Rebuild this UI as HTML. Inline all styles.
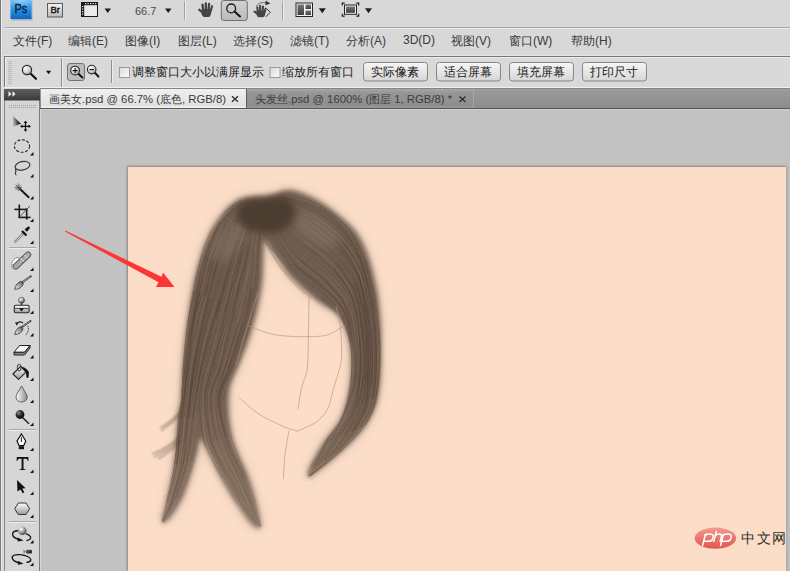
<!DOCTYPE html>
<html><head><meta charset="utf-8">
<style>
*{margin:0;padding:0;box-sizing:border-box}
html,body{width:794px;height:571px;overflow:hidden;background:#fff;font-family:"Liberation Sans",sans-serif}
.abs{position:absolute}
#app{position:absolute;left:0;top:0;width:790px;height:571px;background:#d8d8d8;overflow:hidden}
#lline{left:0;top:0;width:2px;height:571px;background:linear-gradient(90deg,#7c7c7c 50%,#e8e8e8 50%)}
#hline1{left:5px;top:27px;width:785px;height:1px;background:#a4a4a4}
#hline1b{left:5px;top:28px;width:785px;height:1px;background:#ececec}
#opt{left:4px;top:56px;width:786px;height:32px;border-top:1px solid #777;border-left:1px solid #777;background:#d9d9d9;box-shadow:inset 1px 1px 0 #eeeeee}
#optabove{left:4px;top:55px;width:786px;height:1px;background:#e4e4e4}
#optbot{left:4px;top:87px;width:786px;height:1px;background:#f0f0f0}
#tabbar{left:40px;top:88px;width:750px;height:22px;background:linear-gradient(#858585 0,#858585 1px,#a2a2a2 1px,#a2a2a2 2px,#9a9a9a 2px,#8c8c8c 20px,#555 20px,#555 21px,#d0d0d0 21px,#d0d0d0 22px)}
#work{left:41px;top:110px;width:749px;height:461px;background:#c2c2c2}
#canvas{left:128px;top:167px;width:658px;height:404px;background:#fcdec8;box-shadow:0 0 3px 1px rgba(0,0,0,.18),-1px -1px 1px rgba(0,0,0,.12)}
#phead{left:4px;top:88px;width:36px;height:12px;background:linear-gradient(#5a5a5a,#3c3c3c)}
#tools{left:4px;top:100px;width:36px;height:471px;background:#d6d6d6;border-left:1px solid #8a8a8a;border-right:1px solid #7a7a7a}
.otxt{font-size:12px;color:#1a1a1a;white-space:nowrap;line-height:14px}
.tabt{font-size:11.3px;white-space:nowrap;line-height:12px}
.menu{top:33px;font-size:12px;color:#3a3a3a;white-space:nowrap}
</style></head><body>
<div id="app">
<div class="abs" id="lline"></div>
<div class="abs" id="hline1"></div>
<div class="abs" id="hline1b"></div>

<div class="abs" id="optabove"></div>
<div class="abs" id="opt"></div>
<div class="abs" id="optbot"></div>
<div class="abs" id="tabbar"></div>
<div class="abs" id="work"></div>
<div class="abs" id="canvas"></div>

<svg class="abs" style="left:0;top:0" width="794" height="571" viewBox="0 0 794 571">
<defs>
<filter id="b3" x="-20%" y="-20%" width="140%" height="140%"><feGaussianBlur stdDeviation="2.6"/></filter>
<filter id="b1" x="-20%" y="-20%" width="140%" height="140%"><feGaussianBlur stdDeviation="0.45"/></filter>
<filter id="b6" x="-50%" y="-50%" width="200%" height="200%"><feGaussianBlur stdDeviation="6"/></filter>
<filter id="b4" x="-50%" y="-50%" width="200%" height="200%"><feGaussianBlur stdDeviation="3.5"/></filter>
<filter id="b5" x="-50%" y="-50%" width="200%" height="200%"><feGaussianBlur stdDeviation="5"/></filter>
<linearGradient id="fadeg" gradientUnits="userSpaceOnUse" x1="0" x2="0" y1="380" y2="535"><stop offset="0" stop-color="#fff"/><stop offset="1" stop-color="#fff" stop-opacity="0.8"/></linearGradient><mask id="fm" maskUnits="userSpaceOnUse" x="0" y="0" width="794" height="571"><rect x="0" y="0" width="794" height="571" fill="url(#fadeg)"/></mask>
<filter id="bw" filterUnits="userSpaceOnUse" x="140" y="400" width="50" height="70"><feGaussianBlur stdDeviation="1"/></filter>
<clipPath id="hc"><path d="M232.0,204.0 C236.2,200.9 239.7,198.9 246.0,197.5 C252.3,196.1 263.5,196.7 270.0,195.5 C276.5,194.3 280.2,191.1 285.0,190.5 C289.8,189.9 292.8,189.9 299.0,192.0 C305.2,194.1 314.7,198.5 322.0,203.0 C329.3,207.5 337.0,213.7 343.0,219.0 C349.0,224.3 353.7,228.3 358.0,235.0 C362.3,241.7 365.7,248.5 369.0,259.0 C372.3,269.5 376.0,283.3 378.0,298.0 C380.0,312.7 381.0,330.7 381.0,347.0 C381.0,363.3 380.5,383.0 378.0,396.0 C375.5,409.0 371.8,416.0 366.0,425.0 C360.2,434.0 351.7,441.8 343.0,450.0 C334.3,458.2 319.8,469.5 314.0,474.0 C308.2,478.5 308.8,477.8 308.0,477.0 C307.2,476.2 306.7,474.3 309.0,469.0 C311.3,463.7 316.7,453.5 322.0,445.0 C327.3,436.5 336.3,428.0 341.0,418.0 C345.7,408.0 348.3,396.0 350.0,385.0 C351.7,374.0 351.7,361.2 351.0,352.0 C350.3,342.8 348.3,336.3 346.0,330.0 C343.7,323.7 341.7,318.8 337.0,314.0 C332.3,309.2 325.3,306.8 318.0,301.0 C310.7,295.2 299.2,285.3 293.0,279.0 C286.8,272.7 285.5,269.2 281.0,263.0 C276.5,256.8 268.8,245.7 266.0,242.0 C263.2,238.3 264.5,238.0 264.0,241.0 C263.5,244.0 263.3,253.2 263.0,260.0 C262.7,266.8 263.0,273.7 262.0,282.0 C261.0,290.3 259.2,300.7 257.0,310.0 C254.8,319.3 251.8,329.3 249.0,338.0 C246.2,346.7 243.3,353.0 240.0,362.0 C236.7,371.0 230.3,379.7 229.0,392.0 C227.7,404.3 228.7,421.7 232.0,436.0 C235.3,450.3 244.8,466.5 249.0,478.0 C253.2,489.5 255.0,496.8 257.0,505.0 C259.0,513.2 261.8,523.7 261.0,527.0 C260.2,530.3 255.8,528.5 252.0,525.0 C248.2,521.5 243.2,513.8 238.0,506.0 C232.8,498.2 226.7,488.3 221.0,478.0 C215.3,467.7 207.5,450.5 204.0,444.0 C200.5,437.5 201.2,437.5 200.0,439.0 C198.8,440.5 199.5,444.2 197.0,453.0 C194.5,461.8 189.3,481.3 185.0,492.0 C180.7,502.7 174.8,512.0 171.0,517.0 C167.2,522.0 162.8,524.3 162.0,522.0 C161.2,519.7 164.0,512.7 166.0,503.0 C168.0,493.3 172.0,478.5 174.0,464.0 C176.0,449.5 176.8,426.7 178.0,416.0 C179.2,405.3 180.2,408.7 181.0,400.0 C181.8,391.3 182.0,376.5 183.0,364.0 C184.0,351.5 185.3,337.7 187.0,325.0 C188.7,312.3 191.3,297.2 193.0,288.0 C194.7,278.8 195.3,276.3 197.0,270.0 C198.7,263.7 200.7,256.5 203.0,250.0 C205.3,243.5 208.0,236.7 211.0,231.0 C214.0,225.3 217.5,220.5 221.0,216.0 C224.5,211.5 227.8,207.1 232.0,204.0Z"/></clipPath>
</defs>
<g mask="url(#fm)">
<path d="M232.0,204.0 C236.2,200.9 239.7,198.9 246.0,197.5 C252.3,196.1 263.5,196.7 270.0,195.5 C276.5,194.3 280.2,191.1 285.0,190.5 C289.8,189.9 292.8,189.9 299.0,192.0 C305.2,194.1 314.7,198.5 322.0,203.0 C329.3,207.5 337.0,213.7 343.0,219.0 C349.0,224.3 353.7,228.3 358.0,235.0 C362.3,241.7 365.7,248.5 369.0,259.0 C372.3,269.5 376.0,283.3 378.0,298.0 C380.0,312.7 381.0,330.7 381.0,347.0 C381.0,363.3 380.5,383.0 378.0,396.0 C375.5,409.0 371.8,416.0 366.0,425.0 C360.2,434.0 351.7,441.8 343.0,450.0 C334.3,458.2 319.8,469.5 314.0,474.0 C308.2,478.5 308.8,477.8 308.0,477.0 C307.2,476.2 306.7,474.3 309.0,469.0 C311.3,463.7 316.7,453.5 322.0,445.0 C327.3,436.5 336.3,428.0 341.0,418.0 C345.7,408.0 348.3,396.0 350.0,385.0 C351.7,374.0 351.7,361.2 351.0,352.0 C350.3,342.8 348.3,336.3 346.0,330.0 C343.7,323.7 341.7,318.8 337.0,314.0 C332.3,309.2 325.3,306.8 318.0,301.0 C310.7,295.2 299.2,285.3 293.0,279.0 C286.8,272.7 285.5,269.2 281.0,263.0 C276.5,256.8 268.8,245.7 266.0,242.0 C263.2,238.3 264.5,238.0 264.0,241.0 C263.5,244.0 263.3,253.2 263.0,260.0 C262.7,266.8 263.0,273.7 262.0,282.0 C261.0,290.3 259.2,300.7 257.0,310.0 C254.8,319.3 251.8,329.3 249.0,338.0 C246.2,346.7 243.3,353.0 240.0,362.0 C236.7,371.0 230.3,379.7 229.0,392.0 C227.7,404.3 228.7,421.7 232.0,436.0 C235.3,450.3 244.8,466.5 249.0,478.0 C253.2,489.5 255.0,496.8 257.0,505.0 C259.0,513.2 261.8,523.7 261.0,527.0 C260.2,530.3 255.8,528.5 252.0,525.0 C248.2,521.5 243.2,513.8 238.0,506.0 C232.8,498.2 226.7,488.3 221.0,478.0 C215.3,467.7 207.5,450.5 204.0,444.0 C200.5,437.5 201.2,437.5 200.0,439.0 C198.8,440.5 199.5,444.2 197.0,453.0 C194.5,461.8 189.3,481.3 185.0,492.0 C180.7,502.7 174.8,512.0 171.0,517.0 C167.2,522.0 162.8,524.3 162.0,522.0 C161.2,519.7 164.0,512.7 166.0,503.0 C168.0,493.3 172.0,478.5 174.0,464.0 C176.0,449.5 176.8,426.7 178.0,416.0 C179.2,405.3 180.2,408.7 181.0,400.0 C181.8,391.3 182.0,376.5 183.0,364.0 C184.0,351.5 185.3,337.7 187.0,325.0 C188.7,312.3 191.3,297.2 193.0,288.0 C194.7,278.8 195.3,276.3 197.0,270.0 C198.7,263.7 200.7,256.5 203.0,250.0 C205.3,243.5 208.0,236.7 211.0,231.0 C214.0,225.3 217.5,220.5 221.0,216.0 C224.5,211.5 227.8,207.1 232.0,204.0Z" fill="#8d7a6b" opacity="0.4" filter="url(#b6)"/>
<path d="M232.0,204.0 C236.2,200.9 239.7,198.9 246.0,197.5 C252.3,196.1 263.5,196.7 270.0,195.5 C276.5,194.3 280.2,191.1 285.0,190.5 C289.8,189.9 292.8,189.9 299.0,192.0 C305.2,194.1 314.7,198.5 322.0,203.0 C329.3,207.5 337.0,213.7 343.0,219.0 C349.0,224.3 353.7,228.3 358.0,235.0 C362.3,241.7 365.7,248.5 369.0,259.0 C372.3,269.5 376.0,283.3 378.0,298.0 C380.0,312.7 381.0,330.7 381.0,347.0 C381.0,363.3 380.5,383.0 378.0,396.0 C375.5,409.0 371.8,416.0 366.0,425.0 C360.2,434.0 351.7,441.8 343.0,450.0 C334.3,458.2 319.8,469.5 314.0,474.0 C308.2,478.5 308.8,477.8 308.0,477.0 C307.2,476.2 306.7,474.3 309.0,469.0 C311.3,463.7 316.7,453.5 322.0,445.0 C327.3,436.5 336.3,428.0 341.0,418.0 C345.7,408.0 348.3,396.0 350.0,385.0 C351.7,374.0 351.7,361.2 351.0,352.0 C350.3,342.8 348.3,336.3 346.0,330.0 C343.7,323.7 341.7,318.8 337.0,314.0 C332.3,309.2 325.3,306.8 318.0,301.0 C310.7,295.2 299.2,285.3 293.0,279.0 C286.8,272.7 285.5,269.2 281.0,263.0 C276.5,256.8 268.8,245.7 266.0,242.0 C263.2,238.3 264.5,238.0 264.0,241.0 C263.5,244.0 263.3,253.2 263.0,260.0 C262.7,266.8 263.0,273.7 262.0,282.0 C261.0,290.3 259.2,300.7 257.0,310.0 C254.8,319.3 251.8,329.3 249.0,338.0 C246.2,346.7 243.3,353.0 240.0,362.0 C236.7,371.0 230.3,379.7 229.0,392.0 C227.7,404.3 228.7,421.7 232.0,436.0 C235.3,450.3 244.8,466.5 249.0,478.0 C253.2,489.5 255.0,496.8 257.0,505.0 C259.0,513.2 261.8,523.7 261.0,527.0 C260.2,530.3 255.8,528.5 252.0,525.0 C248.2,521.5 243.2,513.8 238.0,506.0 C232.8,498.2 226.7,488.3 221.0,478.0 C215.3,467.7 207.5,450.5 204.0,444.0 C200.5,437.5 201.2,437.5 200.0,439.0 C198.8,440.5 199.5,444.2 197.0,453.0 C194.5,461.8 189.3,481.3 185.0,492.0 C180.7,502.7 174.8,512.0 171.0,517.0 C167.2,522.0 162.8,524.3 162.0,522.0 C161.2,519.7 164.0,512.7 166.0,503.0 C168.0,493.3 172.0,478.5 174.0,464.0 C176.0,449.5 176.8,426.7 178.0,416.0 C179.2,405.3 180.2,408.7 181.0,400.0 C181.8,391.3 182.0,376.5 183.0,364.0 C184.0,351.5 185.3,337.7 187.0,325.0 C188.7,312.3 191.3,297.2 193.0,288.0 C194.7,278.8 195.3,276.3 197.0,270.0 C198.7,263.7 200.7,256.5 203.0,250.0 C205.3,243.5 208.0,236.7 211.0,231.0 C214.0,225.3 217.5,220.5 221.0,216.0 C224.5,211.5 227.8,207.1 232.0,204.0Z" fill="#6f5d50" filter="url(#b3)"/>
<g filter="url(#b1)"><g clip-path="url(#hc)"><path d="M246.3,204.1 C243.2,207.8 233.0,217.2 227.9,226.5 C222.8,235.9 219.4,248.7 215.9,260.3 C212.4,271.8 209.8,284.1 206.9,295.9 C204.0,307.7 201.2,318.8 198.5,331.0 C195.8,343.2 192.7,354.8 190.7,369.1 C188.8,383.4 188.6,401.2 186.9,416.8 C185.1,432.5 182.7,448.8 180.1,462.9 C177.6,477.0 173.0,495.0 171.6,501.5" stroke="#9a8576" stroke-opacity="0.24" stroke-width="0.34" fill="none"/>
<path d="M215.1,260.5 C213.5,266.4 208.1,283.8 205.1,295.6 C202.2,307.4 199.7,319.2 197.3,331.4 C195.0,343.6 193.0,354.4 191.1,368.7 C189.2,383.0 186.8,409.1 185.9,417.2" stroke="#9a8576" stroke-opacity="0.49" stroke-width="0.34" fill="none"/>
<path d="M211.4,298.8 C209.8,304.6 204.6,321.6 201.9,333.6 C199.1,345.6 197.0,356.7 194.8,370.8 C192.5,384.9 190.2,402.8 188.3,418.1 C186.5,433.3 184.6,454.9 183.8,462.3" stroke="#4c3b30" stroke-opacity="0.47" stroke-width="0.40" fill="none"/>
<path d="M260.3,211.4 C259.5,215.9 257.7,228.0 255.4,238.5 C253.1,248.9 249.9,262.2 246.5,274.0 C243.1,285.8 239.0,297.8 235.0,309.3 C231.1,320.9 226.9,331.8 222.7,343.4 C218.5,355.0 213.7,366.1 210.0,378.8 C206.3,391.5 203.3,406.1 200.6,419.7 C198.0,433.3 197.0,447.3 193.9,460.5 C190.8,473.6 184.1,492.2 182.2,498.5" stroke="#9a8576" stroke-opacity="0.40" stroke-width="0.30" fill="none"/>
<path d="M249.9,236.7 C248.5,242.4 245.2,259.5 241.8,271.2 C238.4,283.0 233.1,295.3 229.3,307.1 C225.6,318.8 223.1,330.1 219.5,341.8 C215.9,353.5 210.8,364.2 207.5,377.2 C204.2,390.3 202.3,405.9 199.7,419.9 C197.1,433.8 195.4,447.6 191.9,460.7 C188.4,473.9 183.6,488.5 178.9,498.7 C174.2,508.9 166.2,518.0 163.6,521.9" stroke="#4c3b30" stroke-opacity="0.33" stroke-width="0.33" fill="none"/>
<path d="M218.9,301.9 C217.4,307.8 212.9,325.6 209.8,337.6 C206.6,349.5 203.2,360.1 200.3,373.6 C197.3,387.1 194.2,403.7 192.1,418.4 C190.0,433.1 190.7,448.0 187.8,461.6 C184.9,475.1 176.9,493.2 174.8,499.6" stroke="#4c3b30" stroke-opacity="0.26" stroke-width="0.59" fill="none"/>
<path d="M231.2,227.0 C229.1,232.7 222.0,249.4 218.4,261.1 C214.8,272.8 212.4,285.4 209.5,297.3 C206.6,309.1 204.0,320.0 201.1,332.1 C198.2,344.2 194.5,355.6 192.2,369.8 C189.8,384.1 188.8,402.1 187.1,417.6 C185.3,433.1 184.4,449.0 181.9,462.9 C179.3,476.8 173.5,494.5 171.8,500.8" stroke="#4c3b30" stroke-opacity="0.31" stroke-width="0.31" fill="none"/>
<path d="M240.1,200.0 C236.2,203.6 223.1,211.9 216.7,221.1 C210.2,230.3 205.0,243.4 201.3,255.1 C197.6,266.8 196.9,279.4 194.5,291.1 C192.0,302.8 188.8,313.1 186.8,325.2 C184.7,337.4 183.6,348.9 182.2,364.1 C180.7,379.3 178.7,407.6 178.0,416.3" stroke="#4c3b30" stroke-opacity="0.43" stroke-width="0.44" fill="none"/>
<path d="M244.6,201.9 C241.1,205.6 229.4,214.9 223.4,224.1 C217.4,233.4 212.4,246.0 208.7,257.6 C205.0,269.2 204.0,282.1 201.3,293.8 C198.5,305.6 194.6,315.9 192.2,328.1 C189.7,340.4 188.0,352.6 186.5,367.3 C185.0,382.0 184.5,400.2 183.2,416.3 C181.9,432.4 181.0,449.6 178.5,463.9 C176.1,478.1 171.1,492.3 168.4,501.9 C165.7,511.5 163.5,518.3 162.5,521.6" stroke="#4c3b30" stroke-opacity="0.48" stroke-width="0.43" fill="none"/>
<path d="M231.5,307.3 C229.5,313.3 223.1,331.2 219.1,342.9 C215.2,354.7 211.0,365.1 207.8,377.9 C204.6,390.7 202.6,406.1 200.0,420.0 C197.4,433.8 195.5,447.9 192.1,461.0 C188.8,474.1 181.9,492.4 179.8,498.7" stroke="#4c3b30" stroke-opacity="0.43" stroke-width="0.34" fill="none"/>
<path d="M207.2,257.0 C205.8,263.0 202.0,281.5 199.2,293.3 C196.4,305.0 192.8,315.4 190.5,327.5 C188.1,339.5 186.7,351.0 185.1,365.8 C183.6,380.5 182.0,407.6 181.4,416.0" stroke="#4c3b30" stroke-opacity="0.44" stroke-width="0.45" fill="none"/>
<path d="M226.7,225.5 C224.5,231.0 217.2,247.3 213.3,258.8 C209.4,270.4 206.3,283.0 203.3,294.9 C200.3,306.7 197.6,317.6 195.4,329.7 C193.2,341.9 191.8,353.4 189.8,367.9 C187.9,382.4 184.6,408.6 183.5,416.8" stroke="#9a8576" stroke-opacity="0.49" stroke-width="0.42" fill="none"/>
<path d="M251.9,206.2 C249.1,210.1 239.7,220.0 235.1,229.7 C230.6,239.3 228.0,252.4 224.4,264.0 C220.8,275.7 216.8,287.8 213.7,299.5 C210.5,311.2 208.4,322.1 205.5,334.2 C202.7,346.2 199.5,357.8 196.7,371.7 C194.0,385.7 191.1,402.7 189.0,417.7 C187.0,432.8 187.3,448.2 184.5,462.1 C181.7,476.0 175.7,491.1 172.2,501.1 C168.8,511.2 165.1,519.0 163.7,522.6" stroke="#9a8576" stroke-opacity="0.21" stroke-width="0.53" fill="none"/>
<path d="M245.1,203.2 C242.2,206.9 233.0,216.4 227.6,225.8 C222.3,235.1 216.6,247.6 212.9,259.3 C209.2,270.9 208.1,283.7 205.4,295.5 C202.8,307.3 199.8,317.7 197.0,329.9 C194.3,342.1 191.1,354.1 189.1,368.6 C187.0,383.0 185.3,408.6 184.6,416.6" stroke="#9a8576" stroke-opacity="0.50" stroke-width="0.43" fill="none"/>
<path d="M233.3,308.8 C231.5,314.6 226.1,331.7 222.0,343.3 C217.9,355.0 212.2,365.9 208.8,378.6 C205.3,391.3 203.8,405.7 201.3,419.4 C198.8,433.1 197.6,447.9 194.0,460.9 C190.3,474.0 181.9,491.7 179.5,497.8" stroke="#4c3b30" stroke-opacity="0.23" stroke-width="0.55" fill="none"/>
<path d="M222.1,263.7 C220.3,269.6 214.6,287.4 211.5,299.0 C208.4,310.7 206.1,321.9 203.4,333.8 C200.6,345.8 197.3,356.8 194.7,370.7 C192.1,384.6 189.9,402.0 187.7,417.3 C185.6,432.6 184.7,448.7 182.0,462.6 C179.4,476.4 173.5,494.1 171.8,500.4" stroke="#4c3b30" stroke-opacity="0.21" stroke-width="0.36" fill="none"/>
<path d="M213.0,259.1 C211.7,265.1 208.2,283.2 205.3,295.0 C202.4,306.9 198.4,318.0 195.7,330.2 C193.0,342.3 190.8,353.6 189.1,368.0 C187.3,382.5 186.6,401.0 185.1,416.8 C183.6,432.5 181.1,454.8 180.3,462.4" stroke="#4c3b30" stroke-opacity="0.23" stroke-width="0.59" fill="none"/>
<path d="M257.9,210.7 C257.0,215.1 254.8,226.9 252.4,237.2 C249.9,247.4 246.8,260.6 243.3,272.2 C239.8,283.8 235.2,295.2 231.2,306.8 C227.3,318.4 223.4,329.8 219.6,341.6 C215.8,353.5 211.7,365.0 208.4,377.9 C205.0,390.9 202.0,405.5 199.4,419.3 C196.7,433.1 195.5,447.3 192.4,460.6 C189.3,473.9 182.5,492.6 180.5,499.0" stroke="#9a8576" stroke-opacity="0.21" stroke-width="0.49" fill="none"/>
<path d="M235.6,309.1 C233.4,315.1 226.4,333.1 222.4,344.7 C218.4,356.3 215.1,366.3 211.7,378.9 C208.4,391.4 203.7,413.3 202.1,420.1" stroke="#4c3b30" stroke-opacity="0.22" stroke-width="0.57" fill="none"/>
<path d="M226.6,225.9 C224.5,231.6 217.5,248.5 214.0,260.2 C210.5,271.9 208.6,284.1 205.7,295.9 C202.7,307.6 198.8,318.5 196.3,330.7 C193.8,342.9 192.6,354.8 190.6,369.2 C188.6,383.5 186.0,401.2 184.2,416.8 C182.5,432.5 180.7,455.4 180.0,463.1" stroke="#4c3b30" stroke-opacity="0.48" stroke-width="0.31" fill="none"/>
<path d="M250.9,206.1 C248.2,209.9 239.4,219.2 234.6,228.9 C229.8,238.6 226.0,252.4 222.3,264.2 C218.6,275.9 215.6,287.6 212.4,299.3 C209.2,310.9 205.6,322.3 203.0,334.2 C200.4,346.1 199.0,357.0 196.9,370.9 C194.7,384.8 191.3,410.0 190.2,417.8" stroke="#4c3b30" stroke-opacity="0.32" stroke-width="0.52" fill="none"/>
<path d="M220.4,262.6 C219.1,268.5 215.4,286.1 212.2,298.0 C209.0,309.8 204.1,321.6 201.1,333.6 C198.0,345.6 196.0,356.1 193.9,370.1 C191.7,384.2 190.2,402.7 188.1,418.1 C186.1,433.6 184.3,449.0 181.7,462.8 C179.1,476.7 174.2,494.9 172.7,501.3" stroke="#9a8576" stroke-opacity="0.28" stroke-width="0.45" fill="none"/>
<path d="M209.8,258.5 C208.5,264.4 204.4,282.2 201.8,293.9 C199.1,305.5 196.2,316.1 193.9,328.3 C191.7,340.4 190.0,352.2 188.3,367.0 C186.5,381.8 185.1,401.0 183.4,416.9 C181.6,432.9 178.5,455.1 177.5,462.7" stroke="#4c3b30" stroke-opacity="0.49" stroke-width="0.38" fill="none"/>
<path d="M254.0,207.9 C252.1,212.1 246.6,222.8 243.0,232.7 C239.3,242.6 235.3,255.7 232.0,267.4 C228.7,279.2 226.7,291.3 223.2,303.1 C219.6,315.0 214.3,326.7 210.9,338.6 C207.5,350.5 205.8,361.2 202.9,374.4 C200.0,387.7 195.1,411.0 193.5,418.3" stroke="#4c3b30" stroke-opacity="0.42" stroke-width="0.36" fill="none"/>
<path d="M205.1,295.8 C203.5,301.7 198.1,318.8 195.6,330.9 C193.0,343.0 191.7,354.2 189.8,368.5 C188.0,382.8 186.2,401.0 184.6,416.9 C183.0,432.7 183.1,449.4 180.4,463.5 C177.8,477.6 171.6,491.7 168.7,501.6 C165.8,511.4 164.1,518.9 163.2,522.4" stroke="#9a8576" stroke-opacity="0.48" stroke-width="0.58" fill="none"/>
<path d="M215.3,300.9 C214.0,306.8 209.8,324.1 207.1,336.0 C204.3,347.8 201.3,358.4 198.8,371.9 C196.2,385.5 194.3,402.5 191.9,417.5 C189.4,432.5 187.4,448.1 184.2,462.0 C181.0,475.8 176.2,490.6 172.9,500.6 C169.5,510.6 165.6,518.6 164.2,522.2" stroke="#9a8576" stroke-opacity="0.29" stroke-width="0.58" fill="none"/>
<path d="M200.4,294.2 C199.1,300.0 194.9,316.8 192.9,328.9 C190.8,340.9 189.6,351.8 187.9,366.5 C186.2,381.2 184.4,400.9 182.6,416.9 C180.8,433.0 177.9,455.2 177.0,462.9" stroke="#9a8576" stroke-opacity="0.21" stroke-width="0.40" fill="none"/>
<path d="M233.8,228.7 C231.7,234.3 224.6,250.9 221.0,262.5 C217.5,274.1 215.5,286.4 212.5,298.2 C209.5,310.0 206.3,320.9 203.2,333.1 C200.1,345.2 196.5,356.9 193.9,371.0 C191.4,385.2 189.0,410.4 188.0,418.2" stroke="#9a8576" stroke-opacity="0.21" stroke-width="0.48" fill="none"/>
<path d="M210.1,297.9 C208.7,303.8 204.1,321.4 201.5,333.5 C198.9,345.6 196.8,356.5 194.5,370.6 C192.3,384.7 189.8,402.5 187.9,417.9 C186.1,433.3 186.2,449.2 183.5,462.9 C180.9,476.7 175.5,490.7 171.9,500.5 C168.3,510.2 163.5,518.0 161.8,521.5" stroke="#4c3b30" stroke-opacity="0.43" stroke-width="0.41" fill="none"/>
<path d="M237.7,270.2 C236.0,276.0 230.8,293.5 227.2,305.2 C223.7,316.9 220.2,328.5 216.6,340.3 C212.9,352.1 208.5,362.9 205.4,376.0 C202.2,389.1 200.1,404.8 197.5,419.0 C194.9,433.1 191.1,453.9 189.8,460.9" stroke="#9a8576" stroke-opacity="0.49" stroke-width="0.49" fill="none"/>
<path d="M213.7,260.0 C212.2,266.0 207.5,284.1 204.4,295.8 C201.3,307.4 197.5,317.8 195.1,329.9 C192.7,342.1 191.4,354.2 189.8,368.7 C188.2,383.2 187.5,401.2 185.6,416.9 C183.8,432.6 181.6,448.7 178.9,462.9 C176.2,477.1 171.0,495.6 169.4,502.2" stroke="#4c3b30" stroke-opacity="0.30" stroke-width="0.40" fill="none"/>
<path d="M229.8,227.5 C227.8,233.1 221.2,249.5 217.5,261.1 C213.8,272.7 210.5,285.3 207.5,297.3 C204.6,309.3 202.0,320.6 199.7,332.8 C197.4,345.0 196.0,356.4 193.8,370.4 C191.6,384.4 188.7,401.6 186.5,416.9 C184.3,432.3 183.1,448.5 180.6,462.6 C178.2,476.6 174.7,491.2 171.7,501.1 C168.6,511.0 163.7,518.4 162.1,521.9" stroke="#4c3b30" stroke-opacity="0.29" stroke-width="0.38" fill="none"/>
<path d="M212.7,259.4 C211.5,265.3 208.2,283.2 205.3,295.0 C202.4,306.8 198.0,317.8 195.4,330.1 C192.7,342.3 191.1,353.9 189.4,368.3 C187.7,382.7 186.7,400.9 185.1,416.6 C183.4,432.3 182.3,448.1 179.5,462.4 C176.8,476.6 171.3,492.2 168.4,502.1 C165.4,512.0 163.0,518.6 161.9,521.9" stroke="#4c3b30" stroke-opacity="0.27" stroke-width="0.32" fill="none"/>
<path d="M229.3,266.7 C227.8,272.6 223.8,290.5 220.3,302.2 C216.8,313.9 211.5,325.3 208.2,337.2 C204.9,349.0 203.2,359.9 200.5,373.4 C197.8,386.9 193.3,410.7 191.9,418.2" stroke="#4c3b30" stroke-opacity="0.26" stroke-width="0.39" fill="none"/>
<path d="M209.9,258.3 C208.5,264.2 204.5,281.7 201.7,293.6 C198.9,305.4 195.4,317.1 193.1,329.3 C190.8,341.5 189.6,352.3 187.9,367.0 C186.1,381.7 184.3,401.3 182.6,417.4 C180.9,433.4 180.2,449.2 177.8,463.3 C175.4,477.4 169.7,495.4 168.1,501.9" stroke="#4c3b30" stroke-opacity="0.32" stroke-width="0.58" fill="none"/>
<path d="M232.7,228.8 C230.8,234.6 225.0,251.9 221.4,263.4 C217.8,275.0 214.3,286.4 211.1,298.1 C207.9,309.9 204.8,321.9 202.1,334.1 C199.4,346.2 196.8,357.0 194.8,371.0 C192.7,385.0 192.0,402.8 189.9,418.0 C187.8,433.2 183.6,454.7 182.3,462.1" stroke="#9a8576" stroke-opacity="0.48" stroke-width="0.59" fill="none"/>
<path d="M235.5,230.1 C233.6,235.9 228.1,252.9 224.4,264.5 C220.7,276.2 216.8,288.3 213.4,300.0 C210.0,311.7 206.8,322.5 204.2,334.5 C201.5,346.6 199.8,358.3 197.3,372.1 C194.8,386.0 191.5,402.6 189.3,417.6 C187.1,432.6 186.6,448.3 183.9,462.1 C181.2,475.8 176.5,490.1 172.9,500.1 C169.3,510.2 164.1,518.6 162.4,522.3" stroke="#4c3b30" stroke-opacity="0.45" stroke-width="0.50" fill="none"/>
<path d="M222.3,303.1 C220.5,308.9 215.2,326.3 211.8,338.2 C208.4,350.1 205.1,360.8 202.0,374.3 C199.0,387.8 195.9,404.8 193.5,419.3 C191.2,433.7 190.8,447.8 187.9,461.3 C185.1,474.7 180.6,489.9 176.6,500.0 C172.7,510.2 166.2,518.7 164.1,522.4" stroke="#9a8576" stroke-opacity="0.31" stroke-width="0.41" fill="none"/>
<path d="M248.4,235.6 C247.2,241.4 244.3,259.0 241.1,270.6 C238.0,282.3 233.3,293.7 229.4,305.5 C225.6,317.4 221.7,329.6 217.9,341.5 C214.1,353.5 209.9,364.3 206.4,377.2 C202.9,390.0 199.5,404.7 196.9,418.7 C194.4,432.7 194.3,447.7 191.1,461.0 C187.9,474.3 179.9,492.3 177.7,498.5" stroke="#9a8576" stroke-opacity="0.31" stroke-width="0.53" fill="none"/>
<path d="M207.9,257.8 C206.4,263.7 201.2,281.2 198.6,292.9 C196.0,304.6 194.4,315.7 192.2,328.0 C190.0,340.2 187.5,351.3 185.7,366.2 C183.8,381.0 181.9,408.7 181.2,417.2" stroke="#4c3b30" stroke-opacity="0.37" stroke-width="0.56" fill="none"/>
<path d="M243.5,201.4 C239.4,204.9 225.7,213.2 219.2,222.4 C212.8,231.7 208.4,245.2 204.7,256.8 C201.0,268.4 199.3,280.2 197.0,291.9 C194.7,303.6 192.8,314.7 190.7,327.0 C188.6,339.4 186.2,351.0 184.4,366.0 C182.5,380.9 181.0,400.5 179.5,416.8 C178.1,433.1 177.5,449.5 175.6,463.7 C173.7,478.0 170.1,492.9 167.9,502.6 C165.8,512.3 163.5,518.6 162.6,521.8" stroke="#9a8576" stroke-opacity="0.29" stroke-width="0.49" fill="none"/>
<path d="M248.9,204.5 C246.2,208.5 237.8,218.9 232.9,228.5 C228.1,238.1 223.4,250.6 219.8,262.2 C216.2,273.8 214.3,286.3 211.4,298.1 C208.5,310.0 205.2,321.3 202.3,333.4 C199.5,345.4 196.8,356.4 194.3,370.4 C191.9,384.5 189.4,402.3 187.6,417.5 C185.8,432.8 186.3,448.0 183.6,461.9 C180.8,475.9 173.0,494.7 170.9,501.3" stroke="#4c3b30" stroke-opacity="0.43" stroke-width="0.42" fill="none"/>
<path d="M226.5,225.1 C224.4,230.8 217.1,247.7 213.6,259.5 C210.0,271.2 208.2,283.7 205.2,295.6 C202.2,307.4 198.4,318.7 195.7,330.8 C193.0,342.9 190.7,353.9 188.8,368.3 C186.9,382.6 185.1,408.7 184.4,416.7" stroke="#4c3b30" stroke-opacity="0.25" stroke-width="0.39" fill="none"/>
<path d="M206.4,296.0 C205.0,301.8 201.0,318.9 198.3,330.9 C195.6,343.0 192.6,354.0 190.4,368.3 C188.1,382.6 186.6,400.9 184.9,416.6 C183.1,432.4 180.7,455.4 179.9,463.1" stroke="#9a8576" stroke-opacity="0.48" stroke-width="0.57" fill="none"/>
<path d="M219.6,222.1 C217.0,227.7 207.3,243.8 203.6,255.4 C199.8,266.9 199.3,279.4 196.9,291.3 C194.5,303.2 191.2,314.4 189.1,326.8 C187.0,339.2 185.6,350.8 184.3,365.8 C183.0,380.8 182.4,400.6 181.1,416.9 C179.9,433.2 177.4,455.9 176.6,463.7" stroke="#4c3b30" stroke-opacity="0.32" stroke-width="0.48" fill="none"/>
<path d="M218.5,300.7 C216.6,306.7 210.6,324.5 207.2,336.5 C203.7,348.4 200.5,358.8 197.9,372.5 C195.2,386.2 192.9,403.9 191.0,418.7 C189.1,433.5 189.1,447.8 186.5,461.4 C183.9,475.0 179.5,490.0 175.7,500.2 C171.9,510.4 165.6,518.7 163.5,522.5" stroke="#9a8576" stroke-opacity="0.26" stroke-width="0.31" fill="none"/>
<path d="M247.8,273.9 C245.6,279.8 238.9,297.7 234.8,309.3 C230.7,321.0 227.5,332.1 223.4,343.7 C219.3,355.3 213.8,366.1 210.1,378.9 C206.4,391.7 204.2,406.7 201.4,420.3 C198.5,433.9 196.1,447.5 192.9,460.5 C189.6,473.6 186.9,488.3 182.1,498.6 C177.3,508.8 167.1,518.1 164.1,522.0" stroke="#4c3b30" stroke-opacity="0.21" stroke-width="0.46" fill="none"/>
<path d="M219.4,222.2 C217.1,227.9 209.6,244.5 205.7,256.2 C201.8,267.8 198.6,280.1 196.0,291.9 C193.4,303.6 191.6,314.5 189.9,326.7 C188.1,338.9 187.2,350.2 185.6,365.0 C183.9,379.9 181.6,399.4 180.1,415.9 C178.6,432.4 177.1,456.0 176.5,464.0" stroke="#4c3b30" stroke-opacity="0.48" stroke-width="0.37" fill="none"/>
<path d="M199.2,292.8 C198.3,298.8 195.4,316.5 193.5,328.8 C191.6,341.1 189.4,351.9 187.6,366.6 C185.7,381.2 184.3,400.4 182.5,416.5 C180.7,432.6 179.4,449.0 177.0,463.3 C174.6,477.5 169.4,495.4 167.9,501.8" stroke="#4c3b30" stroke-opacity="0.43" stroke-width="0.53" fill="none"/>
<path d="M242.0,233.3 C240.4,239.1 236.2,256.3 232.7,267.9 C229.2,279.4 224.4,291.2 220.9,302.9 C217.5,314.5 215.3,326.1 211.9,338.0 C208.5,349.9 203.3,360.9 200.5,374.3 C197.7,387.7 197.4,403.8 195.1,418.3 C192.8,432.8 188.2,454.0 186.8,461.2" stroke="#4c3b30" stroke-opacity="0.30" stroke-width="0.37" fill="none"/>
<path d="M248.2,273.7 C246.0,279.5 239.4,297.0 235.1,308.7 C230.9,320.4 227.0,332.2 222.8,343.9 C218.6,355.6 213.5,366.2 210.1,378.8 C206.8,391.4 204.1,412.8 202.9,419.6" stroke="#9a8576" stroke-opacity="0.28" stroke-width="0.52" fill="none"/>
<path d="M215.7,220.2 C213.2,225.9 204.5,242.9 200.6,254.5 C196.8,266.2 194.9,278.5 192.7,290.3 C190.4,302.1 188.8,313.0 187.1,325.3 C185.4,337.5 184.0,348.7 182.4,363.8 C180.7,378.8 178.8,398.9 177.4,415.6 C176.0,432.2 174.5,455.7 174.0,463.7" stroke="#4c3b30" stroke-opacity="0.34" stroke-width="0.31" fill="none"/>
<path d="M242.5,271.4 C240.8,277.5 236.3,295.9 232.3,307.7 C228.3,319.4 222.7,330.1 218.5,341.9 C214.3,353.6 210.1,365.1 207.1,378.0 C204.1,390.9 203.1,405.2 200.5,419.1 C198.0,432.9 193.1,454.0 191.7,461.0" stroke="#4c3b30" stroke-opacity="0.48" stroke-width="0.36" fill="none"/>
<path d="M222.9,303.6 C221.0,309.4 215.0,326.7 211.5,338.6 C208.1,350.5 205.1,361.9 202.3,375.2 C199.5,388.5 196.0,411.2 194.8,418.5" stroke="#9a8576" stroke-opacity="0.24" stroke-width="0.53" fill="none"/>
<path d="M250.0,235.9 C248.6,241.7 245.0,259.0 241.6,270.8 C238.2,282.6 233.5,294.9 229.6,306.6 C225.7,318.3 222.3,329.4 218.3,341.2 C214.4,352.9 209.3,363.9 205.8,377.0 C202.3,390.1 198.7,412.5 197.3,419.6" stroke="#9a8576" stroke-opacity="0.42" stroke-width="0.38" fill="none"/>
<path d="M244.9,202.9 C241.7,206.6 230.7,215.7 225.4,225.1 C220.0,234.4 216.1,247.3 212.6,259.0 C209.1,270.7 207.3,283.4 204.3,295.3 C201.3,307.2 196.8,318.1 194.5,330.3 C192.2,342.4 192.2,353.7 190.3,368.3 C188.5,382.8 185.1,401.7 183.3,417.4 C181.5,433.1 182.0,448.3 179.5,462.4 C176.9,476.6 169.9,495.7 168.0,502.3" stroke="#4c3b30" stroke-opacity="0.26" stroke-width="0.44" fill="none"/>
<path d="M227.1,306.2 C225.4,312.0 220.4,329.1 216.7,340.9 C213.0,352.6 208.4,363.6 205.1,376.6 C201.8,389.5 198.3,411.6 196.9,418.6" stroke="#4c3b30" stroke-opacity="0.35" stroke-width="0.57" fill="none"/>
<path d="M254.8,208.0 C253.2,212.4 248.8,224.2 245.4,234.3 C241.9,244.4 237.7,256.9 234.2,268.5 C230.8,280.1 228.3,292.3 224.7,304.0 C221.1,315.8 216.5,327.0 212.8,339.0 C209.2,350.9 205.7,362.6 202.8,375.8 C200.0,389.0 197.1,411.3 195.9,418.4" stroke="#4c3b30" stroke-opacity="0.47" stroke-width="0.31" fill="none"/>
<path d="M256.1,208.4 C254.5,212.7 250.1,224.1 246.7,234.2 C243.4,244.3 239.4,257.5 235.8,269.1 C232.3,280.7 229.4,292.3 225.7,304.0 C222.0,315.7 217.5,327.3 213.9,339.3 C210.2,351.2 206.7,362.6 203.7,375.9 C200.6,389.2 197.9,405.1 195.5,419.3 C193.0,433.5 190.0,454.2 188.9,461.1" stroke="#9a8576" stroke-opacity="0.41" stroke-width="0.34" fill="none"/>
<path d="M260.4,212.3 C259.8,216.8 258.6,229.1 256.6,239.5 C254.6,249.9 251.8,262.9 248.4,274.5 C245.1,286.1 240.8,297.3 236.5,309.0 C232.2,320.7 227.1,333.0 222.8,344.8 C218.6,356.7 214.7,367.4 211.1,379.9 C207.5,392.4 204.0,406.5 201.3,419.9 C198.5,433.2 198.0,446.9 194.5,460.0 C191.1,473.0 183.0,491.9 180.7,498.3" stroke="#9a8576" stroke-opacity="0.39" stroke-width="0.49" fill="none"/>
<path d="M200.9,293.0 C199.5,299.0 194.5,316.5 192.3,328.7 C190.2,341.0 189.9,351.8 188.1,366.4 C186.2,381.0 182.4,407.8 181.2,416.1" stroke="#4c3b30" stroke-opacity="0.20" stroke-width="0.42" fill="none"/>
<path d="M240.4,231.7 C238.4,237.5 232.3,255.0 228.6,266.6 C225.0,278.2 222.0,289.8 218.5,301.4 C215.1,313.0 211.0,324.3 207.9,336.2 C204.9,348.2 202.5,359.4 200.2,373.0 C197.9,386.6 196.1,403.2 193.9,417.9 C191.8,432.6 190.7,447.4 187.3,461.2 C184.0,474.9 178.0,490.1 173.9,500.3 C169.8,510.5 164.5,518.6 162.6,522.3" stroke="#4c3b30" stroke-opacity="0.42" stroke-width="0.51" fill="none"/>
<path d="M199.7,292.4 C198.1,298.2 192.6,315.0 190.5,327.4 C188.5,339.7 188.7,351.7 187.3,366.5 C185.8,381.4 182.8,408.1 181.9,416.4" stroke="#4c3b30" stroke-opacity="0.24" stroke-width="0.54" fill="none"/>
<path d="M230.4,227.1 C228.5,233.0 222.4,250.5 218.9,262.2 C215.3,273.9 212.6,285.7 209.4,297.3 C206.2,308.9 202.2,319.6 199.7,331.7 C197.1,343.9 196.0,355.8 194.0,370.1 C192.1,384.3 188.9,409.4 187.9,417.3" stroke="#4c3b30" stroke-opacity="0.31" stroke-width="0.53" fill="none"/>
<path d="M203.4,295.0 C201.9,300.7 196.9,317.0 194.6,329.3 C192.4,341.5 191.9,353.6 190.0,368.3 C188.0,383.0 184.2,409.3 183.0,417.5" stroke="#9a8576" stroke-opacity="0.43" stroke-width="0.58" fill="none"/>
<path d="M225.0,224.3 C222.7,230.1 214.7,247.5 211.1,259.2 C207.5,270.9 206.3,282.8 203.5,294.6 C200.6,306.4 196.4,317.9 194.1,330.0 C191.8,342.2 191.4,352.9 189.7,367.4 C188.0,382.0 185.7,401.5 184.0,417.4 C182.4,433.4 180.5,455.5 179.8,463.1" stroke="#4c3b30" stroke-opacity="0.37" stroke-width="0.42" fill="none"/>
<path d="M216.5,299.9 C214.8,305.8 209.6,323.2 206.4,335.2 C203.3,347.1 200.3,357.8 197.6,371.7 C194.8,385.6 191.8,403.6 189.8,418.7 C187.8,433.7 188.4,448.3 185.7,461.9 C183.1,475.5 175.9,493.8 174.0,500.1" stroke="#9a8576" stroke-opacity="0.21" stroke-width="0.36" fill="none"/>
<path d="M222.9,224.1 C220.6,229.8 212.5,246.8 208.9,258.3 C205.3,269.8 203.9,281.4 201.3,293.1 C198.7,304.8 195.7,316.1 193.3,328.5 C190.8,340.9 188.4,352.7 186.5,367.4 C184.6,382.2 183.3,400.7 181.9,416.8 C180.5,432.9 180.4,449.6 178.1,463.8 C175.9,478.0 170.1,495.6 168.5,502.0" stroke="#9a8576" stroke-opacity="0.48" stroke-width="0.58" fill="none"/>
<path d="M195.4,291.2 C194.0,297.0 189.5,313.7 187.4,326.0 C185.2,338.2 183.8,349.5 182.6,364.6 C181.4,379.7 181.3,399.8 180.1,416.3 C178.8,432.9 177.5,449.6 175.1,463.9 C172.7,478.3 167.5,496.1 165.9,502.5" stroke="#4c3b30" stroke-opacity="0.44" stroke-width="0.57" fill="none"/>
<path d="M245.4,272.2 C243.4,278.1 237.3,295.9 233.3,307.7 C229.3,319.5 225.3,331.3 221.4,343.2 C217.5,355.0 213.4,366.1 209.9,378.8 C206.3,391.4 203.1,405.3 200.0,419.0 C197.0,432.7 195.1,447.8 191.7,461.0 C188.3,474.2 181.7,492.0 179.7,498.2" stroke="#4c3b30" stroke-opacity="0.25" stroke-width="0.44" fill="none"/>
<path d="M253.0,237.5 C251.4,243.4 246.8,261.0 243.3,272.8 C239.9,284.5 236.3,296.6 232.4,308.2 C228.6,319.7 224.1,330.6 220.1,342.3 C216.1,354.0 212.0,365.3 208.6,378.2 C205.1,391.1 202.0,405.8 199.4,419.6 C196.8,433.3 194.1,453.9 193.0,460.8" stroke="#4c3b30" stroke-opacity="0.28" stroke-width="0.37" fill="none"/>
<path d="M224.4,225.2 C222.5,230.7 216.6,247.0 213.1,258.6 C209.5,270.2 206.2,282.8 203.3,294.7 C200.3,306.6 197.7,317.5 195.3,329.8 C192.9,342.0 190.7,353.7 189.0,368.2 C187.3,382.6 186.7,401.0 185.0,416.7 C183.3,432.4 181.4,448.4 178.7,462.5 C176.0,476.6 170.5,495.0 168.8,501.5" stroke="#9a8576" stroke-opacity="0.22" stroke-width="0.33" fill="none"/>
<path d="M220.2,301.8 C218.3,307.8 212.1,325.4 208.7,337.5 C205.3,349.5 202.8,360.4 200.0,374.0 C197.3,387.6 194.4,404.1 192.1,418.8 C189.9,433.5 189.0,448.5 186.4,462.0 C183.7,475.5 177.9,493.6 176.2,499.9" stroke="#4c3b30" stroke-opacity="0.28" stroke-width="0.36" fill="none"/>
<path d="M258.0,209.6 C256.7,214.1 253.4,226.4 250.5,236.7 C247.5,247.1 243.8,259.8 240.4,271.5 C237.0,283.1 233.9,294.9 230.1,306.7 C226.3,318.4 221.3,330.0 217.5,341.9 C213.8,353.7 210.9,364.8 207.7,377.7 C204.5,390.7 201.1,405.7 198.4,419.6 C195.6,433.5 194.6,447.7 191.2,461.0 C187.8,474.3 180.3,492.9 178.1,499.3" stroke="#9a8576" stroke-opacity="0.49" stroke-width="0.37" fill="none"/>
<path d="M243.1,201.9 C239.8,205.4 229.4,213.7 223.6,223.1 C217.8,232.4 212.1,246.4 208.2,258.1 C204.2,269.7 202.1,281.3 199.7,293.1 C197.2,304.8 195.4,316.4 193.4,328.7 C191.3,341.1 189.5,352.4 187.5,367.2 C185.6,381.9 183.1,401.2 181.6,417.2 C180.1,433.1 180.8,448.6 178.4,462.7 C175.9,476.9 169.9,492.2 167.2,502.1 C164.5,511.9 163.2,518.5 162.4,521.7" stroke="#4c3b30" stroke-opacity="0.24" stroke-width="0.48" fill="none"/>
<path d="M231.3,307.1 C229.5,313.0 224.4,330.4 220.4,342.3 C216.4,354.1 210.9,365.5 207.6,378.3 C204.2,391.1 202.9,405.6 200.2,419.3 C197.5,432.9 194.9,447.0 191.5,460.4 C188.0,473.7 184.0,488.9 179.5,499.3 C175.0,509.6 167.0,518.6 164.5,522.5" stroke="#9a8576" stroke-opacity="0.24" stroke-width="0.50" fill="none"/>
<path d="M216.9,261.2 C215.4,267.2 210.5,285.5 207.5,297.3 C204.6,309.1 201.7,319.8 199.1,332.0 C196.6,344.1 194.4,356.1 192.4,370.3 C190.3,384.4 188.4,401.4 186.7,416.9 C185.1,432.4 185.4,449.0 182.6,463.2 C179.8,477.3 173.2,491.8 169.9,501.7 C166.6,511.6 164.1,519.0 163.0,522.5" stroke="#4c3b30" stroke-opacity="0.28" stroke-width="0.46" fill="none"/>
<path d="M213.0,298.7 C211.3,304.5 205.4,321.7 202.4,333.6 C199.4,345.6 197.5,356.6 195.1,370.5 C192.7,384.5 190.0,402.0 187.9,417.3 C185.9,432.6 185.3,448.3 182.6,462.2 C179.9,476.0 173.7,494.1 171.9,500.5" stroke="#4c3b30" stroke-opacity="0.26" stroke-width="0.51" fill="none"/>
<path d="M250.3,205.7 C247.7,209.6 239.4,219.4 234.7,229.0 C230.1,238.6 226.0,251.7 222.4,263.3 C218.8,275.0 216.3,287.4 213.2,299.1 C210.2,310.8 207.1,321.5 204.2,333.6 C201.2,345.8 198.0,357.8 195.5,371.8 C192.9,385.9 190.9,402.9 188.9,417.9 C186.9,432.9 184.5,454.6 183.7,461.9" stroke="#4c3b30" stroke-opacity="0.22" stroke-width="0.42" fill="none"/>
<path d="M233.3,229.3 C231.5,234.9 226.1,251.3 222.6,262.8 C219.0,274.4 215.0,286.8 211.8,298.6 C208.7,310.5 206.2,321.8 203.6,333.9 C200.9,346.1 198.5,357.4 196.0,371.4 C193.6,385.4 190.2,410.3 189.0,418.0" stroke="#4c3b30" stroke-opacity="0.20" stroke-width="0.53" fill="none"/>
<path d="M240.4,231.6 C238.6,237.5 233.5,255.1 230.0,266.7 C226.4,278.4 222.7,289.9 219.2,301.6 C215.7,313.2 211.9,324.7 208.7,336.7 C205.6,348.6 202.8,359.5 200.1,373.1 C197.4,386.7 194.7,403.7 192.4,418.4 C190.0,433.1 187.1,454.3 186.0,461.4" stroke="#4c3b30" stroke-opacity="0.33" stroke-width="0.41" fill="none"/>
<path d="M203.8,295.1 C202.5,300.8 198.7,316.9 196.1,329.1 C193.6,341.2 190.5,353.5 188.4,368.2 C186.2,382.8 185.0,401.1 183.3,417.0 C181.7,432.8 179.2,455.5 178.4,463.2" stroke="#9a8576" stroke-opacity="0.40" stroke-width="0.44" fill="none"/>
<path d="M215.2,220.2 C212.8,226.0 204.8,243.1 200.9,254.7 C196.9,266.3 194.1,278.1 191.6,289.8 C189.2,301.6 187.7,312.6 186.2,325.1 C184.8,337.6 184.2,349.4 183.0,364.6 C181.7,379.8 179.8,399.8 178.5,416.3 C177.1,432.7 177.1,449.0 174.8,463.5 C172.5,477.9 167.1,493.1 164.8,502.8 C162.5,512.5 161.6,518.6 161.0,521.8" stroke="#4c3b30" stroke-opacity="0.29" stroke-width="0.40" fill="none"/>
<path d="M236.0,308.6 C233.5,314.5 225.9,332.0 221.4,343.8 C216.9,355.5 212.4,366.3 209.1,379.1 C205.8,391.8 204.2,406.6 201.7,420.0 C199.2,433.4 197.8,446.6 194.1,459.7 C190.4,472.8 184.7,488.1 179.7,498.6 C174.7,509.0 166.6,518.5 164.0,522.5" stroke="#4c3b30" stroke-opacity="0.40" stroke-width="0.36" fill="none"/>
<path d="M226.1,264.5 C224.2,270.4 218.3,287.7 214.7,299.5 C211.1,311.3 207.7,323.3 204.6,335.3 C201.5,347.3 198.5,357.7 196.0,371.5 C193.5,385.3 191.4,402.9 189.7,418.0 C187.9,433.1 187.8,448.5 185.2,462.1 C182.7,475.8 176.0,493.7 174.2,500.0" stroke="#4c3b30" stroke-opacity="0.31" stroke-width="0.35" fill="none"/>
<path d="M213.2,259.5 C211.5,265.5 206.0,283.9 203.2,295.8 C200.4,307.7 198.8,318.8 196.6,330.9 C194.4,343.0 191.9,354.1 189.9,368.4 C187.8,382.7 185.0,408.5 184.1,416.5" stroke="#4c3b30" stroke-opacity="0.22" stroke-width="0.50" fill="none"/>
<path d="M243.8,233.8 C241.9,239.6 236.2,257.1 232.6,268.6 C229.0,280.2 225.5,291.6 222.1,303.1 C218.6,314.7 215.2,326.0 212.0,337.9 C208.9,349.8 206.1,361.2 203.2,374.7 C200.3,388.1 196.0,411.2 194.5,418.5" stroke="#9a8576" stroke-opacity="0.29" stroke-width="0.37" fill="none"/>
<path d="M194.4,290.3 C193.2,296.2 189.0,313.8 187.2,326.1 C185.5,338.4 185.2,349.1 183.8,364.1 C182.3,379.2 180.1,399.7 178.5,416.4 C177.0,433.1 176.7,449.9 174.4,464.4 C172.2,478.9 166.5,496.9 164.9,503.4" stroke="#4c3b30" stroke-opacity="0.50" stroke-width="0.48" fill="none"/>
<path d="M250.9,205.3 C248.0,209.2 238.7,219.1 233.7,228.8 C228.7,238.5 224.6,252.0 221.1,263.5 C217.6,275.1 215.5,286.6 212.7,298.3 C209.8,310.1 206.8,322.1 204.0,334.1 C201.2,346.1 198.3,356.6 195.8,370.5 C193.4,384.4 191.8,402.0 189.5,417.3 C187.2,432.7 184.8,448.5 182.1,462.5 C179.3,476.5 176.3,491.3 173.0,501.1 C169.6,511.0 164.0,518.2 162.2,521.6" stroke="#4c3b30" stroke-opacity="0.31" stroke-width="0.45" fill="none"/>
<path d="M227.1,225.5 C225.2,231.2 219.0,248.2 215.4,260.0 C211.8,271.8 208.3,284.5 205.4,296.4 C202.6,308.3 200.5,319.4 198.2,331.4 C196.0,343.4 194.0,354.1 191.8,368.3 C189.6,382.5 186.0,408.6 184.9,416.6" stroke="#4c3b30" stroke-opacity="0.39" stroke-width="0.35" fill="none"/>
<path d="M243.5,201.7 C239.7,205.0 226.9,212.7 220.5,221.8 C214.0,230.8 208.6,244.3 204.7,256.0 C200.7,267.7 199.0,280.3 196.6,292.1 C194.2,303.9 192.1,314.4 190.2,326.8 C188.3,339.1 186.7,351.0 185.0,366.0 C183.3,381.0 181.5,400.6 180.1,416.9 C178.7,433.2 178.9,449.6 176.6,463.8 C174.3,478.0 168.7,492.7 166.4,502.3 C164.1,512.0 163.3,518.6 162.7,521.8" stroke="#4c3b30" stroke-opacity="0.43" stroke-width="0.39" fill="none"/>
<path d="M193.3,291.4 C192.4,297.0 189.9,313.2 188.3,325.4 C186.7,337.6 185.2,349.4 183.8,364.6 C182.3,379.8 181.2,400.1 179.7,416.6 C178.1,433.0 176.5,449.0 174.4,463.3 C172.2,477.7 168.7,492.9 166.8,502.7 C164.9,512.5 163.7,519.0 163.1,522.2" stroke="#4c3b30" stroke-opacity="0.26" stroke-width="0.50" fill="none"/>
<path d="M250.7,237.5 C249.4,243.2 246.5,260.3 243.1,271.8 C239.7,283.4 234.1,294.9 230.2,306.5 C226.3,318.2 223.6,329.7 219.7,341.6 C215.8,353.5 210.4,365.2 206.8,378.1 C203.3,391.0 201.0,405.4 198.4,419.2 C195.7,433.0 194.1,447.5 190.8,460.8 C187.5,474.1 183.0,488.8 178.5,499.0 C174.0,509.2 166.1,518.1 163.7,522.0" stroke="#4c3b30" stroke-opacity="0.33" stroke-width="0.58" fill="none"/>
<path d="M229.3,227.1 C227.2,232.9 220.7,250.1 217.2,261.8 C213.7,273.5 211.3,285.6 208.3,297.3 C205.2,309.1 201.5,320.2 198.9,332.2 C196.3,344.3 194.7,355.3 192.8,369.6 C190.9,383.8 189.5,402.3 187.4,417.8 C185.4,433.3 183.3,448.5 180.5,462.3 C177.7,476.2 173.8,491.0 170.6,500.9 C167.5,510.8 163.1,518.3 161.6,521.7" stroke="#4c3b30" stroke-opacity="0.33" stroke-width="0.33" fill="none"/>
<path d="M215.0,261.4 C213.8,267.2 210.2,284.2 207.5,296.0 C204.9,307.8 201.8,319.9 199.2,332.1 C196.6,344.2 194.1,354.5 191.9,368.7 C189.7,382.9 188.1,401.5 186.1,417.2 C184.1,432.9 182.9,448.6 180.1,462.8 C177.3,476.9 171.1,495.4 169.3,501.9" stroke="#9a8576" stroke-opacity="0.42" stroke-width="0.31" fill="none"/>
<path d="M209.2,298.2 C207.8,304.0 203.6,321.0 201.0,333.0 C198.4,345.1 195.8,356.5 193.6,370.5 C191.3,384.5 189.6,401.9 187.5,417.3 C185.5,432.7 183.9,449.0 181.4,462.9 C178.9,476.8 175.8,491.0 172.5,500.7 C169.2,510.5 163.5,518.1 161.7,521.5" stroke="#4c3b30" stroke-opacity="0.35" stroke-width="0.45" fill="none"/>
<path d="M200.4,292.7 C198.8,298.6 193.4,315.7 191.0,328.1 C188.6,340.4 187.7,352.0 186.0,366.8 C184.3,381.6 182.0,400.9 180.7,417.0 C179.4,433.2 178.6,455.9 178.2,463.7" stroke="#9a8576" stroke-opacity="0.20" stroke-width="0.59" fill="none"/>
<path d="M200.0,293.6 C198.8,299.4 195.0,316.2 192.9,328.4 C190.8,340.7 189.3,352.3 187.4,367.0 C185.5,381.7 183.1,400.6 181.6,416.6 C180.0,432.6 178.6,455.1 178.0,462.8" stroke="#4c3b30" stroke-opacity="0.39" stroke-width="0.39" fill="none"/>
<path d="M248.5,203.6 C245.2,207.5 234.3,217.6 229.0,227.1 C223.8,236.6 220.5,249.1 217.0,260.7 C213.6,272.3 211.1,284.9 208.2,296.7 C205.3,308.6 202.2,319.6 199.6,331.8 C197.0,343.9 194.6,355.4 192.4,369.6 C190.2,383.8 188.3,401.3 186.3,416.9 C184.3,432.5 183.0,449.1 180.4,463.1 C177.9,477.1 172.5,494.5 171.0,500.8" stroke="#4c3b30" stroke-opacity="0.28" stroke-width="0.45" fill="none"/>
<path d="M237.9,231.1 C236.2,236.8 231.4,253.6 227.9,265.1 C224.5,276.7 220.7,288.7 217.3,300.6 C213.9,312.5 210.5,324.4 207.5,336.5 C204.4,348.6 201.2,359.6 198.7,373.1 C196.2,386.7 193.5,410.3 192.5,417.8" stroke="#4c3b30" stroke-opacity="0.24" stroke-width="0.53" fill="none"/>
<path d="M240.6,200.5 C236.6,204.0 222.7,212.2 216.3,221.3 C209.9,230.3 205.7,243.3 202.2,255.0 C198.7,266.6 197.3,279.2 195.1,291.1 C193.0,303.0 190.9,314.0 189.2,326.3 C187.4,338.6 186.1,349.9 184.6,365.0 C183.2,380.1 182.1,400.2 180.4,416.7 C178.7,433.2 176.9,449.7 174.4,464.1 C171.9,478.5 167.1,496.5 165.6,503.0" stroke="#4c3b30" stroke-opacity="0.42" stroke-width="0.58" fill="none"/>
<path d="M226.2,304.6 C224.1,310.4 217.3,327.2 213.6,339.1 C209.8,351.0 206.4,362.7 203.5,376.0 C200.6,389.2 198.8,404.3 196.2,418.4 C193.7,432.5 191.0,447.2 188.0,460.6 C185.0,474.1 179.7,492.6 178.0,499.0" stroke="#4c3b30" stroke-opacity="0.28" stroke-width="0.60" fill="none"/>
<path d="M246.6,235.8 C245.2,241.5 241.5,258.3 238.0,270.0 C234.6,281.6 229.8,293.9 225.9,305.6 C222.0,317.4 218.1,328.6 214.7,340.4 C211.2,352.2 208.0,363.1 205.2,376.3 C202.4,389.5 200.3,405.5 197.9,419.6 C195.4,433.7 191.7,454.0 190.5,460.9" stroke="#4c3b30" stroke-opacity="0.38" stroke-width="0.31" fill="none"/>
<path d="M222.5,223.3 C220.1,228.9 211.9,245.3 208.1,257.0 C204.4,268.6 202.8,281.3 200.0,293.2 C197.2,305.1 193.4,316.2 191.5,328.3 C189.5,340.5 189.9,351.4 188.3,366.2 C186.6,380.9 183.3,400.7 181.4,416.9 C179.5,433.0 179.3,448.9 177.0,463.0 C174.8,477.2 170.3,492.0 167.9,501.9 C165.5,511.7 163.4,518.7 162.5,522.0" stroke="#4c3b30" stroke-opacity="0.47" stroke-width="0.33" fill="none"/>
<path d="M201.9,293.6 C200.4,299.6 195.1,317.3 192.7,329.5 C190.4,341.8 189.1,352.5 187.6,367.0 C186.1,381.5 185.2,400.4 183.8,416.5 C182.4,432.6 179.9,455.6 179.1,463.5" stroke="#4c3b30" stroke-opacity="0.44" stroke-width="0.60" fill="none"/>
<path d="M200.0,293.1 C198.5,299.0 193.4,316.1 191.0,328.3 C188.7,340.5 187.4,351.7 185.9,366.5 C184.5,381.3 183.8,401.1 182.2,417.2 C180.5,433.2 177.1,455.4 176.1,463.0" stroke="#4c3b30" stroke-opacity="0.41" stroke-width="0.52" fill="none"/>
<path d="M246.2,273.7 C244.3,279.4 238.9,296.6 234.7,308.1 C230.5,319.7 225.0,331.0 220.8,342.9 C216.6,354.7 212.9,366.4 209.5,379.2 C206.2,392.0 203.4,406.2 200.5,419.7 C197.7,433.2 195.9,447.0 192.4,460.0 C188.9,473.0 181.7,491.6 179.6,497.9" stroke="#9a8576" stroke-opacity="0.28" stroke-width="0.49" fill="none"/>
<path d="M199.6,254.3 C198.5,260.4 195.3,278.8 193.0,290.7 C190.7,302.6 187.4,313.6 185.8,325.7 C184.2,337.9 184.4,348.6 183.2,363.7 C182.0,378.9 179.9,399.7 178.6,416.4 C177.4,433.1 177.5,449.3 175.5,463.8 C173.4,478.3 168.7,493.7 166.3,503.4 C163.9,513.0 161.8,518.7 160.9,521.8" stroke="#4c3b30" stroke-opacity="0.41" stroke-width="0.55" fill="none"/>
<path d="M198.8,293.3 C197.9,299.1 194.8,315.5 193.0,327.7 C191.2,339.9 189.8,351.8 187.9,366.6 C185.9,381.4 182.9,400.6 181.3,416.8 C179.6,432.9 178.6,455.6 178.0,463.3" stroke="#4c3b30" stroke-opacity="0.36" stroke-width="0.38" fill="none"/>
<path d="M226.6,225.6 C224.1,231.3 215.7,247.8 211.8,259.5 C207.9,271.1 205.9,283.8 203.4,295.6 C200.9,307.4 199.4,318.1 196.9,330.2 C194.5,342.3 190.9,353.6 188.7,368.1 C186.5,382.6 185.3,401.5 183.6,417.3 C182.0,433.2 181.0,449.0 178.7,463.1 C176.4,477.3 172.4,492.3 169.9,502.2 C167.3,512.1 164.5,519.1 163.4,522.4" stroke="#4c3b30" stroke-opacity="0.41" stroke-width="0.43" fill="none"/>
<path d="M258.2,210.8 C257.3,215.2 255.6,226.8 252.9,237.1 C250.3,247.3 246.1,260.7 242.3,272.4 C238.5,284.1 234.4,295.7 230.4,307.4 C226.4,319.1 222.0,330.8 218.4,342.6 C214.8,354.3 212.0,365.2 208.8,378.0 C205.6,390.7 202.0,405.3 199.1,419.1 C196.3,433.0 193.0,454.1 191.8,461.0" stroke="#4c3b30" stroke-opacity="0.27" stroke-width="0.41" fill="none"/>
<path d="M247.0,203.6 C244.2,207.5 234.9,216.9 229.9,226.5 C225.0,236.1 221.3,249.4 217.5,261.2 C213.6,272.9 210.0,285.2 206.9,297.0 C203.9,308.9 202.0,320.1 199.4,332.1 C196.7,344.1 193.3,354.9 190.9,369.0 C188.5,383.1 186.7,401.1 185.2,416.7 C183.6,432.3 184.2,448.3 181.7,462.4 C179.2,476.5 172.0,495.0 170.1,501.5" stroke="#4c3b30" stroke-opacity="0.42" stroke-width="0.31" fill="none"/>
<path d="M256.9,209.2 C255.3,213.7 250.4,225.8 247.4,236.0 C244.5,246.2 242.6,259.0 239.1,270.6 C235.7,282.3 230.7,294.4 226.8,306.0 C222.8,317.6 218.9,328.5 215.3,340.2 C211.7,351.9 208.1,363.1 205.2,376.2 C202.3,389.3 200.5,405.0 198.0,419.1 C195.4,433.2 193.2,447.4 190.0,460.8 C186.8,474.2 180.4,492.9 178.5,499.3" stroke="#9a8576" stroke-opacity="0.39" stroke-width="0.30" fill="none"/>
<path d="M243.2,201.7 C239.5,205.3 227.5,213.7 221.3,223.0 C215.0,232.2 209.7,245.8 205.7,257.3 C201.6,268.8 199.4,280.4 197.2,292.2 C194.9,304.1 194.2,316.0 192.4,328.3 C190.5,340.5 188.0,350.8 186.1,365.6 C184.2,380.3 182.2,400.3 180.7,416.6 C179.2,432.9 177.7,455.7 177.2,463.5" stroke="#4c3b30" stroke-opacity="0.46" stroke-width="0.59" fill="none"/>
<path d="M201.2,294.8 C200.3,300.6 198.0,317.2 195.8,329.2 C193.7,341.2 190.4,352.5 188.3,367.0 C186.2,381.6 184.3,408.4 183.5,416.6" stroke="#4c3b30" stroke-opacity="0.32" stroke-width="0.42" fill="none"/>
<path d="M248.2,205.5 C245.4,209.3 235.9,218.9 231.4,228.3 C227.0,237.8 224.9,250.7 221.5,262.3 C218.1,273.9 214.5,286.3 211.1,298.1 C207.8,309.8 204.3,320.7 201.4,332.8 C198.4,345.0 195.5,356.8 193.4,371.0 C191.3,385.2 189.7,410.3 188.9,418.1" stroke="#4c3b30" stroke-opacity="0.46" stroke-width="0.45" fill="none"/>
<path d="M219.0,301.9 C217.4,307.7 212.6,325.1 209.4,337.1 C206.1,349.0 202.1,360.1 199.3,373.6 C196.6,387.1 195.0,403.4 192.9,418.0 C190.8,432.7 189.5,447.7 186.7,461.3 C183.9,475.0 177.8,493.6 176.0,500.0" stroke="#4c3b30" stroke-opacity="0.22" stroke-width="0.53" fill="none"/>
<path d="M217.4,261.8 C215.8,267.8 210.7,286.0 208.0,297.8 C205.3,309.6 203.4,320.5 201.1,332.5 C198.7,344.4 196.3,355.4 193.9,369.6 C191.5,383.8 188.0,409.8 186.8,417.9" stroke="#4c3b30" stroke-opacity="0.28" stroke-width="0.39" fill="none"/>
<path d="M222.4,262.8 C220.6,268.8 214.7,287.0 211.6,298.9 C208.5,310.8 206.5,322.0 203.8,334.1 C201.1,346.2 198.0,357.5 195.4,371.5 C192.9,385.5 190.8,402.8 188.6,417.9 C186.4,432.9 184.8,448.1 182.2,461.9 C179.5,475.7 174.4,494.1 172.8,500.5" stroke="#9a8576" stroke-opacity="0.33" stroke-width="0.46" fill="none"/>
<path d="M225.3,264.9 C223.7,270.7 218.8,288.0 215.2,299.7 C211.7,311.4 207.0,323.2 204.1,335.2 C201.3,347.2 200.2,358.1 197.9,371.8 C195.7,385.6 193.0,402.6 190.6,417.7 C188.2,432.8 186.7,448.6 183.7,462.4 C180.7,476.3 175.8,490.7 172.5,500.7 C169.2,510.7 165.5,518.8 164.1,522.4" stroke="#4c3b30" stroke-opacity="0.30" stroke-width="0.32" fill="none"/>
<path d="M256.3,209.1 C254.9,213.5 250.5,225.6 247.5,235.6 C244.5,245.6 241.8,257.7 238.4,269.3 C235.0,280.9 230.8,293.2 227.0,305.1 C223.2,316.9 219.1,328.7 215.4,340.5 C211.6,352.4 207.4,363.0 204.5,376.1 C201.6,389.1 200.3,404.8 197.8,419.0 C195.4,433.1 191.2,454.0 189.9,461.0" stroke="#4c3b30" stroke-opacity="0.43" stroke-width="0.53" fill="none"/>
<path d="M241.9,200.9 C238.4,204.4 227.0,212.6 220.8,221.9 C214.7,231.2 208.8,245.1 204.9,256.8 C201.0,268.4 199.9,280.0 197.6,291.8 C195.3,303.6 193.1,315.4 191.0,327.6 C189.0,339.9 187.1,350.6 185.5,365.4 C183.9,380.1 182.9,399.9 181.4,416.4 C179.9,432.8 179.0,449.7 176.7,464.1 C174.4,478.5 169.3,496.4 167.8,502.9" stroke="#4c3b30" stroke-opacity="0.28" stroke-width="0.38" fill="none"/>
<path d="M228.6,226.3 C226.4,231.9 219.2,248.3 215.5,260.0 C211.7,271.8 208.7,284.8 205.9,296.7 C203.2,308.6 201.5,319.7 198.9,331.7 C196.4,343.7 193.2,354.4 190.8,368.7 C188.4,382.9 185.8,409.2 184.8,417.3" stroke="#4c3b30" stroke-opacity="0.37" stroke-width="0.32" fill="none"/>
<path d="M206.0,296.5 C204.8,302.3 201.4,319.2 199.0,331.4 C196.5,343.6 193.5,355.2 191.3,369.6 C189.1,383.9 187.7,402.2 185.7,417.7 C183.8,433.2 182.0,448.8 179.5,462.7 C177.0,476.5 172.2,494.5 170.7,500.9" stroke="#9a8576" stroke-opacity="0.42" stroke-width="0.52" fill="none"/>
<path d="M222.7,223.6 C220.3,229.2 212.0,245.4 208.3,257.0 C204.5,268.7 202.9,281.7 200.2,293.5 C197.6,305.4 194.8,316.1 192.4,328.2 C190.1,340.3 188.1,351.5 186.2,366.1 C184.3,380.8 182.4,400.1 181.0,416.3 C179.7,432.6 180.5,449.3 178.2,463.6 C176.0,477.9 170.2,492.3 167.7,502.1 C165.1,511.9 164.0,519.1 163.2,522.5" stroke="#9a8576" stroke-opacity="0.33" stroke-width="0.53" fill="none"/>
<path d="M231.6,308.0 C229.7,313.7 224.2,330.5 220.5,342.2 C216.8,353.8 213.0,364.9 209.4,377.8 C205.8,390.6 201.8,405.4 199.0,419.2 C196.3,433.1 196.1,447.6 192.7,460.7 C189.4,473.9 184.1,488.0 179.1,498.2 C174.2,508.4 165.7,517.9 163.0,521.8" stroke="#9a8576" stroke-opacity="0.31" stroke-width="0.50" fill="none"/>
<path d="M245.0,202.6 C241.3,206.2 229.0,214.8 223.0,224.2 C217.1,233.6 212.8,247.0 209.4,258.8 C206.0,270.5 205.3,283.0 202.6,294.7 C200.0,306.4 196.0,316.8 193.5,328.9 C191.0,341.1 189.4,352.9 187.8,367.5 C186.2,382.1 185.5,400.5 183.9,416.5 C182.3,432.5 180.8,449.2 178.3,463.5 C175.9,477.8 171.8,492.7 169.2,502.4 C166.6,512.1 163.7,518.5 162.6,521.8" stroke="#9a8576" stroke-opacity="0.48" stroke-width="0.50" fill="none"/>
<path d="M201.7,255.4 C200.4,261.2 196.1,278.8 193.8,290.5 C191.5,302.2 189.8,313.1 188.1,325.5 C186.4,338.0 185.1,350.0 183.6,365.1 C182.2,380.3 181.1,399.7 179.5,416.2 C177.9,432.6 176.4,449.4 173.9,463.8 C171.5,478.3 167.0,493.2 164.9,502.9 C162.8,512.6 161.8,518.9 161.2,522.1" stroke="#4c3b30" stroke-opacity="0.40" stroke-width="0.35" fill="none"/>
<path d="M223.1,223.8 C220.7,229.4 212.5,245.5 208.4,257.1 C204.4,268.8 201.6,282.0 198.8,293.8 C196.0,305.7 193.6,316.3 191.7,328.4 C189.8,340.5 188.8,351.6 187.2,366.3 C185.6,380.9 183.8,400.1 182.2,416.3 C180.6,432.5 180.1,449.1 177.6,463.3 C175.2,477.6 169.2,495.4 167.6,501.8" stroke="#4c3b30" stroke-opacity="0.36" stroke-width="0.37" fill="none"/>
<path d="M241.1,200.6 C237.6,204.2 226.0,212.9 219.8,222.1 C213.6,231.4 208.1,244.7 204.1,256.3 C200.0,267.8 197.6,279.6 195.4,291.5 C193.1,303.4 192.3,315.1 190.5,327.5 C188.7,339.9 186.5,350.8 184.7,365.7 C182.8,380.5 181.0,400.1 179.4,416.5 C177.8,432.8 177.3,449.5 175.1,463.8 C172.8,478.1 167.5,495.8 165.9,502.2" stroke="#9a8576" stroke-opacity="0.30" stroke-width="0.33" fill="none"/>
<path d="M260.1,213.5 C259.1,219.2 255.6,234.9 254.0,247.4 C252.5,259.8 252.8,275.2 250.7,288.0 C248.7,300.7 245.1,310.5 241.7,323.7 C238.3,336.9 234.4,354.5 230.4,366.9 C226.4,379.3 218.6,386.2 217.7,398.0 C216.8,409.8 221.1,424.3 225.1,437.7 C229.2,451.1 237.4,467.2 242.2,478.4 C246.9,489.5 250.4,496.8 253.6,504.9 C256.8,513.0 260.1,523.3 261.4,527.0" stroke="#4c3b30" stroke-opacity="0.34" stroke-width="0.45" fill="none"/>
<path d="M243.0,241.8 C241.2,248.6 235.6,269.5 232.4,282.6 C229.1,295.8 226.7,306.8 223.4,320.6 C220.1,334.4 215.5,352.0 212.4,365.3 C209.2,378.5 204.8,387.0 204.5,399.9 C204.2,412.8 209.6,435.4 210.6,442.5" stroke="#4c3b30" stroke-opacity="0.39" stroke-width="0.58" fill="none"/>
<path d="M239.5,285.2 C238.4,291.5 235.9,309.3 232.8,322.7 C229.7,336.1 224.4,353.0 220.9,365.7 C217.5,378.3 212.3,386.2 211.9,398.6 C211.5,411.0 217.4,433.3 218.5,440.2" stroke="#4c3b30" stroke-opacity="0.23" stroke-width="0.50" fill="none"/>
<path d="M219.6,320.4 C218.1,327.8 213.4,352.0 210.8,365.2 C208.3,378.4 204.6,386.6 204.2,399.5 C203.7,412.3 207.5,435.2 208.2,442.3" stroke="#4c3b30" stroke-opacity="0.44" stroke-width="0.34" fill="none"/>
<path d="M243.9,242.9 C242.6,249.6 239.3,269.8 236.2,283.0 C233.2,296.2 229.0,308.2 225.4,322.1 C221.9,335.9 218.1,353.3 215.1,366.1 C212.1,378.9 207.5,386.5 207.4,399.0 C207.2,411.6 210.0,428.4 214.0,441.5 C217.9,454.6 225.9,467.0 231.0,477.6 C236.2,488.3 240.2,497.3 244.8,505.3 C249.5,513.3 256.6,522.3 259.0,525.7" stroke="#4c3b30" stroke-opacity="0.34" stroke-width="0.54" fill="none"/>
<path d="M242.3,324.2 C240.0,331.2 232.6,353.7 228.6,366.0 C224.6,378.2 218.7,385.7 218.3,397.7 C217.9,409.7 224.8,431.1 226.1,437.8" stroke="#4c3b30" stroke-opacity="0.49" stroke-width="0.32" fill="none"/>
<path d="M241.3,242.0 C239.7,248.6 234.6,268.9 231.2,281.9 C227.9,295.0 225.0,306.4 221.4,320.3 C217.8,334.1 212.4,351.6 209.7,364.9 C207.0,378.2 205.4,387.0 205.1,400.0 C204.7,413.0 204.3,429.9 207.8,442.8 C211.2,455.7 222.8,471.7 225.8,477.5" stroke="#4c3b30" stroke-opacity="0.21" stroke-width="0.46" fill="none"/>
<path d="M245.1,285.8 C243.7,291.9 240.2,309.3 236.7,322.8 C233.2,336.2 228.1,353.6 224.2,366.2 C220.2,378.8 213.6,386.1 213.1,398.3 C212.7,410.4 220.1,432.1 221.5,438.9" stroke="#4c3b30" stroke-opacity="0.31" stroke-width="0.51" fill="none"/>
<path d="M240.1,323.4 C238.2,330.6 232.2,353.9 228.3,366.4 C224.3,378.9 217.1,386.4 216.5,398.3 C215.9,410.3 220.6,425.0 224.7,438.2 C228.8,451.4 236.5,466.5 241.2,477.6 C245.8,488.7 249.7,496.5 252.8,504.7 C255.9,512.9 258.5,523.1 259.7,526.8" stroke="#9a8576" stroke-opacity="0.31" stroke-width="0.58" fill="none"/>
<path d="M255.1,212.5 C253.8,217.9 250.0,232.9 247.3,245.0 C244.6,257.1 241.6,272.2 239.0,285.1 C236.3,298.0 234.7,308.8 231.6,322.2 C228.6,335.6 224.1,353.0 220.6,365.7 C217.2,378.3 211.2,385.6 210.7,398.1 C210.1,410.6 216.2,433.5 217.3,440.5" stroke="#4c3b30" stroke-opacity="0.48" stroke-width="0.52" fill="none"/>
<path d="M251.5,246.2 C250.7,252.9 249.2,273.7 247.0,286.6 C244.7,299.5 241.5,310.3 238.1,323.5 C234.7,336.7 230.1,353.5 226.4,365.9 C222.6,378.2 216.1,385.4 215.4,397.5 C214.7,409.6 218.1,425.3 222.2,438.7 C226.4,452.2 235.5,467.1 240.3,478.2 C245.0,489.3 249.0,500.7 250.7,505.2" stroke="#9a8576" stroke-opacity="0.45" stroke-width="0.37" fill="none"/>
<path d="M260.0,213.8 C259.6,219.7 258.7,236.8 257.5,249.3 C256.3,261.7 254.6,275.9 252.7,288.5 C250.8,301.1 249.5,311.7 246.0,324.8 C242.5,337.9 235.9,355.1 231.8,367.2 C227.8,379.4 222.0,386.1 221.5,397.7 C221.0,409.3 224.7,423.5 228.8,437.0 C232.8,450.5 242.9,471.6 245.8,478.5" stroke="#9a8576" stroke-opacity="0.36" stroke-width="0.34" fill="none"/>
<path d="M249.9,210.2 C248.2,215.2 243.5,228.6 239.6,240.4 C235.7,252.2 230.3,267.7 226.5,281.0 C222.7,294.4 220.4,306.3 216.8,320.3 C213.3,334.4 207.9,351.9 205.3,365.1 C202.7,378.4 201.1,386.7 201.0,399.8 C200.9,413.0 201.1,431.1 204.8,444.2 C208.5,457.2 217.8,467.7 223.4,478.0 C229.0,488.3 235.8,501.4 238.2,506.0" stroke="#4c3b30" stroke-opacity="0.21" stroke-width="0.45" fill="none"/>
<path d="M235.4,322.6 C233.4,329.9 227.2,354.0 223.7,366.7 C220.3,379.5 215.2,386.6 214.6,398.8 C213.9,411.0 216.1,426.8 219.7,440.0 C223.3,453.2 231.4,467.1 236.1,478.0 C240.8,488.9 246.1,500.8 248.1,505.4" stroke="#9a8576" stroke-opacity="0.26" stroke-width="0.42" fill="none"/>
<path d="M247.2,287.4 C245.9,293.4 242.7,310.1 239.4,323.3 C236.1,336.5 230.9,354.2 227.4,366.7 C223.9,379.1 218.7,386.1 218.4,398.1 C218.0,410.2 221.3,425.4 225.2,438.8 C229.0,452.1 238.9,471.7 241.6,478.3" stroke="#4c3b30" stroke-opacity="0.37" stroke-width="0.39" fill="none"/>
<path d="M238.2,323.0 C236.2,330.2 229.5,353.6 225.9,366.1 C222.2,378.6 217.2,386.0 216.4,398.0 C215.6,410.1 217.4,425.2 221.1,438.6 C224.8,452.0 233.6,467.3 238.6,478.5 C243.7,489.7 249.3,501.2 251.4,505.8" stroke="#4c3b30" stroke-opacity="0.40" stroke-width="0.58" fill="none"/>
<path d="M251.4,287.7 C250.2,293.7 247.9,310.9 244.2,324.0 C240.5,337.0 233.2,353.9 229.1,366.1 C225.1,378.4 220.5,385.7 219.9,397.6 C219.3,409.6 221.3,424.6 225.5,437.9 C229.6,451.2 241.5,470.9 244.7,477.5" stroke="#4c3b30" stroke-opacity="0.47" stroke-width="0.45" fill="none"/>
<path d="M246.5,243.5 C244.7,250.2 238.9,270.7 235.6,283.7 C232.3,296.7 230.0,307.8 226.7,321.4 C223.5,335.1 219.0,352.9 216.1,365.8 C213.1,378.8 209.3,386.7 209.0,399.2 C208.6,411.6 213.1,433.7 214.0,440.6" stroke="#4c3b30" stroke-opacity="0.34" stroke-width="0.34" fill="none"/>
<path d="M218.9,320.8 C217.1,328.3 211.1,352.4 208.1,365.5 C205.2,378.5 201.2,386.2 201.1,399.2 C201.0,412.3 204.1,430.6 207.7,443.6 C211.3,456.7 220.0,471.8 222.4,477.5" stroke="#9a8576" stroke-opacity="0.34" stroke-width="0.44" fill="none"/>
<path d="M226.5,280.6 C224.7,287.2 219.3,306.2 216.1,320.2 C212.9,334.3 209.8,351.8 207.4,364.9 C205.1,378.1 202.5,386.2 202.0,399.4 C201.4,412.5 203.7,436.4 204.1,443.8" stroke="#4c3b30" stroke-opacity="0.20" stroke-width="0.52" fill="none"/>
<path d="M256.6,289.4 C255.3,295.2 252.4,311.5 249.0,324.4 C245.6,337.3 240.7,355.0 236.4,367.0 C232.1,379.0 223.8,385.0 223.1,396.6 C222.3,408.2 227.5,423.1 231.9,436.6 C236.2,450.1 245.1,466.2 249.2,477.5 C253.2,488.9 255.0,500.2 256.2,504.8" stroke="#9a8576" stroke-opacity="0.22" stroke-width="0.33" fill="none"/>
<path d="M244.4,243.0 C242.8,249.7 238.0,270.1 235.1,283.3 C232.2,296.4 230.1,308.0 226.8,321.8 C223.5,335.6 218.3,353.2 215.2,366.1 C212.1,379.0 208.8,386.7 208.2,399.3 C207.6,411.9 207.8,428.7 211.5,441.8 C215.2,454.9 227.3,471.9 230.5,477.9" stroke="#4c3b30" stroke-opacity="0.45" stroke-width="0.31" fill="none"/>
<path d="M256.6,212.7 C255.8,218.3 254.0,234.1 252.0,246.4 C250.1,258.6 247.2,273.5 244.7,286.3 C242.2,299.2 240.7,310.0 237.2,323.4 C233.7,336.8 227.7,354.1 223.7,366.6 C219.8,379.1 214.1,386.1 213.7,398.2 C213.2,410.3 216.9,425.7 220.9,439.1 C225.0,452.5 233.3,467.3 238.0,478.4 C242.6,489.5 246.8,501.2 248.5,505.7" stroke="#9a8576" stroke-opacity="0.45" stroke-width="0.39" fill="none"/>
<path d="M247.0,243.3 C245.3,250.1 240.1,270.7 237.0,283.9 C233.9,297.1 231.6,308.7 228.1,322.4 C224.7,336.1 219.5,353.4 216.3,366.2 C213.2,379.1 209.9,387.0 209.4,399.4 C208.9,411.8 212.8,433.8 213.5,440.7" stroke="#4c3b30" stroke-opacity="0.25" stroke-width="0.58" fill="none"/>
<path d="M248.8,287.3 C247.4,293.4 243.8,310.7 240.3,323.8 C236.8,336.9 231.8,353.7 227.8,366.0 C223.7,378.3 216.8,385.4 216.1,397.3 C215.5,409.3 222.5,431.0 223.8,437.8" stroke="#9a8576" stroke-opacity="0.23" stroke-width="0.39" fill="none"/>
<path d="M245.0,285.7 C243.5,291.8 240.0,309.0 236.5,322.4 C233.0,335.7 227.7,353.2 224.1,365.9 C220.5,378.6 215.6,386.4 215.0,398.6 C214.5,410.8 217.4,425.8 221.0,439.0 C224.5,452.2 231.5,466.6 236.4,477.6 C241.2,488.6 247.9,500.4 250.2,505.0" stroke="#9a8576" stroke-opacity="0.34" stroke-width="0.55" fill="none"/>
<path d="M260.7,214.2 C260.3,220.0 259.0,236.4 258.0,248.9 C257.0,261.4 256.2,276.4 254.7,289.1 C253.2,301.9 252.5,312.3 249.0,325.2 C245.6,338.2 238.4,355.0 233.9,366.9 C229.3,378.9 222.3,385.5 221.8,397.0 C221.4,408.6 226.8,422.8 231.0,436.3 C235.1,449.8 242.3,466.7 246.6,478.2 C250.9,489.7 255.1,501.0 256.8,505.5" stroke="#4c3b30" stroke-opacity="0.47" stroke-width="0.53" fill="none"/>
<path d="M228.7,281.3 C227.3,287.8 223.0,306.5 219.8,320.5 C216.6,334.5 212.4,352.1 209.5,365.3 C206.6,378.5 202.8,386.7 202.6,399.6 C202.4,412.5 204.3,429.6 208.1,442.7 C211.8,455.9 222.2,472.5 225.1,478.5" stroke="#4c3b30" stroke-opacity="0.27" stroke-width="0.40" fill="none"/>
<path d="M256.4,289.9 C254.9,295.6 251.4,311.5 247.7,324.2 C244.0,336.9 238.2,354.2 234.1,366.4 C229.9,378.5 223.4,385.6 222.7,397.2 C222.0,408.8 225.8,422.5 230.0,436.0 C234.1,449.4 242.8,466.4 247.3,478.0 C251.8,489.5 254.9,497.2 257.0,505.4 C259.1,513.6 259.5,523.7 259.9,527.3" stroke="#9a8576" stroke-opacity="0.40" stroke-width="0.41" fill="none"/>
<path d="M255.7,248.2 C255.4,255.0 255.4,276.1 253.5,288.8 C251.7,301.5 248.1,311.4 244.7,324.4 C241.2,337.4 236.9,354.6 232.9,366.8 C228.8,379.0 221.1,385.6 220.5,397.4 C219.8,409.1 224.8,423.6 228.9,437.1 C233.0,450.6 240.3,467.0 244.8,478.4 C249.3,489.7 254.0,500.9 255.8,505.4" stroke="#9a8576" stroke-opacity="0.34" stroke-width="0.52" fill="none"/>
<path d="M233.6,322.2 C231.4,329.5 224.4,353.0 220.9,365.7 C217.5,378.4 213.3,386.0 212.9,398.3 C212.5,410.6 214.3,426.1 218.4,439.4 C222.4,452.8 232.2,467.3 237.3,478.3 C242.3,489.2 246.9,500.6 248.9,505.1" stroke="#9a8576" stroke-opacity="0.44" stroke-width="0.38" fill="none"/>
<path d="M237.8,240.1 C235.8,246.8 229.8,267.1 226.3,280.3 C222.8,293.6 219.8,305.8 216.5,319.8 C213.2,333.9 209.1,351.3 206.6,364.6 C204.1,378.0 201.7,386.8 201.3,400.1 C201.0,413.3 201.3,430.9 204.6,443.9 C208.0,456.8 218.6,472.1 221.4,477.7" stroke="#4c3b30" stroke-opacity="0.22" stroke-width="0.37" fill="none"/>
<path d="M252.0,288.8 C250.9,294.6 248.6,310.9 245.2,323.9 C241.9,336.9 236.3,354.2 231.9,366.6 C227.5,378.9 219.8,386.3 218.9,398.0 C218.0,409.7 222.2,423.5 226.4,436.8 C230.5,450.1 239.0,466.3 243.8,477.7 C248.6,489.2 252.2,497.4 254.9,505.6 C257.7,513.8 259.4,523.3 260.3,526.9" stroke="#4c3b30" stroke-opacity="0.35" stroke-width="0.46" fill="none"/>
<path d="M225.9,322.0 C224.3,329.3 219.1,352.9 216.0,365.8 C212.9,378.7 208.1,386.9 207.5,399.6 C206.9,412.3 211.6,434.8 212.4,441.8" stroke="#9a8576" stroke-opacity="0.43" stroke-width="0.59" fill="none"/>
<path d="M219.0,320.4 C217.1,327.9 210.3,352.3 207.5,365.5 C204.8,378.8 202.5,387.0 202.3,399.9 C202.2,412.9 206.1,435.9 206.8,443.1" stroke="#4c3b30" stroke-opacity="0.34" stroke-width="0.44" fill="none"/>
<path d="M252.6,246.5 C251.7,253.2 249.4,274.0 247.1,286.9 C244.8,299.8 242.4,310.5 238.8,323.7 C235.2,336.8 229.2,353.5 225.5,365.9 C221.7,378.2 216.8,385.7 216.3,397.7 C215.9,409.8 219.0,424.9 222.8,438.3 C226.6,451.7 234.3,467.0 239.1,478.1 C243.9,489.3 247.7,497.1 251.3,505.2 C255.0,513.3 259.3,523.2 260.8,526.8" stroke="#4c3b30" stroke-opacity="0.45" stroke-width="0.56" fill="none"/>
<path d="M237.6,283.6 C236.0,289.9 231.4,308.1 228.2,321.7 C225.0,335.3 221.4,352.4 218.2,365.2 C215.1,378.0 209.6,385.8 209.2,398.5 C208.9,411.2 212.3,428.1 216.0,441.3 C219.7,454.5 228.8,471.5 231.4,477.5" stroke="#9a8576" stroke-opacity="0.42" stroke-width="0.56" fill="none"/>
<path d="M259.0,213.1 C257.8,218.6 253.7,233.8 251.4,246.1 C249.2,258.5 247.6,274.3 245.3,287.2 C242.9,300.2 240.8,310.6 237.5,323.8 C234.1,337.0 229.0,353.9 225.3,366.3 C221.5,378.7 215.4,386.0 215.1,398.1 C214.9,410.2 222.4,432.2 223.9,439.0" stroke="#9a8576" stroke-opacity="0.38" stroke-width="0.36" fill="none"/>
<path d="M224.4,321.1 C222.7,328.4 217.1,352.2 214.3,365.1 C211.4,378.1 207.8,386.1 207.3,398.8 C206.9,411.6 207.9,428.3 211.6,441.6 C215.3,454.8 224.1,467.5 229.3,478.3 C234.4,489.0 240.2,501.4 242.4,506.0" stroke="#4c3b30" stroke-opacity="0.26" stroke-width="0.39" fill="none"/>
<path d="M244.4,243.7 C243.1,250.4 239.3,270.6 236.6,283.6 C233.8,296.7 231.5,308.4 227.9,322.0 C224.3,335.7 218.2,352.7 215.0,365.5 C211.8,378.2 208.8,385.9 208.6,398.5 C208.4,411.0 210.3,427.5 213.7,440.8 C217.2,454.1 226.8,471.8 229.4,478.0" stroke="#9a8576" stroke-opacity="0.35" stroke-width="0.46" fill="none"/>
<path d="M237.3,322.9 C235.2,330.1 228.9,353.4 225.2,365.9 C221.4,378.5 215.3,385.8 214.9,398.1 C214.4,410.3 218.4,425.9 222.4,439.2 C226.3,452.5 233.7,466.8 238.5,477.9 C243.3,489.0 247.5,497.8 251.1,505.9 C254.7,513.9 258.7,522.8 260.2,526.2" stroke="#4c3b30" stroke-opacity="0.28" stroke-width="0.31" fill="none"/>
<path d="M216.3,320.4 C214.5,327.8 208.1,351.4 205.4,364.5 C202.8,377.7 200.2,386.3 200.2,399.5 C200.2,412.6 202.2,430.2 205.6,443.3 C209.1,456.5 215.7,468.0 221.0,478.3 C226.3,488.7 234.7,501.0 237.5,505.5" stroke="#9a8576" stroke-opacity="0.32" stroke-width="0.54" fill="none"/>
<path d="M233.4,283.5 C232.2,289.8 229.5,308.1 226.3,321.7 C223.0,335.4 217.1,352.3 213.8,365.3 C210.4,378.2 206.4,386.8 206.3,399.5 C206.1,412.2 209.1,428.4 212.8,441.5 C216.5,454.7 223.2,467.6 228.5,478.3 C233.7,489.1 241.5,501.6 244.1,506.2" stroke="#9a8576" stroke-opacity="0.35" stroke-width="0.54" fill="none"/>
<path d="M235.6,283.3 C234.0,289.6 229.8,307.3 226.0,321.0 C222.3,334.7 216.4,352.2 213.2,365.3 C210.1,378.4 207.2,386.8 206.9,399.4 C206.7,412.1 208.4,427.8 211.9,441.0 C215.5,454.2 225.7,472.3 228.4,478.6" stroke="#4c3b30" stroke-opacity="0.32" stroke-width="0.39" fill="none"/>
<path d="M249.5,210.5 C247.9,215.6 243.6,229.1 239.8,240.9 C236.1,252.7 230.7,267.8 227.0,281.1 C223.3,294.3 221.3,306.4 217.8,320.5 C214.2,334.5 208.6,352.4 205.7,365.6 C202.8,378.7 200.7,386.4 200.6,399.4 C200.5,412.4 201.5,430.5 205.1,443.5 C208.7,456.6 219.3,472.2 222.2,477.9" stroke="#4c3b30" stroke-opacity="0.25" stroke-width="0.40" fill="none"/>
<path d="M233.2,282.6 C231.6,289.1 227.1,307.9 223.7,321.7 C220.4,335.5 216.1,352.4 213.1,365.4 C210.0,378.4 205.6,386.8 205.3,399.6 C205.0,412.5 207.5,429.5 211.1,442.5 C214.7,455.4 221.9,466.8 227.0,477.5 C232.0,488.1 235.9,498.2 241.4,506.2 C246.8,514.3 256.6,522.4 259.6,525.7" stroke="#4c3b30" stroke-opacity="0.35" stroke-width="0.32" fill="none"/>
<path d="M240.9,241.3 C239.0,248.0 233.3,268.7 229.8,281.9 C226.3,295.1 223.6,306.5 220.1,320.5 C216.6,334.5 211.7,352.5 209.0,365.7 C206.3,378.8 203.9,386.5 203.9,399.4 C203.9,412.3 205.2,429.8 208.9,443.0 C212.6,456.2 221.0,468.0 226.1,478.5 C231.2,488.9 237.4,501.2 239.6,505.8" stroke="#9a8576" stroke-opacity="0.36" stroke-width="0.58" fill="none"/>
<path d="M255.0,211.9 C253.4,217.1 248.5,231.5 245.3,243.4 C242.2,255.2 239.3,269.7 236.1,282.8 C232.9,296.0 229.6,308.5 226.1,322.3 C222.5,336.1 217.8,352.6 214.8,365.4 C211.8,378.3 208.6,386.6 208.2,399.3 C207.9,412.0 211.9,434.6 212.6,441.6" stroke="#9a8576" stroke-opacity="0.29" stroke-width="0.40" fill="none"/>
<path d="M243.6,242.9 C241.8,249.6 235.7,270.1 232.7,283.2 C229.7,296.3 228.7,307.8 225.6,321.4 C222.5,335.1 217.0,352.2 214.0,365.2 C211.0,378.1 207.7,386.4 207.4,399.3 C207.1,412.1 211.3,435.1 212.1,442.3" stroke="#4c3b30" stroke-opacity="0.37" stroke-width="0.34" fill="none"/>
<path d="M255.2,211.8 C253.6,217.0 249.1,231.4 246.0,243.4 C242.8,255.4 239.3,270.5 236.3,283.6 C233.3,296.7 231.4,308.2 227.9,321.8 C224.5,335.4 218.7,352.3 215.5,365.1 C212.2,378.0 208.6,386.6 208.5,399.2 C208.4,411.8 213.9,433.8 214.9,440.7" stroke="#4c3b30" stroke-opacity="0.41" stroke-width="0.38" fill="none"/>
<path d="M242.5,241.5 C240.2,248.1 232.7,267.9 229.2,281.1 C225.7,294.3 224.7,307.0 221.4,321.0 C218.0,335.1 212.0,352.1 209.2,365.3 C206.3,378.5 204.4,387.2 204.2,400.1 C204.0,413.1 204.7,430.1 208.1,443.0 C211.6,455.9 219.6,467.2 224.9,477.6 C230.3,488.1 237.7,501.0 240.3,505.7" stroke="#4c3b30" stroke-opacity="0.24" stroke-width="0.48" fill="none"/>
<path d="M257.2,249.1 C256.5,255.7 255.3,276.2 253.2,288.7 C251.2,301.3 248.6,311.4 245.1,324.4 C241.6,337.4 236.1,354.7 232.1,366.8 C228.1,378.9 221.7,385.4 221.0,397.1 C220.4,408.7 227.0,430.2 228.2,436.9" stroke="#4c3b30" stroke-opacity="0.37" stroke-width="0.30" fill="none"/>
<path d="M219.8,320.8 C218.2,328.3 212.6,352.5 210.1,365.6 C207.5,378.6 205.1,386.2 204.7,399.1 C204.3,412.1 204.4,430.1 207.9,443.2 C211.4,456.4 220.3,467.7 225.9,478.1 C231.5,488.5 238.7,501.1 241.3,505.7" stroke="#9a8576" stroke-opacity="0.24" stroke-width="0.57" fill="none"/>
<path d="M250.6,210.5 C248.5,215.4 242.5,228.4 238.4,240.0 C234.2,251.5 229.6,266.3 225.8,279.7 C222.1,293.1 219.4,306.2 216.0,320.5 C212.6,334.8 208.1,352.4 205.3,365.6 C202.6,378.8 199.7,386.6 199.7,399.6 C199.6,412.7 201.1,430.9 204.9,443.9 C208.8,456.8 219.6,471.8 222.5,477.4" stroke="#4c3b30" stroke-opacity="0.29" stroke-width="0.45" fill="none"/>
<path d="M216.5,320.2 C214.7,327.8 208.3,352.5 206.0,365.7 C203.6,378.9 202.6,386.4 202.4,399.3 C202.2,412.3 204.4,436.2 204.8,443.6" stroke="#9a8576" stroke-opacity="0.46" stroke-width="0.53" fill="none"/>
<path d="M245.4,243.6 C244.0,250.4 239.4,271.3 236.7,284.3 C234.1,297.3 232.8,308.0 229.4,321.5 C226.1,335.1 219.9,352.5 216.7,365.4 C213.4,378.3 210.0,386.5 209.9,399.0 C209.9,411.5 212.5,427.5 216.4,440.6 C220.3,453.8 228.6,467.1 233.4,477.9 C238.3,488.7 243.4,500.7 245.4,505.3" stroke="#9a8576" stroke-opacity="0.25" stroke-width="0.41" fill="none"/>
<path d="M252.1,211.4 C250.7,216.5 247.1,230.1 244.0,242.1 C240.8,254.0 236.5,269.8 233.3,283.0 C230.0,296.2 227.6,307.5 224.4,321.3 C221.2,335.0 217.1,352.7 214.1,365.6 C211.0,378.6 206.2,386.3 205.9,399.1 C205.6,411.9 208.5,429.2 212.4,442.3 C216.3,455.5 224.4,467.6 229.4,478.1 C234.3,488.6 237.3,497.3 242.1,505.3 C247.0,513.4 255.8,523.0 258.5,526.5" stroke="#4c3b30" stroke-opacity="0.31" stroke-width="0.51" fill="none"/>
<path d="M242.6,324.5 C240.4,331.6 233.4,355.0 229.4,367.2 C225.4,379.4 219.2,386.1 218.8,397.8 C218.4,409.4 222.8,423.6 227.0,436.9 C231.2,450.3 241.1,471.0 243.9,477.8" stroke="#4c3b30" stroke-opacity="0.50" stroke-width="0.45" fill="none"/>
<path d="M230.0,281.7 C228.6,288.1 224.7,306.4 221.5,320.3 C218.2,334.1 213.5,351.6 210.5,364.9 C207.6,378.2 204.1,387.0 203.8,399.9 C203.6,412.9 205.2,429.5 209.1,442.6 C212.9,455.6 221.5,467.8 226.7,478.4 C231.9,488.9 238.0,501.2 240.3,505.8" stroke="#9a8576" stroke-opacity="0.28" stroke-width="0.53" fill="none"/>
<path d="M250.9,288.1 C249.4,294.1 245.9,311.0 242.3,324.1 C238.7,337.3 233.0,354.5 229.2,366.8 C225.4,379.1 220.2,386.3 219.5,398.2 C218.9,410.0 224.2,431.4 225.2,438.0" stroke="#4c3b30" stroke-opacity="0.28" stroke-width="0.45" fill="none"/>
<path d="M250.4,246.0 C249.0,252.6 244.6,273.0 242.1,285.7 C239.6,298.4 238.7,308.8 235.3,322.3 C231.9,335.7 225.3,353.7 221.7,366.5 C218.1,379.3 213.9,386.7 213.6,398.9 C213.3,411.1 216.0,426.6 219.9,439.9 C223.8,453.1 234.1,472.0 236.9,478.4" stroke="#9a8576" stroke-opacity="0.22" stroke-width="0.35" fill="none"/>
<path d="M237.0,239.9 C235.1,246.7 229.2,267.3 225.4,280.6 C221.6,293.9 217.8,305.9 214.4,319.9 C211.0,333.9 207.6,351.5 205.0,364.8 C202.5,378.1 199.1,386.7 199.0,399.9 C198.9,413.0 200.8,431.0 204.5,444.0 C208.1,456.9 215.7,467.3 221.2,477.6 C226.7,488.0 234.8,501.3 237.5,506.0" stroke="#4c3b30" stroke-opacity="0.34" stroke-width="0.58" fill="none"/>
<path d="M238.6,283.9 C237.2,290.2 233.2,308.1 230.0,321.7 C226.8,335.4 223.0,353.1 219.7,365.9 C216.3,378.7 210.5,386.1 210.0,398.5 C209.4,410.9 215.3,433.2 216.4,440.1" stroke="#4c3b30" stroke-opacity="0.39" stroke-width="0.46" fill="none"/>
<path d="M252.1,210.5 C250.2,215.6 244.7,229.4 241.1,241.1 C237.5,252.9 233.9,267.9 230.5,281.1 C227.2,294.2 224.7,306.1 220.9,320.2 C217.2,334.2 211.1,352.1 208.1,365.3 C205.0,378.6 202.8,386.6 202.6,399.6 C202.4,412.6 203.2,430.2 206.9,443.3 C210.7,456.4 222.2,472.4 225.3,478.2" stroke="#9a8576" stroke-opacity="0.33" stroke-width="0.59" fill="none"/>
<path d="M237.9,323.1 C235.8,330.4 229.3,354.2 225.5,366.8 C221.8,379.3 216.0,386.4 215.5,398.5 C215.1,410.5 218.6,425.7 222.7,439.0 C226.8,452.2 235.4,466.7 240.3,477.8 C245.2,488.8 248.8,497.1 252.2,505.2 C255.5,513.3 259.1,522.7 260.5,526.2" stroke="#4c3b30" stroke-opacity="0.47" stroke-width="0.45" fill="none"/>
<path d="M257.8,212.3 C256.3,217.8 251.3,232.9 248.9,245.2 C246.4,257.4 245.5,272.8 243.1,285.8 C240.8,298.7 238.2,309.4 234.8,322.7 C231.3,336.0 225.8,353.1 222.4,365.7 C219.1,378.3 215.1,385.9 214.7,398.1 C214.4,410.3 219.2,432.2 220.1,439.0" stroke="#4c3b30" stroke-opacity="0.36" stroke-width="0.30" fill="none"/>
<path d="M261.1,214.4 C260.7,220.2 259.3,236.7 258.4,249.1 C257.5,261.6 257.8,276.5 255.9,289.1 C254.0,301.7 250.7,311.8 247.0,324.7 C243.3,337.6 237.9,354.7 233.9,366.7 C230.0,378.7 223.8,385.1 223.2,396.8 C222.7,408.5 226.8,423.3 230.8,436.9 C234.8,450.4 244.5,471.1 247.3,478.0" stroke="#4c3b30" stroke-opacity="0.30" stroke-width="0.32" fill="none"/>
<path d="M243.0,242.7 C241.2,249.3 235.1,269.4 232.1,282.4 C229.0,295.4 227.9,306.8 224.6,320.8 C221.4,334.7 215.7,352.9 212.6,366.0 C209.6,379.1 206.2,386.5 206.1,399.3 C206.0,412.0 211.1,435.1 212.0,442.3" stroke="#9a8576" stroke-opacity="0.40" stroke-width="0.43" fill="none"/>
<path d="M253.1,212.2 C251.6,217.3 246.8,231.2 243.9,243.1 C241.0,254.9 238.6,269.9 235.6,283.0 C232.6,296.2 229.0,308.2 225.9,321.9 C222.7,335.7 219.7,352.6 216.7,365.5 C213.6,378.4 208.2,386.6 207.6,399.2 C206.9,411.8 211.9,434.2 212.8,441.2" stroke="#4c3b30" stroke-opacity="0.35" stroke-width="0.36" fill="none"/>
<path d="M236.3,283.3 C234.5,289.7 229.4,307.9 225.7,321.6 C222.0,335.4 217.2,353.0 214.3,365.9 C211.5,378.8 208.4,386.6 208.4,399.1 C208.4,411.6 210.7,427.6 214.4,440.8 C218.1,454.0 228.0,472.1 230.8,478.4" stroke="#9a8576" stroke-opacity="0.45" stroke-width="0.42" fill="none"/>
<path d="M220.4,321.4 C218.8,328.6 213.6,352.0 210.7,365.1 C207.9,378.1 203.7,387.0 203.2,399.9 C202.7,412.7 204.2,429.2 207.9,442.3 C211.5,455.4 219.6,467.9 225.0,478.4 C230.4,489.0 237.7,501.1 240.3,505.6" stroke="#9a8576" stroke-opacity="0.26" stroke-width="0.52" fill="none"/>
<path d="M253.3,288.3 C251.9,294.3 247.9,311.3 244.4,324.3 C240.9,337.3 236.3,354.1 232.3,366.2 C228.3,378.3 221.1,385.1 220.5,396.9 C219.9,408.7 227.4,430.3 228.8,436.9" stroke="#4c3b30" stroke-opacity="0.21" stroke-width="0.38" fill="none"/>
<path d="M246.6,286.3 C245.3,292.5 241.7,310.1 238.4,323.6 C235.1,337.0 230.6,354.5 226.8,366.9 C223.1,379.4 216.9,386.3 216.1,398.2 C215.4,410.2 218.6,425.1 222.4,438.4 C226.2,451.7 234.2,466.9 238.9,478.1 C243.5,489.2 248.6,500.7 250.5,505.2" stroke="#9a8576" stroke-opacity="0.34" stroke-width="0.52" fill="none"/>
<path d="M252.4,210.8 C250.8,216.2 246.1,231.2 242.8,243.1 C239.4,255.0 235.5,269.2 232.3,282.2 C229.2,295.2 226.8,307.4 223.8,321.2 C220.8,335.1 217.3,352.3 214.3,365.3 C211.2,378.2 205.9,386.0 205.5,398.8 C205.1,411.6 210.7,434.9 211.7,442.2" stroke="#4c3b30" stroke-opacity="0.25" stroke-width="0.54" fill="none"/>
<path d="M248.3,245.5 C247.3,252.2 244.6,272.7 241.9,285.5 C239.1,298.3 235.4,308.6 231.9,322.1 C228.4,335.5 224.4,353.6 220.9,366.3 C217.4,379.0 211.5,386.1 210.9,398.3 C210.2,410.5 212.8,426.3 216.8,439.5 C220.9,452.7 230.1,466.6 235.3,477.6 C240.4,488.7 245.5,500.9 247.5,505.6" stroke="#4c3b30" stroke-opacity="0.43" stroke-width="0.56" fill="none"/>
<path d="M253.0,288.5 C251.8,294.6 248.9,312.0 245.6,325.0 C242.3,337.9 237.4,354.1 233.2,366.2 C229.0,378.2 221.2,385.3 220.4,397.2 C219.6,409.0 224.2,423.7 228.4,437.2 C232.5,450.6 242.6,471.0 245.4,477.8" stroke="#4c3b30" stroke-opacity="0.41" stroke-width="0.44" fill="none"/>
<path d="M262.2,214.9 C261.7,220.7 259.9,237.0 259.0,249.5 C258.0,262.0 258.2,277.3 256.8,289.8 C255.4,302.3 254.0,311.6 250.6,324.5 C247.3,337.5 241.1,355.4 236.7,367.5 C232.3,379.7 225.0,385.8 224.3,397.3 C223.6,408.8 231.3,430.0 232.7,436.6" stroke="#4c3b30" stroke-opacity="0.34" stroke-width="0.58" fill="none"/>
<path d="M250.7,246.6 C249.8,253.2 247.1,273.5 244.9,286.3 C242.8,299.0 241.3,309.5 237.9,322.9 C234.6,336.3 228.6,354.2 224.9,366.7 C221.3,379.3 216.4,386.1 215.9,398.1 C215.4,410.2 217.8,425.7 221.7,439.1 C225.7,452.5 236.6,471.7 239.5,478.3" stroke="#4c3b30" stroke-opacity="0.23" stroke-width="0.35" fill="none"/>
<path d="M257.3,250.4 C257.0,256.9 257.0,277.4 255.5,289.8 C254.1,302.2 252.4,311.7 248.9,324.6 C245.4,337.5 238.9,355.0 234.5,367.2 C230.1,379.4 223.0,386.2 222.7,397.6 C222.3,409.0 227.9,422.2 232.1,435.7 C236.4,449.1 244.1,466.9 248.1,478.5 C252.1,490.0 254.8,500.5 256.1,504.9" stroke="#9a8576" stroke-opacity="0.25" stroke-width="0.36" fill="none"/>
<path d="M242.6,242.1 C240.8,248.7 235.4,268.4 231.9,281.6 C228.4,294.8 225.1,307.3 221.7,321.2 C218.3,335.1 214.4,351.9 211.4,364.9 C208.5,377.9 204.5,386.2 204.0,399.2 C203.5,412.2 204.7,429.8 208.6,443.1 C212.4,456.3 223.9,472.6 227.0,478.5" stroke="#4c3b30" stroke-opacity="0.36" stroke-width="0.35" fill="none"/>
<path d="M348.7,232.3 C351.2,237.4 359.7,251.6 363.6,263.1 C367.5,274.7 369.7,287.3 372.2,301.6 C374.8,315.8 378.5,332.8 379.1,348.7 C379.7,364.6 378.6,384.0 375.8,397.0 C373.0,410.0 368.1,417.6 362.3,426.6 C356.5,435.6 349.7,442.6 340.9,450.8 C332.0,459.0 314.5,471.6 309.2,475.8" stroke="#9a8576" stroke-opacity="0.31" stroke-width="0.57" fill="none"/>
<path d="M319.8,204.8 C324.6,209.0 341.4,220.7 348.8,229.9 C356.3,239.1 360.0,248.5 364.4,260.1 C368.9,271.6 372.8,284.6 375.5,299.3 C378.1,313.9 380.3,331.8 380.4,347.9 C380.4,364.1 376.6,388.0 375.9,396.0" stroke="#4c3b30" stroke-opacity="0.34" stroke-width="0.54" fill="none"/>
<path d="M337.1,260.5 C340.0,265.0 350.6,277.5 354.6,287.6 C358.6,297.7 359.3,308.5 361.1,321.4 C362.9,334.2 366.0,350.5 365.6,364.6 C365.2,378.7 360.0,399.1 358.9,406.0" stroke="#4c3b30" stroke-opacity="0.40" stroke-width="0.42" fill="none"/>
<path d="M304.2,240.8 C309.3,244.9 326.8,256.9 334.9,265.4 C343.1,273.9 348.6,282.0 352.9,291.9 C357.2,301.8 359.1,312.2 360.5,324.8 C362.0,337.4 362.4,353.9 361.6,367.6 C360.9,381.4 359.2,396.1 355.9,407.4 C352.7,418.6 347.2,426.5 342.1,435.2 C336.9,443.8 327.9,455.3 325.0,459.4" stroke="#4c3b30" stroke-opacity="0.25" stroke-width="0.50" fill="none"/>
<path d="M364.3,264.6 C365.5,271.1 369.4,289.1 371.4,303.4 C373.4,317.8 375.9,335.2 376.3,350.9 C376.7,366.6 376.4,385.1 373.8,397.8 C371.2,410.5 366.2,418.3 360.6,427.2 C355.1,436.1 349.0,443.3 340.6,451.4 C332.1,459.5 315.2,471.6 310.1,475.6" stroke="#9a8576" stroke-opacity="0.48" stroke-width="0.36" fill="none"/>
<path d="M284.9,194.4 C290.6,196.3 308.2,199.4 318.9,205.4 C329.7,211.4 341.8,221.2 349.5,230.5 C357.3,239.8 361.5,249.5 365.5,261.1 C369.6,272.7 371.9,285.6 374.1,300.2 C376.2,314.7 378.2,332.3 378.4,348.5 C378.6,364.6 377.6,384.2 375.3,397.0 C373.1,409.8 370.3,416.4 364.7,425.4 C359.1,434.3 345.6,446.7 341.8,451.0" stroke="#9a8576" stroke-opacity="0.23" stroke-width="0.38" fill="none"/>
<path d="M364.3,264.0 C365.5,270.3 369.8,287.6 371.8,301.9 C373.9,316.2 376.2,333.8 376.7,349.9 C377.2,366.0 377.1,385.5 374.8,398.2 C372.6,411.0 369.2,417.4 363.2,426.4 C357.2,435.3 343.0,447.7 339.0,451.9" stroke="#9a8576" stroke-opacity="0.22" stroke-width="0.58" fill="none"/>
<path d="M275.1,210.8 C280.2,215.8 295.4,231.3 305.3,240.3 C315.2,249.2 326.7,255.9 334.6,264.5 C342.4,273.1 348.2,281.7 352.5,291.7 C356.7,301.8 358.2,312.3 359.9,324.8 C361.6,337.4 363.3,353.2 362.7,366.9 C362.2,380.6 360.0,395.5 356.7,407.0 C353.3,418.4 344.9,430.9 342.6,435.7" stroke="#4c3b30" stroke-opacity="0.39" stroke-width="0.55" fill="none"/>
<path d="M275.2,209.2 C280.4,213.9 296.4,228.3 306.4,237.1 C316.4,245.9 327.2,253.4 335.2,262.0 C343.1,270.6 350.0,278.7 354.2,288.8 C358.3,298.9 358.6,309.6 360.2,322.4 C361.8,335.1 364.0,351.5 363.6,365.4 C363.2,379.4 361.0,394.4 357.9,405.9 C354.7,417.3 349.8,425.3 344.8,434.1 C339.8,442.9 333.6,451.7 327.7,458.7 C321.9,465.7 312.7,473.4 309.6,476.4" stroke="#4c3b30" stroke-opacity="0.22" stroke-width="0.58" fill="none"/>
<path d="M285.1,193.7 C290.6,195.5 307.8,198.7 318.5,204.7 C329.2,210.7 341.6,220.4 349.2,229.7 C356.9,239.0 360.3,248.9 364.4,260.6 C368.5,272.3 371.4,285.3 373.8,299.9 C376.2,314.4 378.4,331.7 378.9,347.9 C379.3,364.1 378.7,384.2 376.3,397.1 C373.9,410.1 370.0,416.8 364.4,425.7 C358.9,434.6 351.9,442.0 342.9,450.3 C334.0,458.7 316.0,471.5 310.6,475.7" stroke="#4c3b30" stroke-opacity="0.28" stroke-width="0.58" fill="none"/>
<path d="M281.8,198.5 C287.4,201.1 304.6,207.5 315.1,214.2 C325.5,220.9 336.9,229.5 344.6,238.6 C352.3,247.8 357.3,257.9 361.5,269.1 C365.6,280.2 367.6,291.4 369.6,305.4 C371.7,319.4 373.4,337.4 373.8,353.1 C374.2,368.8 372.3,392.0 371.9,399.7" stroke="#4c3b30" stroke-opacity="0.44" stroke-width="0.33" fill="none"/>
<path d="M319.9,205.0 C324.9,209.1 342.0,220.1 349.4,229.4 C356.9,238.8 360.7,249.6 364.8,261.3 C368.9,272.9 371.8,285.0 374.1,299.5 C376.4,314.1 378.1,332.3 378.6,348.6 C379.1,364.9 379.3,384.3 377.0,397.2 C374.7,410.0 366.9,421.0 364.9,425.7" stroke="#4c3b30" stroke-opacity="0.29" stroke-width="0.47" fill="none"/>
<path d="M365.5,260.2 C366.9,266.6 371.6,284.3 374.1,298.9 C376.5,313.5 379.6,331.4 380.1,347.6 C380.5,363.8 379.0,383.2 376.6,396.2 C374.3,409.1 367.8,420.6 366.0,425.4" stroke="#4c3b30" stroke-opacity="0.46" stroke-width="0.54" fill="none"/>
<path d="M362.2,267.7 C363.8,273.9 370.0,290.8 372.1,304.9 C374.2,319.0 374.7,336.7 374.6,352.4 C374.6,368.2 372.3,391.5 371.9,399.3" stroke="#4c3b30" stroke-opacity="0.26" stroke-width="0.50" fill="none"/>
<path d="M332.9,268.3 C335.8,272.7 346.3,284.6 350.5,294.4 C354.8,304.2 356.8,314.9 358.3,327.3 C359.9,339.6 360.4,355.0 359.8,368.4 C359.2,381.8 358.1,396.6 354.8,407.9 C351.6,419.1 342.7,431.2 340.3,435.8" stroke="#4c3b30" stroke-opacity="0.50" stroke-width="0.57" fill="none"/>
<path d="M362.1,270.6 C363.2,276.8 366.7,293.6 368.8,307.6 C370.9,321.6 374.5,339.2 374.9,354.5 C375.3,369.9 372.0,392.3 371.4,399.8" stroke="#4c3b30" stroke-opacity="0.23" stroke-width="0.58" fill="none"/>
<path d="M355.4,284.1 C356.5,289.9 360.6,305.9 362.2,319.1 C363.9,332.2 365.3,348.8 365.2,363.1 C365.1,377.5 364.6,393.3 361.7,405.0 C358.8,416.7 350.1,428.5 347.8,433.2" stroke="#9a8576" stroke-opacity="0.25" stroke-width="0.33" fill="none"/>
<path d="M319.8,298.6 C323.3,302.2 336.4,312.0 340.9,320.4 C345.3,328.9 345.7,338.4 346.5,349.2 C347.2,359.9 347.0,373.6 345.4,385.1 C343.9,396.6 341.5,408.3 337.3,418.2 C333.1,428.1 324.8,436.0 320.2,444.4 C315.5,452.8 311.3,463.5 309.4,468.7 C307.5,474.0 309.0,474.8 308.9,476.0" stroke="#4c3b30" stroke-opacity="0.25" stroke-width="0.33" fill="none"/>
<path d="M297.0,256.1 C302.2,260.3 319.9,272.8 328.1,281.1 C336.3,289.4 342.1,296.9 346.3,306.1 C350.5,315.2 351.9,324.4 353.4,336.1 C355.0,347.8 356.8,363.7 355.6,376.3 C354.3,389.0 349.9,401.8 345.7,412.3 C341.6,422.8 335.3,430.6 330.8,439.3 C326.3,448.0 320.7,460.2 318.7,464.4" stroke="#4c3b30" stroke-opacity="0.38" stroke-width="0.37" fill="none"/>
<path d="M359.3,277.8 C360.3,283.8 364.2,299.8 365.8,313.3 C367.3,326.7 368.8,343.4 368.7,358.4 C368.5,373.3 367.7,390.9 365.0,403.1 C362.3,415.3 354.5,426.9 352.5,431.7" stroke="#4c3b30" stroke-opacity="0.49" stroke-width="0.45" fill="none"/>
<path d="M351.2,292.5 C352.6,298.0 357.7,313.3 359.6,325.7 C361.6,338.2 363.5,353.7 362.9,367.3 C362.3,380.9 357.3,400.8 356.1,407.5" stroke="#9a8576" stroke-opacity="0.39" stroke-width="0.48" fill="none"/>
<path d="M283.5,194.5 C289.5,196.5 308.2,200.4 319.2,206.7 C330.2,212.9 341.7,222.9 349.4,232.1 C357.0,241.4 360.8,250.8 365.0,262.2 C369.2,273.7 372.2,286.5 374.4,300.9 C376.6,315.3 378.1,332.6 378.4,348.6 C378.7,364.6 378.7,384.1 376.4,396.9 C374.0,409.7 370.5,416.5 364.6,425.5 C358.6,434.6 344.7,446.9 340.7,451.2" stroke="#9a8576" stroke-opacity="0.39" stroke-width="0.54" fill="none"/>
<path d="M343.1,244.9 C345.9,249.9 355.7,263.5 360.0,274.5 C364.3,285.5 366.9,297.3 368.8,310.9 C370.6,324.5 371.5,341.3 371.3,356.3 C371.1,371.3 368.3,393.6 367.7,401.1" stroke="#9a8576" stroke-opacity="0.24" stroke-width="0.55" fill="none"/>
<path d="M285.8,193.3 C291.6,194.9 310.0,197.1 320.6,202.9 C331.1,208.6 341.2,218.5 348.9,227.9 C356.7,237.3 362.9,247.3 367.0,259.1 C371.2,270.9 371.6,283.9 373.9,298.5 C376.2,313.1 380.0,330.7 380.8,347.0 C381.6,363.2 380.9,383.1 378.6,396.0 C376.2,408.9 368.7,419.8 366.8,424.6" stroke="#9a8576" stroke-opacity="0.43" stroke-width="0.53" fill="none"/>
<path d="M332.0,273.4 C335.0,277.7 345.7,289.5 350.0,299.1 C354.2,308.8 356.1,319.0 357.5,331.0 C358.8,343.1 358.9,358.3 357.9,371.4 C356.9,384.5 354.9,398.4 351.5,409.5 C348.1,420.6 342.8,429.3 337.7,438.1 C332.6,446.9 325.5,456.0 320.8,462.3 C316.2,468.5 311.6,473.3 309.8,475.5" stroke="#9a8576" stroke-opacity="0.23" stroke-width="0.38" fill="none"/>
<path d="M345.1,307.1 C346.5,312.2 351.7,326.1 353.2,337.6 C354.7,349.2 355.5,364.0 354.2,376.6 C352.8,389.2 348.8,402.6 345.0,413.2 C341.2,423.8 333.7,435.8 331.4,440.3" stroke="#4c3b30" stroke-opacity="0.36" stroke-width="0.51" fill="none"/>
<path d="M315.7,212.4 C320.6,216.5 337.7,227.8 345.5,237.0 C353.2,246.1 357.8,256.2 362.2,267.5 C366.5,278.7 369.4,290.4 371.6,304.6 C373.8,318.8 375.0,336.8 375.4,352.5 C375.7,368.2 374.0,391.0 373.7,398.7" stroke="#9a8576" stroke-opacity="0.20" stroke-width="0.56" fill="none"/>
<path d="M270.2,222.1 C274.4,228.9 286.1,252.3 295.3,263.2 C304.5,274.2 317.3,279.7 325.5,287.7 C333.6,295.7 339.8,302.4 344.0,311.2 C348.2,320.1 349.4,329.6 350.5,341.0 C351.7,352.5 352.5,367.7 351.2,380.0 C349.8,392.3 343.8,409.0 342.4,414.8" stroke="#4c3b30" stroke-opacity="0.44" stroke-width="0.38" fill="none"/>
<path d="M304.8,241.5 C309.5,245.8 324.8,258.6 332.8,267.2 C340.7,275.8 348.1,283.3 352.6,293.0 C357.1,302.7 358.3,312.8 359.9,325.4 C361.5,338.0 362.9,354.8 362.1,368.5 C361.3,382.2 358.5,396.2 355.0,407.4 C351.5,418.7 346.0,427.1 341.0,435.9 C336.1,444.7 330.5,453.5 325.2,460.1 C319.9,466.8 312.0,473.2 309.3,475.9" stroke="#9a8576" stroke-opacity="0.23" stroke-width="0.52" fill="none"/>
<path d="M297.4,257.9 C302.2,262.1 318.4,274.6 326.6,282.9 C334.7,291.1 341.9,298.4 346.3,307.5 C350.6,316.6 351.0,325.8 352.5,337.4 C354.1,349.0 356.6,364.4 355.4,376.9 C354.1,389.5 349.0,402.1 345.0,412.7 C340.9,423.3 335.6,431.9 331.1,440.4 C326.6,448.9 320.1,460.0 317.9,463.9" stroke="#4c3b30" stroke-opacity="0.29" stroke-width="0.57" fill="none"/>
<path d="M336.7,257.1 C339.9,261.7 351.1,274.8 355.4,285.1 C359.8,295.4 361.1,305.9 362.8,318.9 C364.5,331.8 366.1,348.6 365.7,362.9 C365.2,377.2 363.1,392.7 359.9,404.5 C356.8,416.3 351.9,424.7 346.8,433.6 C341.6,442.5 331.8,454.0 328.8,458.0" stroke="#4c3b30" stroke-opacity="0.25" stroke-width="0.53" fill="none"/>
<path d="M322.4,296.4 C325.4,300.1 336.2,309.9 340.4,318.3 C344.5,326.8 346.1,335.9 347.2,346.9 C348.4,357.9 348.7,372.6 347.2,384.3 C345.7,395.9 342.5,406.8 338.4,416.7 C334.3,426.6 325.4,439.2 322.8,443.7" stroke="#4c3b30" stroke-opacity="0.37" stroke-width="0.37" fill="none"/>
<path d="M359.6,272.6 C361.2,278.7 366.9,295.3 369.1,309.1 C371.4,322.9 373.1,340.1 373.1,355.4 C373.2,370.6 372.3,388.5 369.6,400.8 C366.8,413.1 362.0,420.2 356.4,429.1 C350.9,438.0 339.6,449.9 336.3,454.1" stroke="#9a8576" stroke-opacity="0.43" stroke-width="0.51" fill="none"/>
<path d="M311.9,224.4 C316.8,228.6 333.9,240.6 341.5,249.4 C349.2,258.3 353.8,266.7 357.9,277.4 C361.9,288.1 363.5,300.2 365.8,313.7 C368.0,327.2 371.4,343.5 371.2,358.3 C371.0,373.0 367.5,390.1 364.6,402.2 C361.6,414.2 359.0,421.6 353.6,430.5 C348.2,439.4 339.6,447.9 332.2,455.4 C324.8,463.0 313.0,472.4 309.2,475.8" stroke="#9a8576" stroke-opacity="0.43" stroke-width="0.42" fill="none"/>
<path d="M301.4,249.5 C306.4,253.6 323.7,265.6 331.7,274.1 C339.8,282.5 345.5,290.5 349.7,300.0 C353.9,309.5 355.6,319.0 356.9,331.1 C358.2,343.1 358.4,359.3 357.5,372.4 C356.6,385.5 355.3,398.9 351.7,409.8 C348.2,420.8 341.1,429.4 336.1,438.1 C331.0,446.8 323.9,458.0 321.5,461.9" stroke="#4c3b30" stroke-opacity="0.39" stroke-width="0.40" fill="none"/>
<path d="M305.8,239.6 C310.6,243.8 326.5,256.1 334.4,264.6 C342.4,273.1 349.3,280.5 353.6,290.5 C357.8,300.5 358.6,311.9 360.1,324.6 C361.5,337.2 362.7,352.6 362.2,366.4 C361.6,380.3 360.0,396.3 356.7,407.7 C353.3,419.1 347.1,426.3 342.0,434.9 C336.9,443.5 328.8,455.3 326.2,459.3" stroke="#9a8576" stroke-opacity="0.40" stroke-width="0.45" fill="none"/>
<path d="M324.2,290.0 C327.3,293.8 338.4,304.3 342.5,313.0 C346.7,321.8 347.7,331.3 349.0,342.6 C350.4,353.8 351.7,368.4 350.7,380.6 C349.7,392.7 344.1,409.7 342.8,415.5" stroke="#9a8576" stroke-opacity="0.34" stroke-width="0.54" fill="none"/>
<path d="M281.7,199.7 C287.1,202.7 303.5,210.7 313.8,217.9 C324.0,225.1 335.1,233.9 343.1,242.9 C351.1,252.0 357.4,261.2 361.7,272.3 C366.0,283.3 367.1,295.5 368.9,309.3 C370.7,323.2 372.3,340.3 372.3,355.4 C372.3,370.5 371.7,387.8 368.9,400.1 C366.1,412.4 357.9,424.4 355.7,429.2" stroke="#4c3b30" stroke-opacity="0.32" stroke-width="0.54" fill="none"/>
<path d="M335.8,261.4 C339.0,266.0 350.4,278.6 354.6,288.9 C358.8,299.2 359.4,310.3 361.1,323.1 C362.9,335.9 365.7,352.0 365.0,365.9 C364.4,379.9 360.6,395.2 357.2,406.6 C353.8,418.1 346.9,429.9 344.9,434.6" stroke="#4c3b30" stroke-opacity="0.32" stroke-width="0.47" fill="none"/>
<path d="M352.6,292.5 C353.7,298.0 357.6,312.9 359.1,325.5 C360.6,338.0 362.3,354.3 361.7,368.1 C361.1,381.8 359.0,396.5 355.7,407.9 C352.3,419.2 346.8,427.4 341.7,436.1 C336.6,444.9 327.8,456.1 325.0,460.1" stroke="#4c3b30" stroke-opacity="0.35" stroke-width="0.34" fill="none"/>
<path d="M352.6,291.4 C353.9,297.1 358.6,312.5 360.3,325.1 C362.0,337.7 363.1,353.4 362.6,367.0 C362.2,380.6 358.5,400.3 357.7,406.9" stroke="#4c3b30" stroke-opacity="0.40" stroke-width="0.56" fill="none"/>
<path d="M314.0,217.8 C319.0,222.0 336.4,234.1 344.1,243.1 C351.8,252.1 356.3,260.8 360.4,271.7 C364.6,282.7 367.0,294.6 369.0,308.6 C371.0,322.6 372.3,340.4 372.4,355.7 C372.5,371.0 372.5,388.3 369.7,400.6 C366.9,412.9 361.1,420.6 355.4,429.5 C349.7,438.4 342.9,446.3 335.4,454.0 C328.0,461.8 315.0,472.4 310.9,476.1" stroke="#4c3b30" stroke-opacity="0.38" stroke-width="0.45" fill="none"/>
<path d="M270.8,219.0 C275.2,225.4 287.7,246.8 297.1,257.4 C306.5,268.0 319.0,274.4 327.1,282.6 C335.3,290.8 341.7,297.4 346.0,306.6 C350.3,315.7 351.3,325.6 352.9,337.2 C354.4,348.8 356.7,363.4 355.4,376.0 C354.1,388.6 349.1,402.2 345.1,412.9 C341.0,423.6 333.3,435.5 330.9,440.1" stroke="#4c3b30" stroke-opacity="0.40" stroke-width="0.57" fill="none"/>
<path d="M342.2,315.8 C343.2,320.8 346.6,334.5 347.9,345.6 C349.2,356.7 351.2,370.5 349.8,382.3 C348.4,394.1 341.2,410.7 339.5,416.4" stroke="#4c3b30" stroke-opacity="0.48" stroke-width="0.53" fill="none"/>
<path d="M346.6,238.0 C349.3,242.8 358.8,255.9 362.8,267.1 C366.8,278.4 368.6,291.1 370.5,305.3 C372.5,319.4 374.1,336.6 374.6,352.2 C375.1,367.9 373.6,391.3 373.4,399.1" stroke="#4c3b30" stroke-opacity="0.25" stroke-width="0.45" fill="none"/>
<path d="M294.0,264.1 C299.1,268.2 316.3,280.3 324.8,288.3 C333.3,296.2 340.8,302.9 345.2,311.8 C349.7,320.8 350.5,330.7 351.5,342.1 C352.5,353.4 352.8,368.0 351.2,380.1 C349.6,392.3 343.6,409.0 342.1,414.8" stroke="#4c3b30" stroke-opacity="0.29" stroke-width="0.56" fill="none"/>
<path d="M320.9,298.2 C324.4,302.0 337.3,312.0 341.5,320.6 C345.7,329.1 344.9,338.9 345.9,349.6 C346.8,360.3 348.8,373.4 347.4,384.8 C346.1,396.2 342.1,408.2 337.8,418.2 C333.5,428.1 326.3,436.3 321.7,444.6 C317.0,453.0 311.9,462.9 309.9,468.2 C307.8,473.5 309.5,475.2 309.4,476.6" stroke="#4c3b30" stroke-opacity="0.42" stroke-width="0.36" fill="none"/>
<path d="M341.8,319.9 C342.7,324.7 346.8,337.4 347.5,348.3 C348.3,359.1 347.9,373.3 346.2,384.8 C344.6,396.3 341.8,407.5 337.8,417.4 C333.7,427.2 326.5,435.1 321.9,443.7 C317.4,452.2 312.4,464.5 310.5,468.7" stroke="#9a8576" stroke-opacity="0.49" stroke-width="0.53" fill="none"/>
<path d="M356.8,281.0 C358.1,286.7 362.8,302.0 364.6,315.3 C366.4,328.6 367.6,345.9 367.7,360.7 C367.7,375.4 367.6,391.9 364.8,403.7 C362.0,415.5 353.1,426.9 350.7,431.6" stroke="#4c3b30" stroke-opacity="0.40" stroke-width="0.40" fill="none"/>
<path d="M280.2,202.9 C285.7,206.1 302.8,215.0 313.0,222.4 C323.2,229.8 333.6,238.5 341.4,247.5 C349.3,256.4 355.8,265.3 360.0,276.0 C364.1,286.7 364.2,298.3 366.1,311.8 C367.9,325.3 370.6,342.1 370.9,357.1 C371.2,372.1 370.6,389.7 367.8,401.8 C364.9,414.0 359.5,421.2 353.8,430.0 C348.1,438.8 340.8,446.9 333.5,454.6 C326.3,462.4 314.0,472.8 310.1,476.4" stroke="#4c3b30" stroke-opacity="0.24" stroke-width="0.39" fill="none"/>
<path d="M269.3,222.3 C273.6,229.4 285.8,253.5 294.9,264.6 C304.1,275.7 316.0,280.9 324.2,288.9 C332.5,296.8 340.1,303.6 344.3,312.4 C348.5,321.2 348.3,330.6 349.4,341.9 C350.5,353.1 352.1,367.6 350.8,379.7 C349.6,391.9 346.0,404.4 342.0,414.8 C338.0,425.1 331.5,433.4 327.0,441.9 C322.4,450.4 317.8,459.9 314.8,465.7 C311.7,471.4 309.7,474.7 308.7,476.5" stroke="#4c3b30" stroke-opacity="0.38" stroke-width="0.35" fill="none"/>
<path d="M279.6,203.9 C284.6,207.6 298.9,218.3 309.2,226.3 C319.4,234.2 333.0,242.7 341.2,251.5 C349.4,260.4 354.7,268.8 358.5,279.4 C362.4,290.0 362.8,302.0 364.4,315.4 C366.0,328.7 368.4,344.7 368.3,359.4 C368.2,374.0 366.6,391.4 363.8,403.4 C361.1,415.4 353.9,426.8 351.9,431.5" stroke="#4c3b30" stroke-opacity="0.31" stroke-width="0.51" fill="none"/>
<path d="M278.2,207.4 C283.2,211.5 298.2,223.6 308.0,231.9 C317.9,240.2 329.3,248.8 337.3,257.5 C345.4,266.2 352.1,274.0 356.2,284.2 C360.4,294.4 360.4,305.6 362.3,318.6 C364.2,331.6 367.5,347.8 367.4,362.2 C367.3,376.6 365.1,393.1 361.8,404.9 C358.5,416.7 353.0,424.3 347.6,433.1 C342.1,441.9 332.1,453.6 329.1,457.7" stroke="#4c3b30" stroke-opacity="0.33" stroke-width="0.49" fill="none"/>
<path d="M344.1,311.7 C345.1,316.7 348.7,330.2 350.1,341.6 C351.5,352.9 353.8,367.5 352.7,379.7 C351.5,391.9 347.4,404.6 343.3,414.8 C339.3,425.0 333.2,432.6 328.6,441.0 C324.0,449.4 318.9,459.6 315.6,465.4 C312.3,471.3 309.9,474.3 308.7,476.1" stroke="#4c3b30" stroke-opacity="0.46" stroke-width="0.51" fill="none"/>
<path d="M335.3,260.9 C338.5,265.3 350.2,277.4 354.8,287.4 C359.4,297.4 361.2,308.1 362.8,321.0 C364.4,333.9 364.8,350.7 364.3,364.8 C363.8,379.0 362.8,394.2 359.8,405.8 C356.9,417.3 352.0,425.5 346.5,434.2 C340.9,442.9 329.9,454.1 326.6,458.1" stroke="#9a8576" stroke-opacity="0.33" stroke-width="0.32" fill="none"/>
<path d="M268.5,224.9 C272.6,232.1 283.5,256.8 292.6,268.2 C301.7,279.6 314.5,285.2 323.0,293.3 C331.5,301.4 339.1,308.1 343.5,316.8 C347.9,325.5 348.4,334.8 349.2,345.7 C349.9,356.5 349.7,370.3 348.1,382.0 C346.5,393.6 340.9,410.0 339.5,415.5" stroke="#9a8576" stroke-opacity="0.22" stroke-width="0.46" fill="none"/>
<path d="M341.5,249.9 C344.4,254.5 354.6,267.3 358.7,277.9 C362.8,288.5 364.5,299.9 366.2,313.4 C367.9,326.8 368.8,343.9 368.7,358.7 C368.6,373.5 368.3,390.1 365.7,402.2 C363.0,414.4 355.1,426.6 353.0,431.5" stroke="#4c3b30" stroke-opacity="0.50" stroke-width="0.33" fill="none"/>
<path d="M366.8,259.2 C368.1,265.6 372.0,283.2 374.4,297.9 C376.7,312.6 380.2,331.1 380.9,347.4 C381.6,363.6 381.0,382.6 378.5,395.6 C376.0,408.6 367.9,420.4 365.8,425.4" stroke="#4c3b30" stroke-opacity="0.28" stroke-width="0.31" fill="none"/>
<path d="M266.5,226.2 C270.6,233.7 281.9,259.5 291.3,271.2 C300.6,283.0 314.2,288.8 322.7,296.7 C331.2,304.5 338.0,310.0 342.3,318.3 C346.6,326.6 347.4,335.6 348.3,346.6 C349.2,357.6 349.4,372.8 347.6,384.4 C345.9,396.1 341.8,406.8 337.7,416.7 C333.5,426.5 325.2,439.1 322.7,443.6" stroke="#9a8576" stroke-opacity="0.24" stroke-width="0.32" fill="none"/>
<path d="M290.8,275.4 C295.8,279.5 313.0,292.1 321.1,299.9 C329.2,307.6 335.2,313.5 339.5,321.9 C343.9,330.3 346.1,339.4 347.2,350.2 C348.4,360.9 348.4,375.0 346.5,386.3 C344.6,397.6 337.6,412.7 335.9,418.0" stroke="#9a8576" stroke-opacity="0.32" stroke-width="0.55" fill="none"/>
<path d="M311.9,224.4 C316.6,228.5 332.5,240.3 340.2,249.2 C348.0,258.2 354.1,267.1 358.5,277.9 C363.0,288.6 364.8,300.3 366.9,313.6 C369.0,327.0 371.2,343.2 371.1,358.0 C371.0,372.7 369.7,390.2 366.4,402.3 C363.1,414.4 357.0,421.8 351.3,430.6 C345.7,439.4 339.3,447.5 332.3,455.1 C325.4,462.8 313.4,473.0 309.6,476.5" stroke="#9a8576" stroke-opacity="0.23" stroke-width="0.48" fill="none"/>
<path d="M362.8,266.1 C364.3,272.4 369.7,289.9 371.8,304.1 C373.9,318.3 374.9,335.8 375.2,351.5 C375.4,367.1 373.6,390.2 373.2,398.0" stroke="#4c3b30" stroke-opacity="0.38" stroke-width="0.43" fill="none"/>
<path d="M281.4,199.6 C287.0,202.5 304.8,210.1 315.4,217.0 C325.9,223.9 337.0,232.2 344.6,241.2 C352.1,250.2 356.2,259.9 360.5,270.9 C364.8,281.9 367.9,293.4 370.2,307.4 C372.4,321.4 374.2,339.3 374.1,354.9 C374.1,370.4 372.7,388.3 369.9,400.6 C367.1,413.0 362.7,420.1 357.3,428.9 C351.9,437.7 345.5,445.2 337.6,453.2 C329.6,461.1 314.1,472.7 309.4,476.6" stroke="#9a8576" stroke-opacity="0.34" stroke-width="0.52" fill="none"/>
<path d="M330.0,273.3 C333.1,277.6 344.0,289.2 348.5,298.8 C353.0,308.3 355.2,318.3 357.0,330.4 C358.9,342.6 360.2,358.3 359.4,371.5 C358.7,384.7 356.3,398.7 352.6,409.7 C348.9,420.7 342.6,428.9 337.3,437.7 C332.0,446.4 325.8,456.0 321.0,462.3 C316.1,468.7 310.3,473.5 308.2,475.7" stroke="#9a8576" stroke-opacity="0.29" stroke-width="0.48" fill="none"/>
<path d="M268.7,221.6 C273.2,228.2 286.0,250.5 295.5,261.3 C304.9,272.0 317.1,278.0 325.5,286.2 C334.0,294.4 341.6,301.4 346.1,310.5 C350.6,319.5 351.4,329.1 352.5,340.3 C353.7,351.6 354.6,365.8 353.0,378.1 C351.4,390.4 346.9,403.7 342.9,414.2 C339.0,424.7 331.5,436.8 329.2,441.3" stroke="#9a8576" stroke-opacity="0.30" stroke-width="0.32" fill="none"/>
<path d="M341.3,321.0 C342.3,325.5 346.6,337.8 347.3,348.4 C348.0,359.0 347.2,373.1 345.6,384.7 C344.0,396.2 341.8,408.0 337.7,417.9 C333.7,427.8 325.6,435.9 321.0,444.2 C316.5,452.6 312.3,464.1 310.6,468.1" stroke="#4c3b30" stroke-opacity="0.43" stroke-width="0.58" fill="none"/>
<path d="M320.7,297.9 C323.9,301.6 335.7,311.2 339.9,319.6 C344.1,328.1 344.9,337.8 346.2,348.7 C347.4,359.6 348.7,373.3 347.2,384.8 C345.8,396.3 339.2,412.1 337.6,417.5" stroke="#4c3b30" stroke-opacity="0.32" stroke-width="0.47" fill="none"/>
<path d="M348.2,233.8 C350.9,238.8 360.1,252.1 364.3,263.5 C368.5,274.9 371.1,288.0 373.3,302.4 C375.5,316.7 377.4,333.8 377.7,349.7 C377.9,365.5 375.4,389.6 374.9,397.6" stroke="#9a8576" stroke-opacity="0.29" stroke-width="0.46" fill="none"/>
<path d="M276.8,210.0 C281.7,214.6 296.0,229.0 305.9,237.8 C315.8,246.6 328.5,253.8 336.2,262.5 C344.0,271.2 348.0,279.9 352.3,289.9 C356.5,299.9 360.0,310.0 361.7,322.6 C363.5,335.2 363.3,351.5 362.7,365.5 C362.1,379.4 361.5,394.6 358.1,406.2 C354.8,417.7 345.3,429.9 342.7,434.6" stroke="#4c3b30" stroke-opacity="0.46" stroke-width="0.34" fill="none"/>
<path d="M359.5,275.1 C360.8,281.2 365.2,298.2 367.3,311.9 C369.4,325.6 372.1,342.2 371.8,357.2 C371.6,372.3 369.1,390.1 366.1,402.3 C363.1,414.6 359.3,422.1 353.8,430.9 C348.2,439.6 340.2,447.2 332.9,454.6 C325.5,462.1 313.7,472.1 309.8,475.6" stroke="#4c3b30" stroke-opacity="0.26" stroke-width="0.47" fill="none"/>
<path d="M293.7,263.8 C298.7,268.0 315.1,280.8 323.7,288.9 C332.3,297.1 340.5,304.0 345.1,312.8 C349.8,321.6 350.7,330.5 351.6,341.7 C352.5,352.9 352.2,367.7 350.5,379.9 C348.9,392.0 345.6,404.2 341.6,414.5 C337.6,424.8 331.1,433.2 326.5,441.8 C321.9,450.4 316.1,462.0 314.1,466.1" stroke="#4c3b30" stroke-opacity="0.46" stroke-width="0.53" fill="none"/>
<path d="M342.7,242.9 C345.8,247.8 357.3,261.5 361.5,272.4 C365.7,283.3 366.0,294.8 367.9,308.6 C369.9,322.4 373.1,340.0 373.1,355.2 C373.1,370.5 370.8,387.8 368.1,400.1 C365.3,412.5 358.4,424.5 356.5,429.3" stroke="#4c3b30" stroke-opacity="0.32" stroke-width="0.43" fill="none"/>
<path d="M353.1,293.6 C354.2,299.0 358.5,313.4 360.0,325.8 C361.4,338.2 362.7,354.3 361.8,368.0 C360.9,381.7 358.2,396.9 354.7,408.2 C351.1,419.6 342.8,431.4 340.5,436.1" stroke="#4c3b30" stroke-opacity="0.46" stroke-width="0.51" fill="none"/>
<path d="M349.5,230.9 C352.1,235.9 360.7,249.7 364.9,261.2 C369.0,272.8 372.2,285.6 374.7,300.2 C377.1,314.7 379.5,332.6 379.7,348.7 C379.8,364.8 378.2,383.9 375.7,396.8 C373.1,409.6 366.2,421.0 364.3,425.8" stroke="#4c3b30" stroke-opacity="0.35" stroke-width="0.54" fill="none"/>
<path d="M365.7,259.4 C367.4,265.9 373.6,283.7 376.0,298.4 C378.3,313.1 379.8,331.4 380.0,347.6 C380.3,363.8 379.6,382.6 377.4,395.6 C375.2,408.5 368.6,420.2 366.9,425.1" stroke="#4c3b30" stroke-opacity="0.35" stroke-width="0.36" fill="none"/>
<path d="M303.7,240.5 C308.9,244.7 326.5,257.1 334.6,265.7 C342.7,274.3 348.1,282.1 352.5,292.0 C356.9,301.8 359.5,312.4 361.2,324.9 C362.9,337.3 363.9,353.0 362.9,366.9 C361.9,380.7 356.5,400.9 355.3,407.7" stroke="#9a8576" stroke-opacity="0.45" stroke-width="0.51" fill="none"/>
<path d="M361.3,272.0 C362.5,278.1 366.6,295.2 368.5,308.9 C370.4,322.6 372.5,339.1 372.6,354.4 C372.7,369.7 371.8,388.4 369.0,400.9 C366.3,413.3 361.5,420.3 356.1,429.2 C350.8,438.1 340.3,449.9 337.1,454.0" stroke="#4c3b30" stroke-opacity="0.24" stroke-width="0.52" fill="none"/>
<path d="M304.9,242.2 C309.9,246.2 327.2,257.8 335.0,266.2 C342.8,274.6 347.8,282.8 351.8,292.8 C355.7,302.8 357.0,313.8 358.8,326.2 C360.7,338.7 363.3,353.8 362.7,367.5 C362.1,381.2 358.9,397.0 355.4,408.4 C352.0,419.7 347.5,427.1 342.2,435.7 C336.9,444.3 326.8,456.1 323.8,460.2" stroke="#9a8576" stroke-opacity="0.50" stroke-width="0.30" fill="none"/>
<path d="M331.0,272.4 C334.1,276.5 345.2,287.5 349.5,297.0 C353.7,306.4 354.7,316.9 356.3,329.3 C357.9,341.7 359.7,358.0 359.0,371.4 C358.2,384.8 355.7,398.7 352.0,409.7 C348.3,420.7 341.7,428.7 336.8,437.2 C331.8,445.8 326.9,454.7 322.3,461.1 C317.8,467.6 311.7,473.5 309.6,475.9" stroke="#4c3b30" stroke-opacity="0.41" stroke-width="0.34" fill="none"/>
<path d="M317.1,211.2 C322.3,215.3 340.4,226.9 347.9,236.1 C355.5,245.2 358.2,254.8 362.3,266.0 C366.4,277.3 370.0,289.3 372.6,303.5 C375.1,317.7 377.6,335.5 377.6,351.3 C377.6,367.0 375.5,385.3 372.6,398.0 C369.7,410.7 362.3,422.4 360.2,427.3" stroke="#4c3b30" stroke-opacity="0.26" stroke-width="0.58" fill="none"/>
<path d="M282.8,196.0 C288.7,198.3 307.7,203.7 318.3,210.1 C328.9,216.6 338.9,225.3 346.4,234.4 C353.9,243.5 359.2,253.6 363.4,264.9 C367.5,276.3 369.1,288.2 371.2,302.4 C373.3,316.6 375.5,334.2 376.0,350.1 C376.6,366.0 374.9,389.9 374.6,397.8" stroke="#4c3b30" stroke-opacity="0.31" stroke-width="0.43" fill="none"/>
<path d="M351.5,294.8 C352.6,300.3 356.8,315.3 358.3,327.8 C359.8,340.3 361.4,356.4 360.6,369.9 C359.8,383.4 357.3,397.8 353.7,408.9 C350.1,419.9 344.0,427.6 338.9,436.3 C333.9,444.9 326.0,456.9 323.4,461.0" stroke="#4c3b30" stroke-opacity="0.28" stroke-width="0.55" fill="none"/>
<path d="M343.0,315.6 C343.9,320.5 347.8,334.1 348.7,345.1 C349.6,356.2 349.8,370.2 348.5,382.0 C347.2,393.8 342.1,410.4 340.8,416.1" stroke="#4c3b30" stroke-opacity="0.48" stroke-width="0.44" fill="none"/>
<path d="M274.6,211.1 C279.8,215.9 295.7,231.2 305.5,240.2 C315.3,249.3 325.6,256.5 333.3,265.1 C341.0,273.7 347.4,281.8 351.8,291.8 C356.3,301.7 358.1,312.3 360.0,324.9 C361.9,337.5 364.2,353.8 363.4,367.5 C362.6,381.2 358.7,395.5 355.3,406.8 C351.8,418.2 347.6,426.6 342.7,435.5 C337.8,444.3 328.6,455.8 325.8,459.8" stroke="#9a8576" stroke-opacity="0.24" stroke-width="0.57" fill="none"/>
<path d="M334.0,267.6 C336.8,271.9 346.5,283.5 350.8,293.3 C355.2,303.0 358.3,313.6 359.9,326.1 C361.6,338.7 361.3,355.1 360.6,368.7 C359.9,382.2 359.1,396.2 355.6,407.4 C352.1,418.6 344.9,427.1 339.9,436.0 C334.9,444.8 327.9,456.4 325.6,460.5" stroke="#4c3b30" stroke-opacity="0.47" stroke-width="0.57" fill="none"/>
<path d="M327.7,279.5 C331.1,283.5 343.3,294.3 347.7,303.6 C352.1,313.0 352.8,323.6 354.1,335.5 C355.3,347.5 356.3,362.5 355.4,375.2 C354.5,388.0 349.9,405.9 348.8,412.0" stroke="#9a8576" stroke-opacity="0.36" stroke-width="0.35" fill="none"/>
<path d="M340.1,249.8 C343.1,254.4 354.4,266.7 358.6,277.2 C362.9,287.7 363.3,299.5 365.4,313.0 C367.5,326.5 370.9,343.3 371.1,358.3 C371.3,373.4 369.9,390.9 366.7,403.1 C363.6,415.2 354.6,426.6 352.2,431.3" stroke="#4c3b30" stroke-opacity="0.37" stroke-width="0.45" fill="none"/>
<path d="M298.8,253.5 C303.7,257.7 320.0,270.1 328.3,278.6 C336.7,287.0 344.3,294.9 348.7,304.2 C353.1,313.5 353.4,322.8 354.8,334.5 C356.1,346.2 357.7,361.5 356.7,374.4 C355.7,387.3 352.8,401.0 348.9,411.8 C345.1,422.6 336.1,434.9 333.6,439.5" stroke="#9a8576" stroke-opacity="0.31" stroke-width="0.47" fill="none"/>
<path d="M327.0,282.5 C330.0,286.5 341.0,297.4 345.1,306.7 C349.3,315.9 350.2,326.2 351.8,337.9 C353.4,349.7 356.0,364.8 354.9,377.1 C353.7,389.5 348.8,401.7 344.9,412.2 C340.9,422.8 335.9,431.8 331.2,440.5 C326.5,449.2 320.4,458.8 316.6,464.6 C312.9,470.5 309.9,473.7 308.5,475.5" stroke="#4c3b30" stroke-opacity="0.24" stroke-width="0.44" fill="none"/>
<path d="M360.1,274.5 C361.3,280.6 365.4,297.6 367.3,311.2 C369.1,324.8 371.1,341.3 371.3,356.3 C371.5,371.3 371.2,389.0 368.5,401.2 C365.8,413.4 360.5,420.6 354.9,429.5 C349.4,438.4 342.9,446.9 335.4,454.7 C328.0,462.4 314.5,472.5 310.3,476.1" stroke="#9a8576" stroke-opacity="0.42" stroke-width="0.45" fill="none"/>
<path d="M339.2,322.3 C340.3,326.9 344.8,339.8 345.8,350.4 C346.8,360.9 347.0,374.5 345.2,385.7 C343.5,397.0 339.4,407.9 335.4,417.9 C331.3,427.9 325.3,437.0 321.0,445.5 C316.8,454.0 311.7,465.1 309.8,469.0" stroke="#9a8576" stroke-opacity="0.50" stroke-width="0.32" fill="none"/>
<path d="M319.2,207.3 C324.0,211.5 340.3,223.6 347.9,232.9 C355.4,242.2 360.3,251.7 364.5,263.0 C368.7,274.4 370.6,286.8 373.1,301.2 C375.5,315.5 378.6,333.1 379.0,349.1 C379.4,365.2 378.3,384.6 375.5,397.3 C372.7,410.1 368.1,416.8 362.3,425.8 C356.5,434.8 349.7,443.3 340.9,451.5 C332.2,459.8 315.0,471.5 309.8,475.5" stroke="#4c3b30" stroke-opacity="0.36" stroke-width="0.56" fill="none"/>
<path d="M274.5,210.5 C279.7,215.3 295.2,230.0 305.4,239.0 C315.6,248.0 327.9,256.0 335.6,264.6 C343.4,273.2 347.7,280.7 351.9,290.7 C356.1,300.6 358.9,311.9 360.9,324.5 C362.9,337.1 364.7,352.5 363.9,366.2 C363.2,380.0 359.9,395.5 356.5,406.9 C353.2,418.3 345.8,430.0 343.7,434.7" stroke="#4c3b30" stroke-opacity="0.35" stroke-width="0.49" fill="none"/>
<path d="M278.1,204.7 C283.3,208.4 299.2,219.1 309.7,226.9 C320.3,234.8 333.4,242.9 341.2,251.7 C349.1,260.5 353.0,269.2 356.9,279.8 C360.9,290.4 362.9,301.9 365.1,315.3 C367.2,328.7 370.0,345.5 369.7,360.2 C369.4,374.9 366.5,391.7 363.5,403.7 C360.5,415.6 356.8,423.2 351.5,432.0 C346.2,440.8 338.6,449.1 331.7,456.5 C324.8,463.9 313.8,473.0 310.3,476.3" stroke="#4c3b30" stroke-opacity="0.33" stroke-width="0.48" fill="none"/>
<path d="M300.0,250.8 C305.0,254.9 322.0,267.1 330.0,275.4 C338.0,283.8 343.5,291.3 347.9,300.7 C352.4,310.1 355.3,320.0 356.8,332.0 C358.4,344.0 358.5,359.6 357.4,372.6 C356.2,385.6 351.1,403.9 349.8,410.1" stroke="#9a8576" stroke-opacity="0.24" stroke-width="0.59" fill="none"/>
<path d="M342.7,313.6 C344.0,318.6 349.1,332.3 350.5,343.5 C352.0,354.7 352.7,368.9 351.2,380.8 C349.7,392.7 345.6,404.7 341.5,415.0 C337.4,425.2 331.2,433.5 326.6,442.1 C322.0,450.7 315.8,462.6 313.6,466.7" stroke="#4c3b30" stroke-opacity="0.35" stroke-width="0.36" fill="none"/>
<path d="M364.8,261.8 C366.4,268.3 372.7,286.2 374.7,300.8 C376.8,315.3 377.0,333.1 377.2,349.1 C377.5,365.2 378.2,384.0 376.1,396.9 C373.9,409.8 370.2,417.3 364.3,426.4 C358.3,435.5 349.2,443.2 340.3,451.5 C331.3,459.7 315.5,472.1 310.6,476.2" stroke="#4c3b30" stroke-opacity="0.26" stroke-width="0.31" fill="none"/>
<path d="M347.2,305.9 C348.3,311.0 352.9,324.5 354.1,336.3 C355.2,348.0 355.0,363.5 353.8,376.2 C352.7,389.0 350.9,402.0 347.1,412.6 C343.3,423.3 335.9,431.6 331.1,440.1 C326.2,448.6 320.1,459.7 317.9,463.6" stroke="#9a8576" stroke-opacity="0.34" stroke-width="0.42" fill="none"/>
<path d="M334.5,262.5 C337.6,267.0 349.0,279.4 353.5,289.4 C357.9,299.5 359.5,310.1 361.2,322.7 C362.9,335.4 364.3,351.4 363.6,365.3 C362.9,379.2 358.0,399.4 356.9,406.2" stroke="#4c3b30" stroke-opacity="0.36" stroke-width="0.56" fill="none"/>
<path d="M364.5,260.6 C366.2,267.1 372.3,285.2 374.7,299.9 C377.1,314.5 378.4,332.1 378.7,348.4 C379.1,364.6 379.1,384.4 376.8,397.2 C374.4,410.1 370.4,416.8 364.6,425.7 C358.7,434.6 350.8,442.2 341.8,450.5 C332.8,458.8 315.7,471.4 310.4,475.5" stroke="#4c3b30" stroke-opacity="0.31" stroke-width="0.33" fill="none"/>
<path d="M347.8,235.0 C350.4,240.1 359.6,254.0 363.6,265.2 C367.5,276.5 369.3,288.3 371.6,302.6 C373.8,316.9 376.5,335.0 376.9,350.9 C377.3,366.7 374.5,390.0 374.0,397.8" stroke="#4c3b30" stroke-opacity="0.26" stroke-width="0.40" fill="none"/>
<path d="M344.6,308.2 C345.9,313.4 351.2,327.8 352.6,339.4 C354.0,351.0 354.2,365.5 352.8,377.9 C351.4,390.3 348.0,403.4 344.2,413.9 C340.4,424.5 332.3,436.6 329.9,441.1" stroke="#4c3b30" stroke-opacity="0.47" stroke-width="0.35" fill="none"/>
<path d="M295.7,259.3 C300.7,263.4 317.7,275.8 325.8,284.0 C334.0,292.2 340.1,299.5 344.7,308.6 C349.2,317.6 351.4,327.1 353.1,338.4 C354.7,349.8 355.8,364.4 354.5,376.7 C353.2,389.1 349.3,402.0 345.4,412.6 C341.5,423.2 336.0,431.5 331.0,440.3 C326.0,449.0 319.3,459.1 315.5,465.0 C311.8,471.0 309.6,474.1 308.4,476.0" stroke="#9a8576" stroke-opacity="0.45" stroke-width="0.60" fill="none"/>
<path d="M310.1,229.0 C314.7,233.3 330.3,245.8 337.9,254.7 C345.5,263.6 351.4,272.1 355.7,282.4 C359.9,292.7 361.3,303.6 363.2,316.6 C365.1,329.7 367.3,346.3 367.2,360.8 C367.1,375.3 365.4,392.0 362.5,403.9 C359.6,415.8 354.8,423.4 349.7,432.3 C344.6,441.2 334.7,453.2 331.6,457.4" stroke="#9a8576" stroke-opacity="0.30" stroke-width="0.37" fill="none"/>
<path d="M281.5,199.7 C287.1,202.6 304.2,210.2 314.8,217.2 C325.3,224.2 337.1,232.6 344.9,241.6 C352.7,250.6 357.6,260.3 361.7,271.4 C365.9,282.4 367.6,294.0 369.6,307.9 C371.6,321.7 373.7,339.1 373.8,354.5 C373.9,370.0 373.2,388.1 370.3,400.4 C367.3,412.8 358.5,424.0 356.1,428.7" stroke="#9a8576" stroke-opacity="0.35" stroke-width="0.47" fill="none"/>
<path d="M345.8,307.9 C347.0,312.9 351.7,326.1 353.2,337.6 C354.7,349.1 356.0,364.2 354.8,376.9 C353.6,389.6 350.1,402.9 346.1,413.6 C342.1,424.3 335.8,432.3 331.0,440.9 C326.1,449.5 320.8,459.3 317.2,465.3 C313.5,471.2 310.5,474.5 309.2,476.3" stroke="#9a8576" stroke-opacity="0.35" stroke-width="0.34" fill="none"/>
<path d="M359.2,275.3 C360.5,281.4 365.0,298.5 367.1,312.3 C369.2,326.0 372.1,343.0 372.0,357.9 C371.9,372.7 369.5,389.2 366.5,401.4 C363.5,413.6 359.3,421.9 353.9,430.8 C348.6,439.8 337.6,451.0 334.3,455.0" stroke="#4c3b30" stroke-opacity="0.41" stroke-width="0.51" fill="none"/>
<path d="M275.5,211.1 C280.2,215.8 293.5,230.8 303.5,239.7 C313.6,248.5 327.6,255.9 335.8,264.4 C344.0,272.9 348.7,280.5 352.7,290.6 C356.6,300.7 358.1,312.1 359.6,324.9 C361.1,337.7 361.9,353.5 361.5,367.3 C361.1,381.0 360.6,396.3 357.3,407.7 C354.0,419.1 347.3,427.1 342.0,435.7 C336.6,444.4 330.6,452.9 325.3,459.6 C320.1,466.4 313.0,473.3 310.6,476.1" stroke="#9a8576" stroke-opacity="0.42" stroke-width="0.42" fill="none"/>
<path d="M284.3,195.8 C289.9,198.0 307.3,202.6 318.0,209.0 C328.7,215.3 340.5,224.6 348.3,233.9 C356.1,243.1 360.6,253.1 364.8,264.4 C368.9,275.7 371.3,287.3 373.3,301.5 C375.2,315.7 376.0,333.8 376.4,349.7 C376.7,365.7 377.8,384.5 375.6,397.4 C373.4,410.3 369.2,418.0 363.3,426.9 C357.4,435.9 349.3,442.8 340.2,451.1 C331.1,459.4 314.2,472.3 308.9,476.5" stroke="#4c3b30" stroke-opacity="0.23" stroke-width="0.50" fill="none"/>
<path d="M280.5,202.1 C285.9,205.5 302.2,215.1 312.6,222.6 C322.9,230.1 335.1,238.4 342.6,247.3 C350.2,256.1 353.9,265.0 358.0,275.8 C362.1,286.6 365.2,298.3 367.3,312.0 C369.4,325.7 370.5,342.9 370.5,358.0 C370.4,373.0 369.8,390.1 367.2,402.3 C364.6,414.4 356.9,426.0 354.9,430.8" stroke="#4c3b30" stroke-opacity="0.44" stroke-width="0.53" fill="none"/>
<path d="M329.6,276.4 C332.7,280.6 344.1,292.1 348.6,301.5 C353.1,310.9 355.1,320.8 356.4,332.7 C357.8,344.6 357.8,359.8 356.6,372.9 C355.3,385.9 352.2,400.4 348.8,411.2 C345.4,422.1 338.2,433.5 336.1,438.0" stroke="#4c3b30" stroke-opacity="0.45" stroke-width="0.37" fill="none"/>
<path d="M321.1,299.1 C324.5,302.7 337.1,312.3 341.3,320.8 C345.6,329.2 345.8,339.0 346.8,349.8 C347.8,360.6 349.0,374.3 347.4,385.6 C345.7,396.9 341.3,407.8 336.8,417.7 C332.2,427.6 324.7,436.4 319.9,444.9 C315.2,453.4 310.4,464.7 308.5,468.6" stroke="#9a8576" stroke-opacity="0.44" stroke-width="0.51" fill="none"/>
<path d="M303.1,244.9 C307.9,249.1 324.3,261.5 332.4,270.0 C340.6,278.5 347.4,286.0 351.9,295.7 C356.4,305.5 357.7,316.3 359.2,328.6 C360.7,340.9 361.9,356.0 360.9,369.4 C359.8,382.8 356.5,397.9 353.0,409.0 C349.6,420.2 345.2,427.6 340.2,436.3 C335.3,445.1 326.2,457.2 323.3,461.4" stroke="#4c3b30" stroke-opacity="0.32" stroke-width="0.50" fill="none"/>
<path d="M324.4,287.5 C327.9,291.3 341.5,301.8 345.8,310.6 C350.1,319.3 349.2,328.6 350.0,340.0 C350.9,351.4 352.0,366.6 351.0,378.9 C350.1,391.2 348.0,403.6 344.2,413.9 C340.3,424.3 332.4,432.4 327.8,441.0 C323.1,449.7 318.2,461.4 316.2,465.5" stroke="#4c3b30" stroke-opacity="0.29" stroke-width="0.55" fill="none"/>
<path d="M352.1,292.2 C353.3,297.7 358.0,312.5 359.6,325.0 C361.3,337.5 362.7,353.5 362.2,367.2 C361.8,380.9 360.6,395.7 357.0,407.1 C353.5,418.4 346.0,426.4 340.9,435.2 C335.8,444.1 328.7,456.0 326.2,460.1" stroke="#9a8576" stroke-opacity="0.41" stroke-width="0.40" fill="none"/>
<path d="M320.2,204.5 C324.9,208.7 341.3,220.5 348.7,230.0 C356.1,239.4 360.2,249.5 364.5,261.1 C368.9,272.6 372.4,284.9 374.7,299.3 C376.9,313.7 377.8,331.4 378.1,347.7 C378.5,364.0 379.2,384.1 376.8,397.1 C374.5,410.1 370.0,416.6 364.0,425.6 C358.1,434.6 345.0,446.8 341.2,451.0" stroke="#9a8576" stroke-opacity="0.22" stroke-width="0.55" fill="none"/>
<path d="M297.2,255.7 C302.2,259.7 319.1,271.5 327.3,279.7 C335.5,287.9 341.9,295.5 346.1,304.8 C350.4,314.2 351.6,324.0 353.0,335.8 C354.5,347.6 356.0,363.0 354.9,375.6 C353.8,388.3 347.8,405.7 346.4,411.7" stroke="#9a8576" stroke-opacity="0.26" stroke-width="0.56" fill="none"/>
<path d="M348.2,303.5 C349.2,308.6 352.5,322.2 353.9,334.0 C355.2,345.9 357.5,361.7 356.4,374.7 C355.3,387.6 348.8,405.7 347.3,411.9" stroke="#4c3b30" stroke-opacity="0.26" stroke-width="0.45" fill="none"/>
<path d="M343.1,243.2 C345.9,248.0 355.8,261.2 359.9,272.1 C364.1,283.0 366.0,294.5 368.0,308.5 C370.0,322.4 371.8,340.1 372.0,355.6 C372.2,371.0 371.7,388.8 369.2,401.1 C366.7,413.3 362.6,420.3 356.9,429.1 C351.2,438.0 338.6,450.2 335.0,454.4" stroke="#4c3b30" stroke-opacity="0.37" stroke-width="0.53" fill="none"/>
<path d="M283.6,197.8 C289.1,200.2 306.0,205.6 316.2,212.3 C326.4,219.0 337.2,228.7 345.0,237.9 C352.8,247.1 358.8,256.5 363.1,267.6 C367.3,278.8 368.4,290.8 370.5,304.9 C372.7,319.1 375.6,336.8 376.1,352.4 C376.6,368.0 376.0,386.0 373.4,398.5 C370.8,410.9 366.3,418.1 360.5,427.1 C354.7,436.1 347.4,444.5 338.7,452.6 C330.1,460.7 313.8,472.0 308.8,475.9" stroke="#4c3b30" stroke-opacity="0.38" stroke-width="0.57" fill="none"/>
<path d="M330.2,274.2 C333.2,278.3 344.0,289.5 348.6,298.9 C353.2,308.3 356.1,318.5 357.7,330.7 C359.3,342.9 359.1,358.9 358.1,372.1 C357.1,385.2 355.7,398.6 352.0,409.5 C348.2,420.3 340.6,428.5 335.7,437.3 C330.8,446.0 324.6,457.6 322.4,461.7" stroke="#9a8576" stroke-opacity="0.23" stroke-width="0.50" fill="none"/>
<path d="M354.5,284.6 C356.1,290.4 362.6,306.3 364.4,319.4 C366.2,332.4 365.9,348.5 365.3,362.8 C364.7,377.2 363.6,393.7 360.7,405.5 C357.8,417.2 353.2,424.5 347.9,433.2 C342.5,441.9 335.0,450.5 328.7,457.6 C322.3,464.7 312.8,472.8 309.7,475.9" stroke="#4c3b30" stroke-opacity="0.24" stroke-width="0.33" fill="none"/>
<path d="M344.1,310.2 C345.3,315.4 350.2,329.6 351.4,341.1 C352.7,352.6 353.2,367.2 351.7,379.4 C350.3,391.7 346.4,404.2 342.7,414.5 C339.0,424.7 334.1,432.3 329.5,440.9 C324.8,449.5 318.0,460.3 314.8,466.1 C311.6,471.9 311.1,473.9 310.3,475.5" stroke="#9a8576" stroke-opacity="0.43" stroke-width="0.49" fill="none"/>
<path d="M327.2,283.5 C330.3,287.7 341.9,299.3 346.0,308.5 C350.1,317.7 350.4,327.3 351.9,338.8 C353.3,350.3 355.8,365.1 354.7,377.5 C353.6,389.9 346.8,407.1 345.2,413.0" stroke="#4c3b30" stroke-opacity="0.47" stroke-width="0.57" fill="none"/>
<path d="M347.8,303.6 C348.9,308.9 352.7,323.1 354.2,335.0 C355.7,347.0 358.0,362.5 357.0,375.3 C355.9,388.2 351.6,401.5 347.8,412.2 C344.0,422.9 336.6,434.7 334.4,439.3" stroke="#4c3b30" stroke-opacity="0.36" stroke-width="0.34" fill="none"/>
<path d="M335.4,261.0 C338.3,265.5 348.7,278.0 353.0,288.1 C357.3,298.1 359.1,308.6 361.0,321.5 C363.0,334.4 365.3,351.3 364.7,365.4 C364.1,379.6 360.8,394.9 357.5,406.4 C354.3,417.8 350.1,425.5 345.1,434.2 C340.0,442.8 330.2,454.1 327.2,458.1" stroke="#4c3b30" stroke-opacity="0.30" stroke-width="0.55" fill="none"/>
<path d="M343.8,310.1 C345.0,315.2 349.8,329.3 351.4,340.7 C353.0,352.1 354.7,366.4 353.5,378.5 C352.2,390.6 348.0,402.9 343.9,413.4 C339.9,423.8 331.8,436.6 329.3,441.2" stroke="#4c3b30" stroke-opacity="0.24" stroke-width="0.38" fill="none"/>
<path d="M269.6,221.2 C273.8,227.6 285.7,249.0 295.1,259.6 C304.5,270.3 317.6,277.1 325.8,285.4 C334.0,293.6 339.9,300.0 344.5,309.0 C349.0,318.1 351.4,328.3 353.0,339.7 C354.5,351.1 355.2,365.1 353.8,377.3 C352.5,389.5 346.2,407.1 344.7,413.1" stroke="#9a8576" stroke-opacity="0.25" stroke-width="0.43" fill="none"/>
<path d="M330.0,277.7 C332.8,282.0 342.5,294.1 346.8,303.4 C351.2,312.7 354.2,321.9 355.9,333.6 C357.6,345.3 358.4,360.8 357.3,373.7 C356.1,386.6 353.1,400.1 349.1,410.9 C345.0,421.7 335.6,433.8 332.8,438.4" stroke="#9a8576" stroke-opacity="0.48" stroke-width="0.32" fill="none"/>
<path d="M341.3,316.7 C342.6,321.5 347.7,334.9 348.8,346.0 C349.9,357.0 349.4,371.4 347.7,383.1 C346.0,394.8 342.5,405.9 338.7,416.0 C334.8,426.1 328.8,435.0 324.4,443.6 C320.0,452.3 314.2,463.9 312.2,467.9" stroke="#4c3b30" stroke-opacity="0.43" stroke-width="0.57" fill="none"/>
<path d="M279.8,203.1 C284.9,206.7 299.6,217.0 309.9,224.7 C320.2,232.4 333.5,240.4 341.7,249.3 C350.0,258.1 355.4,267.3 359.4,278.0 C363.5,288.8 364.1,300.4 365.9,313.8 C367.8,327.2 370.6,343.4 370.7,358.2 C370.8,373.0 367.2,395.1 366.5,402.5" stroke="#4c3b30" stroke-opacity="0.33" stroke-width="0.34" fill="none"/>
<path d="M321.6,296.0 C324.9,299.7 337.0,310.1 341.4,318.6 C345.9,327.1 347.2,336.1 348.3,347.0 C349.4,357.8 349.8,371.9 348.0,383.6 C346.3,395.3 339.4,411.5 337.7,417.1" stroke="#4c3b30" stroke-opacity="0.49" stroke-width="0.53" fill="none"/>
<path d="M307.2,231.2 C312.4,235.4 330.4,247.6 338.4,256.4 C346.5,265.2 351.2,273.5 355.5,283.8 C359.8,294.0 362.3,305.0 364.2,318.2 C366.2,331.3 367.6,348.3 367.1,362.7 C366.7,377.1 364.5,392.9 361.3,404.6 C358.1,416.4 350.2,428.5 348.0,433.2" stroke="#4c3b30" stroke-opacity="0.35" stroke-width="0.52" fill="none"/>
<path d="M355.2,284.4 C356.4,290.2 360.6,306.2 362.4,319.2 C364.3,332.3 366.6,348.4 366.3,362.7 C366.0,376.9 363.8,393.0 360.6,404.8 C357.5,416.6 349.4,428.7 347.2,433.5" stroke="#4c3b30" stroke-opacity="0.31" stroke-width="0.56" fill="none"/>
<path d="M313.9,219.5 C318.7,223.7 335.4,235.6 343.0,244.6 C350.6,253.5 355.4,262.2 359.7,273.2 C364.0,284.1 366.9,296.4 368.8,310.1 C370.7,323.9 371.0,340.6 371.1,355.7 C371.2,370.8 369.7,393.3 369.4,400.8" stroke="#9a8576" stroke-opacity="0.33" stroke-width="0.39" fill="none"/>
<path d="M273.1,216.1 C277.4,221.9 289.3,241.1 298.6,251.1 C308.0,261.1 321.0,267.7 329.3,276.1 C337.6,284.5 343.9,291.7 348.3,301.3 C352.7,310.9 354.3,321.6 356.0,333.6 C357.6,345.6 359.2,360.4 358.2,373.2 C357.2,386.0 353.8,399.4 350.0,410.4 C346.2,421.4 340.1,430.3 335.2,438.9 C330.4,447.6 325.4,456.1 321.0,462.4 C316.5,468.6 310.6,474.1 308.5,476.5" stroke="#4c3b30" stroke-opacity="0.29" stroke-width="0.33" fill="none"/>
<path d="M341.5,249.4 C344.3,254.1 354.1,266.9 358.4,277.6 C362.7,288.3 365.0,300.0 367.0,313.5 C369.1,326.9 370.7,343.5 370.5,358.3 C370.3,373.2 366.7,395.3 365.9,402.7" stroke="#4c3b30" stroke-opacity="0.45" stroke-width="0.41" fill="none"/>
<path d="M355.9,282.3 C357.4,288.1 363.1,303.8 364.8,317.0 C366.5,330.2 366.7,347.0 366.2,361.5 C365.7,376.1 364.6,392.7 361.8,404.5 C359.0,416.2 354.6,423.1 349.5,431.9 C344.4,440.6 334.1,452.7 331.0,456.9" stroke="#4c3b30" stroke-opacity="0.35" stroke-width="0.44" fill="none"/>
<path d="M335.2,263.1 C338.2,267.6 348.6,279.9 353.1,290.0 C357.6,300.1 360.3,310.9 362.0,323.5 C363.7,336.1 364.0,351.8 363.2,365.7 C362.5,379.6 358.4,399.9 357.5,406.8" stroke="#4c3b30" stroke-opacity="0.43" stroke-width="0.43" fill="none"/>
<path d="M317.0,211.2 C321.9,215.4 338.9,227.3 346.5,236.5 C354.1,245.7 358.4,255.0 362.6,266.4 C366.8,277.8 369.2,290.4 371.5,304.7 C373.8,319.0 375.9,336.6 376.3,352.2 C376.7,367.8 376.5,385.7 374.0,398.2 C371.5,410.7 363.4,422.4 361.2,427.2" stroke="#4c3b30" stroke-opacity="0.45" stroke-width="0.48" fill="none"/>
<path d="M269.9,218.7 C274.5,224.9 287.8,245.6 297.2,256.0 C306.7,266.4 318.3,272.9 326.7,281.2 C335.0,289.6 342.8,296.8 347.3,306.1 C351.8,315.3 352.2,324.8 353.4,336.6 C354.6,348.3 355.8,363.8 354.6,376.5 C353.4,389.2 350.0,402.1 346.1,412.7 C342.3,423.4 333.8,435.8 331.3,440.4" stroke="#4c3b30" stroke-opacity="0.24" stroke-width="0.54" fill="none"/>
<path d="M268.5,224.9 C272.4,232.1 282.9,256.7 292.0,268.1 C301.1,279.5 314.4,285.2 322.9,293.3 C331.4,301.4 338.5,307.8 342.9,316.5 C347.3,325.1 348.4,334.3 349.4,345.2 C350.4,356.1 350.5,369.9 348.8,381.7 C347.0,393.5 340.6,410.4 339.0,416.1" stroke="#4c3b30" stroke-opacity="0.36" stroke-width="0.57" fill="none"/>
<path d="M319.5,204.1 C324.7,208.2 343.2,219.5 350.7,228.7 C358.2,238.0 360.6,248.1 364.6,259.7 C368.6,271.3 371.9,284.0 374.5,298.5 C377.2,313.1 379.8,330.7 380.5,346.9 C381.1,363.1 378.8,387.8 378.5,396.0" stroke="#9a8576" stroke-opacity="0.31" stroke-width="0.49" fill="none"/>
<path d="M339.9,253.0 C342.6,257.8 351.8,270.8 355.7,281.5 C359.7,292.1 361.6,303.8 363.7,316.9 C365.8,330.1 368.6,346.0 368.4,360.4 C368.3,374.8 363.8,396.1 362.9,403.3" stroke="#4c3b30" stroke-opacity="0.48" stroke-width="0.54" fill="none"/>
<path d="M324.1,292.7 C327.1,296.5 337.6,307.0 341.8,315.7 C346.1,324.3 348.5,333.6 349.7,344.6 C350.9,355.5 350.5,369.5 349.0,381.3 C347.5,393.1 344.7,405.0 340.8,415.3 C336.8,425.6 327.9,438.4 325.3,443.0" stroke="#4c3b30" stroke-opacity="0.45" stroke-width="0.58" fill="none"/>
<path d="M312.2,223.3 C317.1,227.5 333.8,239.5 341.6,248.5 C349.4,257.4 354.5,266.2 358.8,276.9 C363.1,287.6 365.4,299.1 367.4,312.6 C369.3,326.0 370.8,342.6 370.7,357.5 C370.6,372.4 367.3,394.6 366.6,402.0" stroke="#4c3b30" stroke-opacity="0.47" stroke-width="0.58" fill="none"/>
<path d="M294.8,266.8 C299.7,270.9 316.0,283.3 324.3,291.2 C332.5,299.0 340.1,305.2 344.3,313.9 C348.6,322.5 348.7,332.2 349.8,343.3 C350.9,354.5 352.3,368.7 351.0,380.8 C349.7,392.8 346.4,405.5 342.0,415.8 C337.6,426.2 329.5,434.4 324.6,442.8 C319.8,451.1 314.9,462.3 313.0,466.2" stroke="#4c3b30" stroke-opacity="0.25" stroke-width="0.56" fill="none"/>
<path d="M303.6,243.6 C308.4,247.6 324.4,259.4 332.2,267.9 C340.1,276.3 346.4,284.5 350.7,294.2 C355.0,304.0 356.6,314.0 358.2,326.4 C359.8,338.7 360.8,354.7 360.2,368.3 C359.6,381.9 355.6,401.5 354.7,408.2" stroke="#4c3b30" stroke-opacity="0.50" stroke-width="0.54" fill="none"/>
<path d="M347.6,235.9 C350.3,241.0 359.6,255.0 363.8,266.5 C368.0,277.9 370.7,290.4 372.8,304.6 C374.8,318.8 376.4,335.9 376.3,351.6 C376.2,367.2 374.7,385.8 372.2,398.3 C369.8,410.9 367.1,417.8 361.5,426.7 C356.0,435.6 342.8,447.6 339.1,451.8" stroke="#4c3b30" stroke-opacity="0.48" stroke-width="0.35" fill="none"/>
<path d="M344.3,242.8 C347.1,247.7 356.9,260.8 361.2,271.8 C365.4,282.8 367.9,295.0 369.9,308.9 C371.9,322.8 373.3,340.0 373.1,355.3 C372.9,370.6 371.6,388.6 368.7,400.8 C365.8,413.1 361.0,419.7 355.5,428.7 C350.0,437.6 343.3,446.4 335.5,454.3 C327.8,462.2 313.3,472.2 308.9,475.8" stroke="#4c3b30" stroke-opacity="0.31" stroke-width="0.51" fill="none"/></g></g>
</g>
<g clip-path="url(#hc)" filter="url(#b5)" opacity="0.32"><ellipse cx="228" cy="242" rx="24" ry="13" transform="rotate(-55 228 240)" fill="#978b80"/><ellipse cx="316" cy="230" rx="26" ry="13" transform="rotate(32 316 230)" fill="#978b80"/></g>
<path d="M237,214 C237,202 250,197 264,199 C276,193 294,196 295,210 C296,226 282,234 266,233 C250,233 237,226 237,214Z" fill="#4a3b2f" opacity="0.9" filter="url(#b4)"/>
<g fill="none" stroke="#b39580" stroke-width="0.65" stroke-linecap="round" stroke-linejoin="round">
<path d="M309.0,296.0 C308.9,302.5 308.7,323.0 308.4,335.0 C308.1,347.0 308.4,359.3 307.3,368.0 C306.2,376.7 303.4,380.2 301.8,387.0 C300.2,393.8 298.6,405.3 298.0,409.0"/>
<path d="M248.4,326.0 C253.3,327.5 265.6,333.5 277.9,335.2 C290.2,336.9 311.6,337.2 322.0,336.0 C332.4,334.8 336.8,329.7 340.5,328.0 C344.2,326.3 343.4,326.3 344.0,326.0"/>
<path d="M336.0,306.0 C336.8,309.7 339.6,320.1 340.5,328.0 C341.4,335.9 341.6,347.4 341.6,353.6 C341.6,359.8 341.9,358.9 340.5,365.0 C339.1,371.1 335.1,383.2 333.0,390.5 C330.9,397.8 330.4,403.8 327.6,409.0 C324.9,414.2 321.4,418.1 316.5,421.8 C311.6,425.5 301.1,429.5 298.0,431.0"/>
<path d="M239.2,397.8 C242.6,400.6 251.8,409.5 259.5,414.4 C267.2,419.3 278.8,424.5 285.2,427.3 C291.6,430.1 295.9,430.4 298.0,431.0"/>
<path d="M289.0,431.0 C288.4,434.7 286.1,445.0 285.2,453.0 C284.3,461.0 283.7,474.5 283.4,478.8"/>
<path d="M258.0,292.0 C256.7,296.3 252.3,310.5 250.0,318.0 C247.7,325.5 246.3,329.2 244.0,337.0 C241.7,344.8 237.3,360.3 236.0,365.0"/>
</g>
<g fill="none" stroke="#4e4036" stroke-width="1.1" opacity="0.55" filter="url(#bw)">
<path d="M179,413 C174,418 168,424 160,428"/>
<path d="M179,416 C174,421 168,426 161,431"/>
<path d="M180,436 C173,443 164,450 152,454"/>
<path d="M180,439 C173,446 165,452 154,457"/>
<path d="M180,442 C174,448 167,454 158,459"/>
</g>
<g fill="none" stroke="#6e6156" stroke-width="0.5" opacity="0.55">
<path d="M266,242 C278,258 292,274 318,300"/>
<path d="M267,243 C282,262 300,280 325,303"/>
<path d="M265,241 C276,262 288,279 312,298"/>
<path d="M268,244 C285,266 305,286 332,308"/>
<path d="M266,243 C274,260 284,276 305,294"/>
</g>
</svg>

<div class="abs" id="tools"></div>

<div class="abs menu" style="left:13px">文件(F)</div>
<div class="abs menu" style="left:68px">编辑(E)</div>
<div class="abs menu" style="left:125px">图像(I)</div>
<div class="abs menu" style="left:178px">图层(L)</div>
<div class="abs menu" style="left:233px">选择(S)</div>
<div class="abs menu" style="left:290px">滤镜(T)</div>
<div class="abs menu" style="left:346px">分析(A)</div>
<div class="abs menu" style="left:403px">3D(D)</div>
<div class="abs menu" style="left:451px">视图(V)</div>
<div class="abs menu" style="left:509px">窗口(W)</div>
<div class="abs menu" style="left:571px">帮助(H)</div>
<svg class="abs" style="left:0;top:0" width="400" height="27" viewBox="0 0 400 27">
<defs>
<linearGradient id="psg" x1="0" y1="0" x2="0" y2="1"><stop offset="0" stop-color="#5cb6f2"/><stop offset="0.5" stop-color="#2a92e4"/><stop offset="1" stop-color="#0a64c4"/></linearGradient>
<radialGradient id="psh" cx="0.5" cy="0" r="0.7"><stop offset="0" stop-color="#9fd6fa" stop-opacity="0.8"/><stop offset="1" stop-color="#9fd6fa" stop-opacity="0"/></radialGradient>
<linearGradient id="brg" x1="0" y1="0" x2="0" y2="1"><stop offset="0" stop-color="#f4f4f4"/><stop offset="1" stop-color="#b8b8b8"/></linearGradient>
<linearGradient id="zbg" x1="0" y1="0" x2="0" y2="1"><stop offset="0" stop-color="#d2d2d2"/><stop offset="1" stop-color="#b9b9b9"/></linearGradient>
<linearGradient id="darkg" x1="0" y1="0" x2="0" y2="1"><stop offset="0" stop-color="#777"/><stop offset="1" stop-color="#3e3e3e"/></linearGradient>
</defs>
<!-- PS logo -->
<rect x="11.5" y="1" width="21" height="19.5" fill="#000" opacity="0.18"/>
<rect x="10.5" y="0" width="21" height="19" fill="url(#psg)"/>
<rect x="10.5" y="0" width="21" height="10" fill="url(#psh)"/>
<text x="14.6" y="13.3" font-family="Liberation Sans" font-size="12" fill="#0b2038" stroke="#0b2038" stroke-width="0.45" textLength="12.6" lengthAdjust="spacingAndGlyphs">Ps</text>
<!-- Br logo -->
<rect x="47.5" y="3.5" width="15" height="13.5" fill="url(#brg)" stroke="#5a5a5a" stroke-width="1"/>
<text x="50.4" y="13.3" font-family="Liberation Sans" font-size="8.6" fill="#111" stroke="#111" stroke-width="0.35" textLength="9.4" lengthAdjust="spacingAndGlyphs">Br</text>
<!-- film strip -->
<g>
<rect x="81.5" y="2.5" width="16" height="14" fill="#eaeaea" stroke="#1a1a1a" stroke-width="1"/>
<rect x="81" y="2" width="17" height="3.2" fill="#1a1a1a"/>
<rect x="81" y="2" width="3.2" height="15" fill="#1a1a1a"/>
<g fill="#e8e8e8">
<rect x="85" y="3" width="1.2" height="1.2"/><rect x="87.5" y="3" width="1.2" height="1.2"/><rect x="90" y="3" width="1.2" height="1.2"/><rect x="92.5" y="3" width="1.2" height="1.2"/><rect x="95" y="3" width="1.2" height="1.2"/>
<rect x="82" y="6" width="1.2" height="1.2"/><rect x="82" y="8.5" width="1.2" height="1.2"/><rect x="82" y="11" width="1.2" height="1.2"/><rect x="82" y="13.5" width="1.2" height="1.2"/>
</g>
</g>
<path d="M104.5,8.5 L111,8.5 L107.75,13 Z" fill="#1e1e1e"/>
<text x="135" y="14.5" font-family="Liberation Sans" font-size="11" fill="#4a4a4a">66.7</text>
<path d="M165,8.5 L171.5,8.5 L168.25,13 Z" fill="#1e1e1e"/>
<rect x="184" y="1" width="1" height="19" fill="#a2a2a2"/><rect x="185" y="1" width="1" height="19" fill="#eeeeee"/>
<!-- hand -->
<g stroke="#444" stroke-linecap="round" fill="none">
<path d="M203.2,10 L202.5,4.6" stroke-width="2.3"/>
<path d="M205.9,9.5 L205.8,3.4" stroke-width="2.3"/>
<path d="M208.6,9.5 L209.1,4" stroke-width="2.3"/>
<path d="M210.8,10.5 L212.1,6.2" stroke-width="2.2"/>
<path d="M203.5,13 L199.3,9.8" stroke-width="2.3"/>
</g>
<path d="M201.8,9 H212 L211,14 C210.5,16 209.5,17 208.5,17 H204 C203,17 202,15.5 201.5,13.5 Z" fill="#444"/>
<!-- zoom button -->
<rect x="221.3" y="0.5" width="26" height="20" rx="2.5" fill="url(#zbg)" stroke="#6f6f6f" stroke-width="1"/>
<circle cx="231.2" cy="8.4" r="4.4" fill="none" stroke="#1a1a1a" stroke-width="1.3"/>
<path d="M234.5,11.6 L240,16.5" stroke="#111" stroke-width="2" stroke-linecap="round"/>
<!-- rotate view -->
<g stroke="#444" stroke-linecap="round" fill="none">
<path d="M257.8,11.5 L257.3,7.2" stroke-width="2.1"/>
<path d="M260.2,11 L260.1,5.8" stroke-width="2.1"/>
<path d="M262.6,11 L263,6.6" stroke-width="2.1"/>
<path d="M264.6,12 L265.6,8.6" stroke-width="2"/>
<path d="M258,14.2 L254.6,11.6" stroke-width="2.1"/>
</g>
<path d="M256.6,10.6 H265.8 L265,15 C264.5,16.5 263.8,17.2 262.8,17.2 H258.8 C257.8,17.2 257,16 256.5,14.5 Z" fill="#444"/>
<path d="M266.5,8.5 L270.3,12.3 L265.8,16.8" fill="none" stroke="#333" stroke-width="1"/>
<path d="M256.5,6 C258.5,2.8 262.5,1.8 266.5,3.2" fill="none" stroke="#666" stroke-width="1"/>
<path d="M265.8,0.6 L270.5,3.6 L265.3,5.3 Z" fill="#333"/>
<rect x="282" y="1" width="1" height="19" fill="#a2a2a2"/><rect x="283" y="1" width="1" height="19" fill="#eeeeee"/>
<!-- arrange docs -->
<rect x="296" y="3" width="16.5" height="13.5" fill="#f4f4f4" stroke="#222" stroke-width="1"/>
<rect x="297.5" y="4.5" width="6.5" height="10.5" fill="url(#darkg)"/>
<rect x="305.5" y="4.5" width="5.5" height="4.5" fill="url(#darkg)"/>
<rect x="305.5" y="10.5" width="5.5" height="4.5" fill="url(#darkg)"/>
<path d="M318.8,8.3 L325.8,8.3 L322.3,13.2 Z" fill="#1e1e1e"/>
<!-- screen mode -->
<g fill="none" stroke="#1e1e1e" stroke-width="1.2">
<path d="M342.3,5.5 V3.1 H344.7"/><path d="M356.3,3.1 H358.7 V5.5"/><path d="M342.3,13.7 V16.1 H344.7"/><path d="M356.3,16.1 H358.7 V13.7"/>
</g>
<rect x="344.5" y="5" width="12" height="9.3" fill="#f0f0f0" stroke="#222" stroke-width="1"/>
<rect x="346" y="6.5" width="9" height="6.3" fill="url(#darkg)"/>
<path d="M365,8.3 L372,8.3 L368.5,13.2 Z" fill="#1e1e1e"/>
</svg>

<svg class="abs" style="left:0;top:56px" width="660" height="32" viewBox="0 56 660 32">
<defs>
<radialGradient id="lens" cx="0.35" cy="0.3" r="0.8"><stop offset="0" stop-color="#ffffff"/><stop offset="0.6" stop-color="#cfcfcf"/><stop offset="1" stop-color="#8f8f8f"/></radialGradient>
<linearGradient id="btng" x1="0" y1="0" x2="0" y2="1"><stop offset="0" stop-color="#f6f6f6"/><stop offset="1" stop-color="#d6d6d6"/></linearGradient>
<linearGradient id="chkg" x1="0" y1="0" x2="1" y2="1"><stop offset="0" stop-color="#d8d8d8"/><stop offset="1" stop-color="#ffffff"/></linearGradient>
</defs>
<!-- gripper -->
<g fill="#a8a8a8"><rect x="8.5" y="61" width="1" height="1.2"/><rect x="10.5" y="61" width="1" height="1.2"/><rect x="8.5" y="63" width="1" height="1.2"/><rect x="10.5" y="63" width="1" height="1.2"/><rect x="8.5" y="65" width="1" height="1.2"/><rect x="10.5" y="65" width="1" height="1.2"/><rect x="8.5" y="67" width="1" height="1.2"/><rect x="10.5" y="67" width="1" height="1.2"/><rect x="8.5" y="69" width="1" height="1.2"/><rect x="10.5" y="69" width="1" height="1.2"/><rect x="8.5" y="71" width="1" height="1.2"/><rect x="10.5" y="71" width="1" height="1.2"/><rect x="8.5" y="73" width="1" height="1.2"/><rect x="10.5" y="73" width="1" height="1.2"/><rect x="8.5" y="75" width="1" height="1.2"/><rect x="10.5" y="75" width="1" height="1.2"/><rect x="8.5" y="77" width="1" height="1.2"/><rect x="10.5" y="77" width="1" height="1.2"/><rect x="8.5" y="79" width="1" height="1.2"/><rect x="10.5" y="79" width="1" height="1.2"/><rect x="8.5" y="81" width="1" height="1.2"/><rect x="10.5" y="81" width="1" height="1.2"/><rect x="8.5" y="83" width="1" height="1.2"/><rect x="10.5" y="83" width="1" height="1.2"/></g>
<!-- magnifier tool icon -->
<path d="M30.5,73.5 L36,78.8" stroke="#111" stroke-width="2.2" stroke-linecap="round"/>
<circle cx="27" cy="70" r="4.6" fill="url(#lens)" stroke="#2a2a2a" stroke-width="1.2"/>
<path d="M46,70.8 L51.2,70.8 L48.6,74.2 Z" fill="#111"/>
<rect x="61" y="58" width="1" height="29" fill="#8e8e8e"/><rect x="62" y="58" width="1" height="29" fill="#ececec"/>
<!-- zoom in pressed -->
<rect x="67.5" y="63.5" width="17" height="17" rx="2.5" fill="#bcbcbc" stroke="#727272" stroke-width="1"/>
<path d="M78.3,73.8 L82.4,77.4" stroke="#111" stroke-width="2" stroke-linecap="round"/>
<circle cx="75.1" cy="70.6" r="4.4" fill="url(#lens)" stroke="#2a2a2a" stroke-width="1.1"/>
<path d="M72.6,70.6 H77.6 M75.1,68.1 V73.1" stroke="#111" stroke-width="1.1"/>
<path d="M94.9,72.8 L98.5,76.6" stroke="#111" stroke-width="2" stroke-linecap="round"/>
<circle cx="91.7" cy="69.6" r="4.3" fill="url(#lens)" stroke="#2a2a2a" stroke-width="1.1"/>
<path d="M89.4,69.6 H94" stroke="#111" stroke-width="1.1"/>
<rect x="111" y="60" width="1" height="23" fill="#8e8e8e"/><rect x="112" y="60" width="1" height="23" fill="#ececec"/>
<!-- checkboxes -->
<rect x="119.5" y="67.5" width="10" height="10" fill="url(#chkg)" stroke="#9a9a9a" stroke-width="1"/>
<rect x="270" y="67.5" width="10" height="10" fill="url(#chkg)" stroke="#9a9a9a" stroke-width="1"/>
<!-- buttons -->
<rect x="363.5" y="62.5" width="64" height="18.5" rx="3" fill="url(#btng)" stroke="#858585" stroke-width="1"/>
<rect x="436.5" y="62.5" width="64" height="18.5" rx="3" fill="url(#btng)" stroke="#858585" stroke-width="1"/>
<rect x="509.5" y="62.5" width="64" height="18.5" rx="3" fill="url(#btng)" stroke="#858585" stroke-width="1"/>
<rect x="582.5" y="62.5" width="64" height="18.5" rx="3" fill="url(#btng)" stroke="#858585" stroke-width="1"/>
</svg>
<div class="abs otxt" style="left:132px;top:65px">调整窗口大小以满屏显示</div>
<div class="abs otxt" style="left:282px;top:65px">缩放所有窗口</div>
<div class="abs otxt" style="left:371px;top:65px">实际像素</div>
<div class="abs otxt" style="left:444px;top:65px">适合屏幕</div>
<div class="abs otxt" style="left:517px;top:65px">填充屏幕</div>
<div class="abs otxt" style="left:590px;top:65px">打印尺寸</div>

<div class="abs" style="left:41px;top:89px;width:205px;height:19px;background:linear-gradient(#f0f0f0,#e0e0e0 90%,#f2f2f2 95%)"></div>
<div class="abs" style="left:246px;top:89px;width:1px;height:19px;background:#5c5c5c"></div>
<div class="abs" style="left:247px;top:89px;width:226px;height:19px;background:linear-gradient(#a6a6a6,#969696 20%,#8e8e8e 85%,#9a9a9a);"></div>
<div class="abs" style="left:473px;top:89px;width:1px;height:19px;background:#a8a8a8"></div>
<div class="abs tabt" style="left:49px;top:93px;color:#3a3a3a">画美女.psd @ 66.7% (底色, RGB/8)</div>
<div class="abs tabt" style="left:255px;top:93px;color:#3c3c3c">头发丝.psd @ 1600% (图层 1, RGB/8) *</div>
<svg class="abs" style="left:0;top:88px" width="500" height="22" viewBox="0 88 500 22">
<path d="M232,96.3 L238,101.8 M238,96.3 L232,101.8" stroke="#2a2a2a" stroke-width="1.3"/>
<path d="M459.5,96.5 L465.5,102 M465.5,96.5 L459.5,102" stroke="#2e2e2e" stroke-width="1.3"/>
<g fill="#ffffff" opacity="0.9">
<path d="M9,91.5 L12,94 L9,96.5 Z"/><path d="M13,91.5 L16,94 L13,96.5 Z"/>
</g>
</svg>

<svg class="abs" style="left:0;top:88px" width="42" height="483" viewBox="0 88 42 483">
<defs>
<linearGradient id="brg2" x1="0" y1="1" x2="1" y2="0"><stop offset="0" stop-color="#eee"/><stop offset="0.6" stop-color="#999"/><stop offset="1" stop-color="#444"/></linearGradient>
<linearGradient id="mvg" x1="1" y1="0" x2="0" y2="0.3"><stop offset="0" stop-color="#0a0a0a"/><stop offset="0.5" stop-color="#333"/><stop offset="1" stop-color="#aaa"/></linearGradient>
<linearGradient id="tg1" x1="0" y1="0" x2="1" y2="1"><stop offset="0" stop-color="#6a6a6a"/><stop offset="1" stop-color="#111"/></linearGradient>
<linearGradient id="tg2" x1="0" y1="0" x2="0" y2="1"><stop offset="0" stop-color="#ffffff"/><stop offset="1" stop-color="#9a9a9a"/></linearGradient>
<linearGradient id="tg3" x1="0" y1="0" x2="1" y2="0"><stop offset="0" stop-color="#ffffff"/><stop offset="1" stop-color="#8a8a8a"/></linearGradient>
<radialGradient id="ball" cx="0.35" cy="0.3" r="0.75"><stop offset="0" stop-color="#ffffff"/><stop offset="0.5" stop-color="#a8a8a8"/><stop offset="1" stop-color="#3a3a3a"/></radialGradient>
<radialGradient id="dball" cx="0.35" cy="0.3" r="0.75"><stop offset="0" stop-color="#8a8a8a"/><stop offset="0.5" stop-color="#2a2a2a"/><stop offset="1" stop-color="#000"/></radialGradient>
<linearGradient id="hdr" x1="0" y1="0" x2="0" y2="1"><stop offset="0" stop-color="#5e5e5e"/><stop offset="1" stop-color="#3a3a3a"/></linearGradient>
</defs>
<!-- panel header -->
<rect x="4" y="89" width="36" height="11.5" fill="url(#hdr)"/>
<path d="M8.5,91.3 L11.5,94 L8.5,96.7 Z M12.5,91.3 L15.5,94 L12.5,96.7 Z" fill="#f2f2f2"/>
<!-- gripper dots -->
<g fill="#a4a4a4"><rect x="9" y="105" width="1.2" height="1"/><rect x="9" y="107" width="1.2" height="1"/><rect x="11" y="105" width="1.2" height="1"/><rect x="11" y="107" width="1.2" height="1"/><rect x="13" y="105" width="1.2" height="1"/><rect x="13" y="107" width="1.2" height="1"/><rect x="15" y="105" width="1.2" height="1"/><rect x="15" y="107" width="1.2" height="1"/><rect x="17" y="105" width="1.2" height="1"/><rect x="17" y="107" width="1.2" height="1"/><rect x="19" y="105" width="1.2" height="1"/><rect x="19" y="107" width="1.2" height="1"/><rect x="21" y="105" width="1.2" height="1"/><rect x="21" y="107" width="1.2" height="1"/><rect x="23" y="105" width="1.2" height="1"/><rect x="23" y="107" width="1.2" height="1"/><rect x="25" y="105" width="1.2" height="1"/><rect x="25" y="107" width="1.2" height="1"/><rect x="27" y="105" width="1.2" height="1"/><rect x="27" y="107" width="1.2" height="1"/><rect x="29" y="105" width="1.2" height="1"/><rect x="29" y="107" width="1.2" height="1"/><rect x="31" y="105" width="1.2" height="1"/><rect x="31" y="107" width="1.2" height="1"/><rect x="33" y="105" width="1.2" height="1"/><rect x="33" y="107" width="1.2" height="1"/><rect x="35" y="105" width="1.2" height="1"/><rect x="35" y="107" width="1.2" height="1"/></g>
<!-- corner triangles -->
<g fill="#111">
<path d="M33.5,152.0 V155.5 H30 Z"/>
<path d="M33.5,174.0 V177.5 H30 Z"/>
<path d="M33.5,196.0 V199.5 H30 Z"/>
<path d="M33.5,218.5 V222.0 H30 Z"/>
<path d="M33.5,240.5 V244.0 H30 Z"/>
<path d="M33.5,267.5 V271.0 H30 Z"/>
<path d="M33.5,288.5 V292.0 H30 Z"/>
<path d="M33.5,310.5 V314.0 H30 Z"/>
<path d="M33.5,333.0 V336.5 H30 Z"/>
<path d="M33.5,355.0 V358.5 H30 Z"/>
<path d="M33.5,377.5 V381.0 H30 Z"/>
<path d="M33.5,399.5 V403.0 H30 Z"/>
<path d="M33.5,422.5 V426.0 H30 Z"/>
<path d="M33.5,447.5 V451.0 H30 Z"/>
<path d="M33.5,469.5 V473.0 H30 Z"/>
<path d="M33.5,491.5 V495.0 H30 Z"/>
<path d="M33.5,514.5 V518.0 H30 Z"/>
<path d="M33.5,540.0 V543.5 H30 Z"/>
<path d="M33.5,562.5 V566.0 H30 Z"/>
</g>
<!-- separators -->
<rect x="9" y="247" width="27" height="1" fill="#a8a8a8"/><rect x="9" y="248" width="27" height="1" fill="#eeeeee"/>
<rect x="9" y="429" width="27" height="1" fill="#a8a8a8"/><rect x="9" y="430" width="27" height="1" fill="#eeeeee"/>
<rect x="9" y="521" width="27" height="1" fill="#a8a8a8"/><rect x="9" y="522" width="27" height="1" fill="#eeeeee"/>
<!-- 1 move -->
<path d="M13.2,116.3 L21,123.8 L13.2,126.8 Z" fill="url(#mvg)"/>
<g stroke="#111" stroke-width="1.3"><path d="M25.5,121.5 V131 M20.8,126.3 H30.2"/></g>
<g fill="#111"><path d="M25.5,120.8 L23.6,123 H27.4 Z M25.5,131.7 L23.6,129.5 H27.4 Z M20.2,126.3 L22.4,124.4 V128.2 Z M30.8,126.3 L28.6,124.4 V128.2 Z"/></g>
<!-- 2 marquee -->
<ellipse cx="22" cy="146" rx="7.6" ry="6.3" fill="none" stroke="#2a2a2a" stroke-width="1.1" stroke-dasharray="3 1.6"/>
<!-- 3 lasso -->
<ellipse cx="22.5" cy="165.8" rx="7.5" ry="4.2" transform="rotate(-12 22.5 165.8)" fill="none" stroke="#3a3a3a" stroke-width="1.2"/>
<path d="M16,168.5 C14.5,170 17,171 15.5,172.5 C14.5,173.5 16.5,174.5 15.8,175.3" fill="none" stroke="#333" stroke-width="1.1"/>
<!-- 4 wand -->
<path d="M19,188 L29.2,197.8" stroke="#1a1a1a" stroke-width="2"/>
<g stroke="#555" stroke-width="0.9"><path d="M18.2,183.5 V191 M14.5,187.3 H22 M15.6,184.7 L20.8,189.9 M20.8,184.7 L15.6,189.9"/></g>
<!-- 5 crop -->
<g fill="#1c1c1c">
<rect x="18.5" y="204.5" width="1.6" height="13.3"/>
<rect x="14.3" y="208.6" width="13" height="1.6"/>
<rect x="25.9" y="208.6" width="1.6" height="11"/>
<rect x="18.5" y="216.6" width="12" height="1.6"/>
</g>
<path d="M20,216.5 L30,206" stroke="#444" stroke-width="0.9"/>
<!-- 6 eyedropper -->
<path d="M15.2,241.6 L24,232.8" stroke="#777" stroke-width="2.2" stroke-linecap="round"/>
<path d="M15.2,241.6 L24,232.8" stroke="#fff" stroke-width="0.8"/>
<path d="M22,231 L26.5,235.5" stroke="#111" stroke-width="2.2"/>
<path d="M24.5,229.5 L27.8,226.8 C29,225.8 30.6,227.4 29.6,228.6 L27,231.8 Z" fill="#111"/>
<!-- 7 healing -->
<path d="M18.5,257.5 C15,257.5 12,260.5 12,264 V268.5 H17 Z" fill="#fff"/>
<path d="M18.5,257.5 C15,257.5 12,260.5 12,264 V268.5" fill="none" stroke="#222" stroke-width="0.9" stroke-dasharray="0.9 1.1"/>
<path d="M15.8,266.4 L28,254.7" stroke="#5a5a5a" stroke-width="6.4" stroke-linecap="round"/>
<path d="M15.8,266.4 L28,254.7" stroke="#a8a8a8" stroke-width="4.4" stroke-linecap="round"/>
<path d="M19.3,259.6 L22.6,262.9 M22.8,256.3 L26,259.5" stroke="#6a6a6a" stroke-width="0.8"/>
<g fill="#ececec"><circle cx="21.4" cy="259.2" r="0.7"/><circle cx="23" cy="260.8" r="0.7"/><circle cx="20.6" cy="261.7" r="0.6"/><circle cx="25.3" cy="255.8" r="0.7"/><circle cx="26.8" cy="257.3" r="0.7"/><circle cx="24.6" cy="258.1" r="0.6"/></g>
<!-- 8 brush -->
<path d="M22,282.5 L30.8,276.3" stroke="#333" stroke-width="2" stroke-linecap="round"/>
<path d="M22.5,282 L30.3,276.6" stroke="#d8d8d8" stroke-width="0.7"/>
<path d="M14.8,289.3 C15.5,285 18,282 21.3,281.5 L23.3,283.5 C22.5,287 19,289.3 14.8,289.3 Z" fill="url(#brg2)" stroke="#333" stroke-width="0.8"/>
<!-- 9 stamp -->
<circle cx="21.5" cy="300.3" r="3" fill="url(#ball)" stroke="#444" stroke-width="0.6"/>
<rect x="20.6" y="302.8" width="1.8" height="2.6" fill="#444"/>
<rect x="14.3" y="305.2" width="14.8" height="7.5" rx="1.5" fill="url(#tg2)" stroke="#2a2a2a" stroke-width="1.1"/>
<rect x="15" y="308" width="13.4" height="1" fill="#555"/>
<path d="M19,308.3 H24 L21.5,311.5 Z" fill="#111"/>
<!-- 10 history brush -->
<path d="M22,327 L30.5,321" stroke="#333" stroke-width="1.9" stroke-linecap="round"/>
<path d="M22.5,326.6 L30,321.3" stroke="#d8d8d8" stroke-width="0.6"/>
<path d="M14.8,334.6 C15.3,330.5 17.8,327.3 21.2,326.8 L23,328.8 C22.2,332.3 18.8,334.6 14.8,334.6 Z" fill="url(#brg2)" stroke="#333" stroke-width="0.8"/>
<path d="M16.5,324 C18,321.5 21.5,321.2 23,323.2" fill="none" stroke="#222" stroke-width="1.1"/>
<path d="M15,322.2 L16.8,325.8 L18.6,322.6 Z" fill="#222"/>
<path d="M27.8,326 C29.2,329 28,332.5 25.8,335" fill="none" stroke="#222" stroke-width="1" stroke-dasharray="1.2 1"/>
<!-- 11 eraser -->
<path d="M19.5,345.5 L30,345.5 L24.5,352.3 L14,352.3 Z" fill="#f6f6f6" stroke="#222" stroke-width="1"/>
<path d="M14,352.3 V355 H24.5 L30,348 V345.5 L24.5,352.3 Z" fill="#8a8a8a" stroke="#222" stroke-width="1"/>
<!-- 12 bucket -->
<path d="M21.3,366.2 C24,367 28,369.5 28.9,372.2 L28.6,377 C28.2,378.2 27,378.2 26.5,377.2 L26,372.2 Z" fill="#111"/>
<path d="M13,374 L20.6,366.3 L26,372.2 L18.5,379.3 Z" fill="url(#tg2)" stroke="#222" stroke-width="1.1" stroke-linejoin="round"/>
<ellipse cx="19.2" cy="367.6" rx="1.9" ry="3.4" fill="none" stroke="#333" stroke-width="1"/>
<!-- 13 blur drop -->
<path d="M21.6,386 C19.5,390.5 16,394 16,397 C16,400 18.5,402 21.6,402 C24.7,402 27.2,400 27.2,397 C27.2,394 23.7,390.5 21.6,386 Z" fill="url(#tg3)" stroke="#555" stroke-width="0.9"/>
<!-- 14 dodge -->
<path d="M22.5,417.5 L29,423.8" stroke="#1a1a1a" stroke-width="1.4"/>
<circle cx="20" cy="414.5" r="4.4" fill="url(#dball)"/>
<!-- 15 pen -->
<path d="M21.4,434 L25.8,441 L23.8,445.5 H19 L17,441 Z" fill="#fafafa" stroke="#111" stroke-width="1.2"/>
<path d="M21.4,437 V442" stroke="#111" stroke-width="0.9"/>
<rect x="18.8" y="446.2" width="5.2" height="3" fill="#111"/>
<!-- 16 type -->
<path d="M16.8,457 H28.3 L28.5,461 H27.8 C27.4,459.4 26.8,458.8 25.3,458.8 H23.5 V468 C23.5,469 24,469.3 25.6,469.4 V470 H19.5 V469.4 C21.1,469.3 21.6,469 21.6,468 V458.8 H19.8 C18.3,458.8 17.7,459.4 17.3,461 H16.6 Z" fill="#111"/>
<!-- 17 path select -->
<path d="M17,480 L25.7,488.3 L22.3,488.6 L24.3,492.5 L22.6,493.3 L20.6,489.4 L17.5,491.5 Z" fill="#111"/>
<!-- 18 hexagon -->
<path d="M18.3,503 H26 L29.6,508.8 L26,514.5 H18.3 L14.7,508.8 Z" fill="url(#tg2)" stroke="#333" stroke-width="1"/>
<!-- 19 3d rotate -->
<path d="M18.5,530.8 C15,530.5 12,532 12.6,534.5 C13.2,537.2 16,538.8 19,539.5" fill="none" stroke="#111" stroke-width="1.3"/>
<path d="M17.5,537.5 L23.6,540.6 L17.8,541.6 Z" fill="#111"/>
<path d="M26.5,540.6 C30,540.2 31.2,538.4 30.5,536.8 C29.8,535.2 28,534.2 25.8,533.6" fill="none" stroke="#111" stroke-width="1.3"/>
<circle cx="22.3" cy="530.8" r="4.2" fill="url(#ball)"/>
<!-- 20 3d orbit -->
<path d="M20.5,554.6 C15,554.2 11.5,555.6 12.3,558.2 C13,560.6 16,562.2 19.5,562.8" fill="none" stroke="#111" stroke-width="1.3"/>
<path d="M20.5,554.6 C26,555.2 30.5,557.5 30.8,559.5 C31,561 29.5,562 26.5,562.3" fill="none" stroke="#111" stroke-width="1.3"/>
<path d="M17.8,560.8 L23.6,563.8 L17.8,564.8 Z" fill="#111"/>
<rect x="26" y="549.8" width="6" height="3.8" rx="1" fill="url(#tg1)"/>
<path d="M23.5,549.8 L26,551.7 L23.5,553.6 Z" fill="#777"/>
</svg>

<svg class="abs" style="left:0;top:0" width="794" height="571" viewBox="0 0 794 571">
<defs>
<linearGradient id="phpg" x1="0" y1="0" x2="0" y2="1"><stop offset="0" stop-color="#f39a90"/><stop offset="1" stop-color="#e2554d"/></linearGradient>
</defs>
<path d="M65.3,230.6 L161.5,276.8 L163,272.5 L174.5,287 L156,287 L158.6,282.2 L65,231.6 Z" fill="#fe3535"/>
<ellipse cx="715.4" cy="538.2" rx="20.8" ry="10.6" fill="url(#phpg)"/>
<g fill="none" stroke="#ffffff" stroke-width="1.55" stroke-linecap="round" stroke-linejoin="round">
<path d="M705.4,534.4 L702.6,545.4"/>
<path d="M705.2,535.2 C706,534.3 708,534 710.5,534 C713,534 713.6,535.6 713,538 C712.4,540.4 710.6,541.3 708.3,541.3 L703.8,541.3"/>
<path d="M716.3,531.6 L713.8,541.4"/>
<path d="M715.3,535.5 C716.2,534.4 717.8,534 719.5,534 C721.4,534 721.8,535.2 721.3,537.2 L720.2,541.4"/>
<path d="M723.4,534.4 L720.6,545.4"/>
<path d="M723.2,535.2 C724,534.3 726,534 728.5,534 C731,534 731.6,535.6 731,538 C730.4,540.4 728.6,541.3 726.3,541.3 L721.8,541.3"/>
</g>
</svg>
<div class="abs" style="left:741px;top:529px;font-size:14px;letter-spacing:1.6px;color:#2e2e2e;white-space:nowrap;line-height:18px">中文网</div>

</div>
</body></html>
